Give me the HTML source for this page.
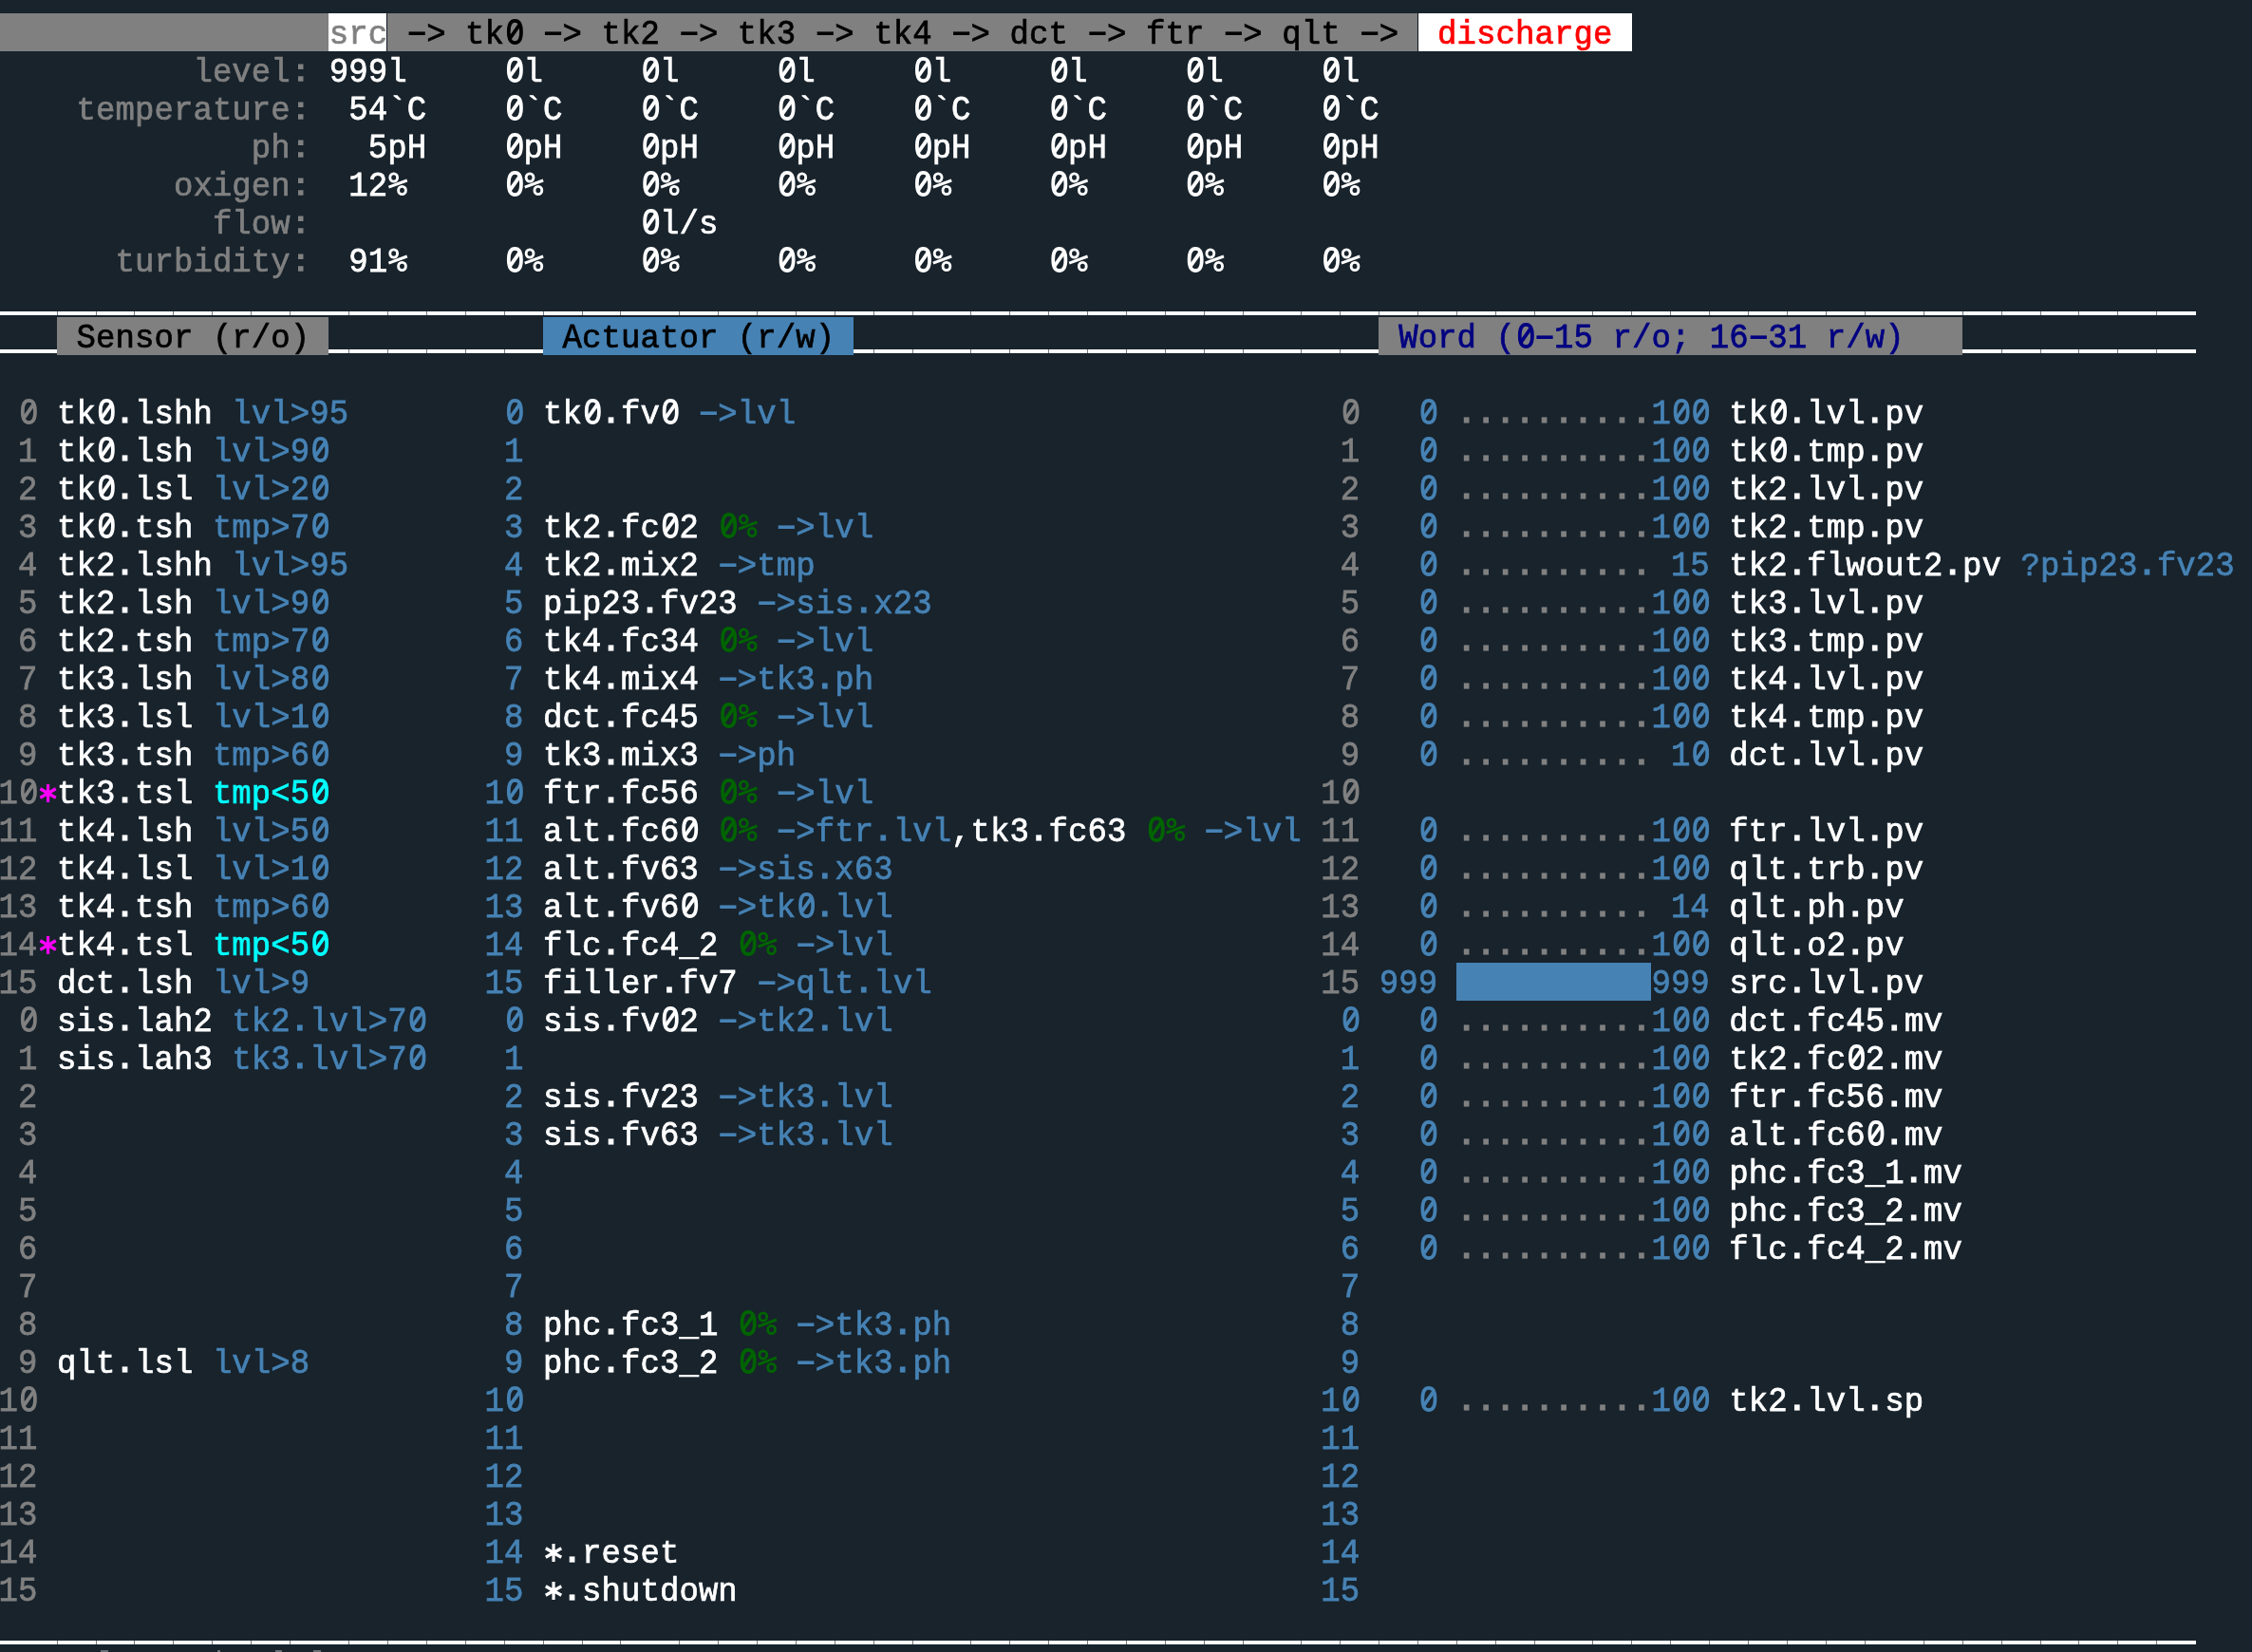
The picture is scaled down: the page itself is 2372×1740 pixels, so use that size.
<!DOCTYPE html><html><head><meta charset="utf-8"><style>
html,body{margin:0;padding:0;width:2372px;height:1740px;overflow:hidden;background:#18232c}
.r{position:absolute}
#tx{position:absolute;left:0;top:0;width:2372px;height:1740px;will-change:transform}
#tx div{position:absolute;white-space:pre;font-family:"Liberation Mono",monospace;font-size:34.00px;line-height:40px;height:40px;transform-origin:0 29px;-webkit-text-stroke:0.70px currentColor}
#tx .u{transform:scaleY(1.100)}#tx .l{transform:scaleY(1.050)}
.g{position:absolute;width:1px;height:4px;background:#767a80}
svg{position:absolute;left:0;top:0}
</style></head><body>
<div class="r" style="left:-2px;top:14px;width:348px;height:40px;background:#808080"></div>
<div class="r" style="left:0px;top:14px;width:346px;height:40px;background:#808080"></div>
<div class="r" style="left:346px;top:14px;width:62px;height:40px;background:#ffffff"></div>
<div class="r" style="left:408px;top:14px;width:1085px;height:40px;background:#808080"></div>
<div class="r" style="left:1494px;top:14px;width:225px;height:40px;background:#ffffff"></div>
<div class="r" style="left:60px;top:334px;width:286px;height:40px;background:#808080"></div>
<div class="r" style="left:572px;top:334px;width:327px;height:40px;background:#4682b4"></div>
<div class="r" style="left:1452px;top:334px;width:615px;height:40px;background:#808080"></div>
<div class="r" style="left:1534px;top:1014px;width:205px;height:40px;background:#4682b4"></div>
<div class="r" style="left:0px;top:328px;width:2313px;height:4px;background:#ffffff"></div>
<div class="r" style="left:0px;top:368px;width:2313px;height:4px;background:#ffffff"></div>
<div class="r" style="left:0px;top:1728px;width:2313px;height:4px;background:#ffffff"></div>
<div class="r" style="left:60px;top:334px;width:286px;height:40px;background:#808080"></div>
<div class="r" style="left:572px;top:334px;width:327px;height:40px;background:#4682b4"></div>
<div class="r" style="left:1452px;top:334px;width:615px;height:40px;background:#808080"></div>
<div class="g" style="left:60px;top:328px"></div>
<div class="g" style="left:101px;top:328px"></div>
<div class="g" style="left:141px;top:328px"></div>
<div class="g" style="left:182px;top:328px"></div>
<div class="g" style="left:223px;top:328px"></div>
<div class="g" style="left:264px;top:328px"></div>
<div class="g" style="left:305px;top:328px"></div>
<div class="g" style="left:367px;top:328px"></div>
<div class="g" style="left:408px;top:328px"></div>
<div class="g" style="left:449px;top:328px"></div>
<div class="g" style="left:490px;top:328px"></div>
<div class="g" style="left:531px;top:328px"></div>
<div class="g" style="left:572px;top:328px"></div>
<div class="g" style="left:613px;top:328px"></div>
<div class="g" style="left:653px;top:328px"></div>
<div class="g" style="left:715px;top:328px"></div>
<div class="g" style="left:756px;top:328px"></div>
<div class="g" style="left:797px;top:328px"></div>
<div class="g" style="left:838px;top:328px"></div>
<div class="g" style="left:879px;top:328px"></div>
<div class="g" style="left:920px;top:328px"></div>
<div class="g" style="left:961px;top:328px"></div>
<div class="g" style="left:1022px;top:328px"></div>
<div class="g" style="left:1063px;top:328px"></div>
<div class="g" style="left:1104px;top:328px"></div>
<div class="g" style="left:1145px;top:328px"></div>
<div class="g" style="left:1186px;top:328px"></div>
<div class="g" style="left:1227px;top:328px"></div>
<div class="g" style="left:1268px;top:328px"></div>
<div class="g" style="left:1309px;top:328px"></div>
<div class="g" style="left:1370px;top:328px"></div>
<div class="g" style="left:1411px;top:328px"></div>
<div class="g" style="left:1452px;top:328px"></div>
<div class="g" style="left:1493px;top:328px"></div>
<div class="g" style="left:1534px;top:328px"></div>
<div class="g" style="left:1575px;top:328px"></div>
<div class="g" style="left:1616px;top:328px"></div>
<div class="g" style="left:1677px;top:328px"></div>
<div class="g" style="left:1718px;top:328px"></div>
<div class="g" style="left:1759px;top:328px"></div>
<div class="g" style="left:1800px;top:328px"></div>
<div class="g" style="left:1841px;top:328px"></div>
<div class="g" style="left:1882px;top:328px"></div>
<div class="g" style="left:1923px;top:328px"></div>
<div class="g" style="left:1964px;top:328px"></div>
<div class="g" style="left:2026px;top:328px"></div>
<div class="g" style="left:2067px;top:328px"></div>
<div class="g" style="left:2108px;top:328px"></div>
<div class="g" style="left:2149px;top:328px"></div>
<div class="g" style="left:2189px;top:328px"></div>
<div class="g" style="left:2230px;top:328px"></div>
<div class="g" style="left:2271px;top:328px"></div>
<div class="g" style="left:367px;top:368px"></div>
<div class="g" style="left:408px;top:368px"></div>
<div class="g" style="left:449px;top:368px"></div>
<div class="g" style="left:490px;top:368px"></div>
<div class="g" style="left:531px;top:368px"></div>
<div class="g" style="left:920px;top:368px"></div>
<div class="g" style="left:961px;top:368px"></div>
<div class="g" style="left:1022px;top:368px"></div>
<div class="g" style="left:1063px;top:368px"></div>
<div class="g" style="left:1104px;top:368px"></div>
<div class="g" style="left:1145px;top:368px"></div>
<div class="g" style="left:1186px;top:368px"></div>
<div class="g" style="left:1227px;top:368px"></div>
<div class="g" style="left:1268px;top:368px"></div>
<div class="g" style="left:1309px;top:368px"></div>
<div class="g" style="left:1370px;top:368px"></div>
<div class="g" style="left:1411px;top:368px"></div>
<div class="g" style="left:2108px;top:368px"></div>
<div class="g" style="left:2149px;top:368px"></div>
<div class="g" style="left:2189px;top:368px"></div>
<div class="g" style="left:2230px;top:368px"></div>
<div class="g" style="left:2271px;top:368px"></div>
<div class="g" style="left:60px;top:1728px"></div>
<div class="g" style="left:101px;top:1728px"></div>
<div class="g" style="left:141px;top:1728px"></div>
<div class="g" style="left:182px;top:1728px"></div>
<div class="g" style="left:223px;top:1728px"></div>
<div class="g" style="left:264px;top:1728px"></div>
<div class="g" style="left:305px;top:1728px"></div>
<div class="g" style="left:367px;top:1728px"></div>
<div class="g" style="left:408px;top:1728px"></div>
<div class="g" style="left:449px;top:1728px"></div>
<div class="g" style="left:490px;top:1728px"></div>
<div class="g" style="left:531px;top:1728px"></div>
<div class="g" style="left:572px;top:1728px"></div>
<div class="g" style="left:613px;top:1728px"></div>
<div class="g" style="left:653px;top:1728px"></div>
<div class="g" style="left:715px;top:1728px"></div>
<div class="g" style="left:756px;top:1728px"></div>
<div class="g" style="left:797px;top:1728px"></div>
<div class="g" style="left:838px;top:1728px"></div>
<div class="g" style="left:879px;top:1728px"></div>
<div class="g" style="left:920px;top:1728px"></div>
<div class="g" style="left:961px;top:1728px"></div>
<div class="g" style="left:1022px;top:1728px"></div>
<div class="g" style="left:1063px;top:1728px"></div>
<div class="g" style="left:1104px;top:1728px"></div>
<div class="g" style="left:1145px;top:1728px"></div>
<div class="g" style="left:1186px;top:1728px"></div>
<div class="g" style="left:1227px;top:1728px"></div>
<div class="g" style="left:1268px;top:1728px"></div>
<div class="g" style="left:1309px;top:1728px"></div>
<div class="g" style="left:1370px;top:1728px"></div>
<div class="g" style="left:1411px;top:1728px"></div>
<div class="g" style="left:1452px;top:1728px"></div>
<div class="g" style="left:1493px;top:1728px"></div>
<div class="g" style="left:1534px;top:1728px"></div>
<div class="g" style="left:1575px;top:1728px"></div>
<div class="g" style="left:1616px;top:1728px"></div>
<div class="g" style="left:1677px;top:1728px"></div>
<div class="g" style="left:1718px;top:1728px"></div>
<div class="g" style="left:1759px;top:1728px"></div>
<div class="g" style="left:1800px;top:1728px"></div>
<div class="g" style="left:1841px;top:1728px"></div>
<div class="g" style="left:1882px;top:1728px"></div>
<div class="g" style="left:1923px;top:1728px"></div>
<div class="g" style="left:1964px;top:1728px"></div>
<div class="g" style="left:2026px;top:1728px"></div>
<div class="g" style="left:2067px;top:1728px"></div>
<div class="g" style="left:2108px;top:1728px"></div>
<div class="g" style="left:2149px;top:1728px"></div>
<div class="g" style="left:2189px;top:1728px"></div>
<div class="g" style="left:2230px;top:1728px"></div>
<div class="g" style="left:2271px;top:1728px"></div>
<div class="r" style="left:407px;top:14px;width:1px;height:40px;background:#0d1620"></div>
<div class="r" style="left:1493px;top:14px;width:1px;height:40px;background:#0d1620"></div>
<div class="r" style="left:106px;top:1738px;width:8px;height:2px;background:#6a6f75"></div>
<div class="r" style="left:229px;top:1738px;width:3px;height:2px;background:#6a6f75"></div>
<div class="r" style="left:290px;top:1738px;width:7px;height:2px;background:#6a6f75"></div>
<div class="r" style="left:330px;top:1738px;width:8px;height:2px;background:#6a6f75"></div>
<div id="tx">
<div class="l" style="left:346.76px;top:17.00px;color:#808080">s</div>
<div class="l" style="left:367.24px;top:17.00px;color:#808080">r</div>
<div class="l" style="left:387.72px;top:17.00px;color:#808080">c</div>
<div class="l" style="left:449.16px;top:17.00px;color:#000000">&gt;</div>
<div class="l" style="left:490.12px;top:17.00px;color:#000000">t</div>
<div class="l" style="left:510.60px;top:17.00px;color:#000000">k</div>
<div class="l" style="left:592.52px;top:17.00px;color:#000000">&gt;</div>
<div class="l" style="left:633.48px;top:17.00px;color:#000000">t</div>
<div class="l" style="left:653.96px;top:17.00px;color:#000000">k</div>
<div class="u" style="left:674.44px;top:17.00px;color:#000000">2</div>
<div class="l" style="left:735.88px;top:17.00px;color:#000000">&gt;</div>
<div class="l" style="left:776.84px;top:17.00px;color:#000000">t</div>
<div class="l" style="left:797.32px;top:17.00px;color:#000000">k</div>
<div class="u" style="left:817.80px;top:17.00px;color:#000000">3</div>
<div class="l" style="left:879.24px;top:17.00px;color:#000000">&gt;</div>
<div class="l" style="left:920.20px;top:17.00px;color:#000000">t</div>
<div class="l" style="left:940.68px;top:17.00px;color:#000000">k</div>
<div class="u" style="left:961.16px;top:17.00px;color:#000000">4</div>
<div class="l" style="left:1022.60px;top:17.00px;color:#000000">&gt;</div>
<div class="l" style="left:1063.56px;top:17.00px;color:#000000">d</div>
<div class="l" style="left:1084.04px;top:17.00px;color:#000000">c</div>
<div class="l" style="left:1104.52px;top:17.00px;color:#000000">t</div>
<div class="l" style="left:1165.96px;top:17.00px;color:#000000">&gt;</div>
<div class="l" style="left:1206.92px;top:17.00px;color:#000000">f</div>
<div class="l" style="left:1227.40px;top:17.00px;color:#000000">t</div>
<div class="l" style="left:1247.88px;top:17.00px;color:#000000">r</div>
<div class="l" style="left:1309.32px;top:17.00px;color:#000000">&gt;</div>
<div class="l" style="left:1350.28px;top:17.00px;color:#000000">q</div>
<div class="l" style="left:1370.76px;top:17.00px;color:#000000">l</div>
<div class="l" style="left:1391.24px;top:17.00px;color:#000000">t</div>
<div class="l" style="left:1452.68px;top:17.00px;color:#000000">&gt;</div>
<div class="l" style="left:1514.12px;top:17.00px;color:#ff0000">d</div>
<div class="l" style="left:1534.60px;top:17.00px;color:#ff0000">i</div>
<div class="l" style="left:1555.08px;top:17.00px;color:#ff0000">s</div>
<div class="l" style="left:1575.56px;top:17.00px;color:#ff0000">c</div>
<div class="l" style="left:1596.04px;top:17.00px;color:#ff0000">h</div>
<div class="l" style="left:1616.52px;top:17.00px;color:#ff0000">a</div>
<div class="l" style="left:1637.00px;top:17.00px;color:#ff0000">r</div>
<div class="l" style="left:1657.48px;top:17.00px;color:#ff0000">g</div>
<div class="l" style="left:1677.96px;top:17.00px;color:#ff0000">e</div>
<div class="l" style="left:203.40px;top:57.00px;color:#808080">l</div>
<div class="l" style="left:223.88px;top:57.00px;color:#808080">e</div>
<div class="l" style="left:244.36px;top:57.00px;color:#808080">v</div>
<div class="l" style="left:264.84px;top:57.00px;color:#808080">e</div>
<div class="l" style="left:285.32px;top:57.00px;color:#808080">l</div>
<div class="l" style="left:80.52px;top:97.00px;color:#808080">t</div>
<div class="l" style="left:101.00px;top:97.00px;color:#808080">e</div>
<div class="l" style="left:121.48px;top:97.00px;color:#808080">m</div>
<div class="l" style="left:141.96px;top:97.00px;color:#808080">p</div>
<div class="l" style="left:162.44px;top:97.00px;color:#808080">e</div>
<div class="l" style="left:182.92px;top:97.00px;color:#808080">r</div>
<div class="l" style="left:203.40px;top:97.00px;color:#808080">a</div>
<div class="l" style="left:223.88px;top:97.00px;color:#808080">t</div>
<div class="l" style="left:244.36px;top:97.00px;color:#808080">u</div>
<div class="l" style="left:264.84px;top:97.00px;color:#808080">r</div>
<div class="l" style="left:285.32px;top:97.00px;color:#808080">e</div>
<div class="l" style="left:264.84px;top:137.00px;color:#808080">p</div>
<div class="l" style="left:285.32px;top:137.00px;color:#808080">h</div>
<div class="l" style="left:182.92px;top:177.00px;color:#808080">o</div>
<div class="l" style="left:203.40px;top:177.00px;color:#808080">x</div>
<div class="l" style="left:223.88px;top:177.00px;color:#808080">i</div>
<div class="l" style="left:244.36px;top:177.00px;color:#808080">g</div>
<div class="l" style="left:264.84px;top:177.00px;color:#808080">e</div>
<div class="l" style="left:285.32px;top:177.00px;color:#808080">n</div>
<div class="l" style="left:223.88px;top:217.00px;color:#808080">f</div>
<div class="l" style="left:244.36px;top:217.00px;color:#808080">l</div>
<div class="l" style="left:264.84px;top:217.00px;color:#808080">o</div>
<div class="l" style="left:285.32px;top:217.00px;color:#808080">w</div>
<div class="l" style="left:121.48px;top:257.00px;color:#808080">t</div>
<div class="l" style="left:141.96px;top:257.00px;color:#808080">u</div>
<div class="l" style="left:162.44px;top:257.00px;color:#808080">r</div>
<div class="l" style="left:182.92px;top:257.00px;color:#808080">b</div>
<div class="l" style="left:203.40px;top:257.00px;color:#808080">i</div>
<div class="l" style="left:223.88px;top:257.00px;color:#808080">d</div>
<div class="l" style="left:244.36px;top:257.00px;color:#808080">i</div>
<div class="l" style="left:264.84px;top:257.00px;color:#808080">t</div>
<div class="l" style="left:285.32px;top:257.00px;color:#808080">y</div>
<div class="u" style="left:346.76px;top:57.00px;color:#ffffff">9</div>
<div class="u" style="left:367.24px;top:57.00px;color:#ffffff">9</div>
<div class="u" style="left:387.72px;top:57.00px;color:#ffffff">9</div>
<div class="l" style="left:408.20px;top:57.00px;color:#ffffff">l</div>
<div class="l" style="left:551.56px;top:57.00px;color:#ffffff">l</div>
<div class="l" style="left:694.92px;top:57.00px;color:#ffffff">l</div>
<div class="l" style="left:838.28px;top:57.00px;color:#ffffff">l</div>
<div class="l" style="left:981.64px;top:57.00px;color:#ffffff">l</div>
<div class="l" style="left:1125.00px;top:57.00px;color:#ffffff">l</div>
<div class="l" style="left:1268.36px;top:57.00px;color:#ffffff">l</div>
<div class="l" style="left:1411.72px;top:57.00px;color:#ffffff">l</div>
<div class="u" style="left:367.24px;top:97.00px;color:#ffffff">5</div>
<div class="u" style="left:387.72px;top:97.00px;color:#ffffff">4</div>
<div class="l" style="left:408.20px;top:97.00px;color:#ffffff">`</div>
<div class="u" style="left:428.68px;top:97.00px;color:#ffffff">C</div>
<div class="l" style="left:551.56px;top:97.00px;color:#ffffff">`</div>
<div class="u" style="left:572.04px;top:97.00px;color:#ffffff">C</div>
<div class="l" style="left:694.92px;top:97.00px;color:#ffffff">`</div>
<div class="u" style="left:715.40px;top:97.00px;color:#ffffff">C</div>
<div class="l" style="left:838.28px;top:97.00px;color:#ffffff">`</div>
<div class="u" style="left:858.76px;top:97.00px;color:#ffffff">C</div>
<div class="l" style="left:981.64px;top:97.00px;color:#ffffff">`</div>
<div class="u" style="left:1002.12px;top:97.00px;color:#ffffff">C</div>
<div class="l" style="left:1125.00px;top:97.00px;color:#ffffff">`</div>
<div class="u" style="left:1145.48px;top:97.00px;color:#ffffff">C</div>
<div class="l" style="left:1268.36px;top:97.00px;color:#ffffff">`</div>
<div class="u" style="left:1288.84px;top:97.00px;color:#ffffff">C</div>
<div class="l" style="left:1411.72px;top:97.00px;color:#ffffff">`</div>
<div class="u" style="left:1432.20px;top:97.00px;color:#ffffff">C</div>
<div class="u" style="left:387.72px;top:137.00px;color:#ffffff">5</div>
<div class="l" style="left:408.20px;top:137.00px;color:#ffffff">p</div>
<div class="u" style="left:428.68px;top:137.00px;color:#ffffff">H</div>
<div class="l" style="left:551.56px;top:137.00px;color:#ffffff">p</div>
<div class="u" style="left:572.04px;top:137.00px;color:#ffffff">H</div>
<div class="l" style="left:694.92px;top:137.00px;color:#ffffff">p</div>
<div class="u" style="left:715.40px;top:137.00px;color:#ffffff">H</div>
<div class="l" style="left:838.28px;top:137.00px;color:#ffffff">p</div>
<div class="u" style="left:858.76px;top:137.00px;color:#ffffff">H</div>
<div class="l" style="left:981.64px;top:137.00px;color:#ffffff">p</div>
<div class="u" style="left:1002.12px;top:137.00px;color:#ffffff">H</div>
<div class="l" style="left:1125.00px;top:137.00px;color:#ffffff">p</div>
<div class="u" style="left:1145.48px;top:137.00px;color:#ffffff">H</div>
<div class="l" style="left:1268.36px;top:137.00px;color:#ffffff">p</div>
<div class="u" style="left:1288.84px;top:137.00px;color:#ffffff">H</div>
<div class="l" style="left:1411.72px;top:137.00px;color:#ffffff">p</div>
<div class="u" style="left:1432.20px;top:137.00px;color:#ffffff">H</div>
<div class="u" style="left:367.24px;top:177.00px;color:#ffffff">1</div>
<div class="u" style="left:387.72px;top:177.00px;color:#ffffff">2</div>
<div class="l" style="left:694.92px;top:217.00px;color:#ffffff">l</div>
<div class="l" style="left:715.40px;top:217.00px;color:#ffffff">/</div>
<div class="l" style="left:735.88px;top:217.00px;color:#ffffff">s</div>
<div class="u" style="left:367.24px;top:257.00px;color:#ffffff">9</div>
<div class="u" style="left:387.72px;top:257.00px;color:#ffffff">1</div>
<div class="u" style="left:80.52px;top:337.00px;color:#000000">S</div>
<div class="l" style="left:101.00px;top:337.00px;color:#000000">e</div>
<div class="l" style="left:121.48px;top:337.00px;color:#000000">n</div>
<div class="l" style="left:141.96px;top:337.00px;color:#000000">s</div>
<div class="l" style="left:162.44px;top:337.00px;color:#000000">o</div>
<div class="l" style="left:182.92px;top:337.00px;color:#000000">r</div>
<div class="l" style="left:223.88px;top:337.00px;color:#000000">(</div>
<div class="l" style="left:244.36px;top:337.00px;color:#000000">r</div>
<div class="l" style="left:264.84px;top:337.00px;color:#000000">/</div>
<div class="l" style="left:285.32px;top:337.00px;color:#000000">o</div>
<div class="l" style="left:305.80px;top:337.00px;color:#000000">)</div>
<div class="u" style="left:592.52px;top:337.00px;color:#000000">A</div>
<div class="l" style="left:613.00px;top:337.00px;color:#000000">c</div>
<div class="l" style="left:633.48px;top:337.00px;color:#000000">t</div>
<div class="l" style="left:653.96px;top:337.00px;color:#000000">u</div>
<div class="l" style="left:674.44px;top:337.00px;color:#000000">a</div>
<div class="l" style="left:694.92px;top:337.00px;color:#000000">t</div>
<div class="l" style="left:715.40px;top:337.00px;color:#000000">o</div>
<div class="l" style="left:735.88px;top:337.00px;color:#000000">r</div>
<div class="l" style="left:776.84px;top:337.00px;color:#000000">(</div>
<div class="l" style="left:797.32px;top:337.00px;color:#000000">r</div>
<div class="l" style="left:817.80px;top:337.00px;color:#000000">/</div>
<div class="l" style="left:838.28px;top:337.00px;color:#000000">w</div>
<div class="l" style="left:858.76px;top:337.00px;color:#000000">)</div>
<div class="u" style="left:1473.16px;top:337.00px;color:#000080">W</div>
<div class="l" style="left:1493.64px;top:337.00px;color:#000080">o</div>
<div class="l" style="left:1514.12px;top:337.00px;color:#000080">r</div>
<div class="l" style="left:1534.60px;top:337.00px;color:#000080">d</div>
<div class="l" style="left:1575.56px;top:337.00px;color:#000080">(</div>
<div class="u" style="left:1637.00px;top:337.00px;color:#000080">1</div>
<div class="u" style="left:1657.48px;top:337.00px;color:#000080">5</div>
<div class="l" style="left:1698.44px;top:337.00px;color:#000080">r</div>
<div class="l" style="left:1718.92px;top:337.00px;color:#000080">/</div>
<div class="l" style="left:1739.40px;top:337.00px;color:#000080">o</div>
<div class="l" style="left:1759.88px;top:337.00px;color:#000080">;</div>
<div class="u" style="left:1800.84px;top:337.00px;color:#000080">1</div>
<div class="u" style="left:1821.32px;top:337.00px;color:#000080">6</div>
<div class="u" style="left:1862.28px;top:337.00px;color:#000080">3</div>
<div class="u" style="left:1882.76px;top:337.00px;color:#000080">1</div>
<div class="l" style="left:1923.72px;top:337.00px;color:#000080">r</div>
<div class="l" style="left:1944.20px;top:337.00px;color:#000080">/</div>
<div class="l" style="left:1964.68px;top:337.00px;color:#000080">w</div>
<div class="l" style="left:1985.16px;top:337.00px;color:#000080">)</div>
<div class="l" style="left:60.04px;top:417.00px;color:#ffffff">t</div>
<div class="l" style="left:80.52px;top:417.00px;color:#ffffff">k</div>
<div class="l" style="left:141.96px;top:417.00px;color:#ffffff">l</div>
<div class="l" style="left:162.44px;top:417.00px;color:#ffffff">s</div>
<div class="l" style="left:182.92px;top:417.00px;color:#ffffff">h</div>
<div class="l" style="left:203.40px;top:417.00px;color:#ffffff">h</div>
<div class="l" style="left:244.36px;top:417.00px;color:#4682b4">l</div>
<div class="l" style="left:264.84px;top:417.00px;color:#4682b4">v</div>
<div class="l" style="left:285.32px;top:417.00px;color:#4682b4">l</div>
<div class="l" style="left:305.80px;top:417.00px;color:#4682b4">&gt;</div>
<div class="u" style="left:326.28px;top:417.00px;color:#4682b4">9</div>
<div class="u" style="left:346.76px;top:417.00px;color:#4682b4">5</div>
<div class="u" style="left:19.08px;top:457.00px;color:#808080">1</div>
<div class="l" style="left:60.04px;top:457.00px;color:#ffffff">t</div>
<div class="l" style="left:80.52px;top:457.00px;color:#ffffff">k</div>
<div class="l" style="left:141.96px;top:457.00px;color:#ffffff">l</div>
<div class="l" style="left:162.44px;top:457.00px;color:#ffffff">s</div>
<div class="l" style="left:182.92px;top:457.00px;color:#ffffff">h</div>
<div class="l" style="left:223.88px;top:457.00px;color:#4682b4">l</div>
<div class="l" style="left:244.36px;top:457.00px;color:#4682b4">v</div>
<div class="l" style="left:264.84px;top:457.00px;color:#4682b4">l</div>
<div class="l" style="left:285.32px;top:457.00px;color:#4682b4">&gt;</div>
<div class="u" style="left:305.80px;top:457.00px;color:#4682b4">9</div>
<div class="u" style="left:19.08px;top:497.00px;color:#808080">2</div>
<div class="l" style="left:60.04px;top:497.00px;color:#ffffff">t</div>
<div class="l" style="left:80.52px;top:497.00px;color:#ffffff">k</div>
<div class="l" style="left:141.96px;top:497.00px;color:#ffffff">l</div>
<div class="l" style="left:162.44px;top:497.00px;color:#ffffff">s</div>
<div class="l" style="left:182.92px;top:497.00px;color:#ffffff">l</div>
<div class="l" style="left:223.88px;top:497.00px;color:#4682b4">l</div>
<div class="l" style="left:244.36px;top:497.00px;color:#4682b4">v</div>
<div class="l" style="left:264.84px;top:497.00px;color:#4682b4">l</div>
<div class="l" style="left:285.32px;top:497.00px;color:#4682b4">&gt;</div>
<div class="u" style="left:305.80px;top:497.00px;color:#4682b4">2</div>
<div class="u" style="left:19.08px;top:537.00px;color:#808080">3</div>
<div class="l" style="left:60.04px;top:537.00px;color:#ffffff">t</div>
<div class="l" style="left:80.52px;top:537.00px;color:#ffffff">k</div>
<div class="l" style="left:141.96px;top:537.00px;color:#ffffff">t</div>
<div class="l" style="left:162.44px;top:537.00px;color:#ffffff">s</div>
<div class="l" style="left:182.92px;top:537.00px;color:#ffffff">h</div>
<div class="l" style="left:223.88px;top:537.00px;color:#4682b4">t</div>
<div class="l" style="left:244.36px;top:537.00px;color:#4682b4">m</div>
<div class="l" style="left:264.84px;top:537.00px;color:#4682b4">p</div>
<div class="l" style="left:285.32px;top:537.00px;color:#4682b4">&gt;</div>
<div class="u" style="left:305.80px;top:537.00px;color:#4682b4">7</div>
<div class="u" style="left:19.08px;top:577.00px;color:#808080">4</div>
<div class="l" style="left:60.04px;top:577.00px;color:#ffffff">t</div>
<div class="l" style="left:80.52px;top:577.00px;color:#ffffff">k</div>
<div class="u" style="left:101.00px;top:577.00px;color:#ffffff">2</div>
<div class="l" style="left:141.96px;top:577.00px;color:#ffffff">l</div>
<div class="l" style="left:162.44px;top:577.00px;color:#ffffff">s</div>
<div class="l" style="left:182.92px;top:577.00px;color:#ffffff">h</div>
<div class="l" style="left:203.40px;top:577.00px;color:#ffffff">h</div>
<div class="l" style="left:244.36px;top:577.00px;color:#4682b4">l</div>
<div class="l" style="left:264.84px;top:577.00px;color:#4682b4">v</div>
<div class="l" style="left:285.32px;top:577.00px;color:#4682b4">l</div>
<div class="l" style="left:305.80px;top:577.00px;color:#4682b4">&gt;</div>
<div class="u" style="left:326.28px;top:577.00px;color:#4682b4">9</div>
<div class="u" style="left:346.76px;top:577.00px;color:#4682b4">5</div>
<div class="u" style="left:19.08px;top:617.00px;color:#808080">5</div>
<div class="l" style="left:60.04px;top:617.00px;color:#ffffff">t</div>
<div class="l" style="left:80.52px;top:617.00px;color:#ffffff">k</div>
<div class="u" style="left:101.00px;top:617.00px;color:#ffffff">2</div>
<div class="l" style="left:141.96px;top:617.00px;color:#ffffff">l</div>
<div class="l" style="left:162.44px;top:617.00px;color:#ffffff">s</div>
<div class="l" style="left:182.92px;top:617.00px;color:#ffffff">h</div>
<div class="l" style="left:223.88px;top:617.00px;color:#4682b4">l</div>
<div class="l" style="left:244.36px;top:617.00px;color:#4682b4">v</div>
<div class="l" style="left:264.84px;top:617.00px;color:#4682b4">l</div>
<div class="l" style="left:285.32px;top:617.00px;color:#4682b4">&gt;</div>
<div class="u" style="left:305.80px;top:617.00px;color:#4682b4">9</div>
<div class="u" style="left:19.08px;top:657.00px;color:#808080">6</div>
<div class="l" style="left:60.04px;top:657.00px;color:#ffffff">t</div>
<div class="l" style="left:80.52px;top:657.00px;color:#ffffff">k</div>
<div class="u" style="left:101.00px;top:657.00px;color:#ffffff">2</div>
<div class="l" style="left:141.96px;top:657.00px;color:#ffffff">t</div>
<div class="l" style="left:162.44px;top:657.00px;color:#ffffff">s</div>
<div class="l" style="left:182.92px;top:657.00px;color:#ffffff">h</div>
<div class="l" style="left:223.88px;top:657.00px;color:#4682b4">t</div>
<div class="l" style="left:244.36px;top:657.00px;color:#4682b4">m</div>
<div class="l" style="left:264.84px;top:657.00px;color:#4682b4">p</div>
<div class="l" style="left:285.32px;top:657.00px;color:#4682b4">&gt;</div>
<div class="u" style="left:305.80px;top:657.00px;color:#4682b4">7</div>
<div class="u" style="left:19.08px;top:697.00px;color:#808080">7</div>
<div class="l" style="left:60.04px;top:697.00px;color:#ffffff">t</div>
<div class="l" style="left:80.52px;top:697.00px;color:#ffffff">k</div>
<div class="u" style="left:101.00px;top:697.00px;color:#ffffff">3</div>
<div class="l" style="left:141.96px;top:697.00px;color:#ffffff">l</div>
<div class="l" style="left:162.44px;top:697.00px;color:#ffffff">s</div>
<div class="l" style="left:182.92px;top:697.00px;color:#ffffff">h</div>
<div class="l" style="left:223.88px;top:697.00px;color:#4682b4">l</div>
<div class="l" style="left:244.36px;top:697.00px;color:#4682b4">v</div>
<div class="l" style="left:264.84px;top:697.00px;color:#4682b4">l</div>
<div class="l" style="left:285.32px;top:697.00px;color:#4682b4">&gt;</div>
<div class="u" style="left:305.80px;top:697.00px;color:#4682b4">8</div>
<div class="u" style="left:19.08px;top:737.00px;color:#808080">8</div>
<div class="l" style="left:60.04px;top:737.00px;color:#ffffff">t</div>
<div class="l" style="left:80.52px;top:737.00px;color:#ffffff">k</div>
<div class="u" style="left:101.00px;top:737.00px;color:#ffffff">3</div>
<div class="l" style="left:141.96px;top:737.00px;color:#ffffff">l</div>
<div class="l" style="left:162.44px;top:737.00px;color:#ffffff">s</div>
<div class="l" style="left:182.92px;top:737.00px;color:#ffffff">l</div>
<div class="l" style="left:223.88px;top:737.00px;color:#4682b4">l</div>
<div class="l" style="left:244.36px;top:737.00px;color:#4682b4">v</div>
<div class="l" style="left:264.84px;top:737.00px;color:#4682b4">l</div>
<div class="l" style="left:285.32px;top:737.00px;color:#4682b4">&gt;</div>
<div class="u" style="left:305.80px;top:737.00px;color:#4682b4">1</div>
<div class="u" style="left:19.08px;top:777.00px;color:#808080">9</div>
<div class="l" style="left:60.04px;top:777.00px;color:#ffffff">t</div>
<div class="l" style="left:80.52px;top:777.00px;color:#ffffff">k</div>
<div class="u" style="left:101.00px;top:777.00px;color:#ffffff">3</div>
<div class="l" style="left:141.96px;top:777.00px;color:#ffffff">t</div>
<div class="l" style="left:162.44px;top:777.00px;color:#ffffff">s</div>
<div class="l" style="left:182.92px;top:777.00px;color:#ffffff">h</div>
<div class="l" style="left:223.88px;top:777.00px;color:#4682b4">t</div>
<div class="l" style="left:244.36px;top:777.00px;color:#4682b4">m</div>
<div class="l" style="left:264.84px;top:777.00px;color:#4682b4">p</div>
<div class="l" style="left:285.32px;top:777.00px;color:#4682b4">&gt;</div>
<div class="u" style="left:305.80px;top:777.00px;color:#4682b4">6</div>
<div class="u" style="left:-1.40px;top:817.00px;color:#808080">1</div>
<div class="l" style="left:60.04px;top:817.00px;color:#ffffff">t</div>
<div class="l" style="left:80.52px;top:817.00px;color:#ffffff">k</div>
<div class="u" style="left:101.00px;top:817.00px;color:#ffffff">3</div>
<div class="l" style="left:141.96px;top:817.00px;color:#ffffff">t</div>
<div class="l" style="left:162.44px;top:817.00px;color:#ffffff">s</div>
<div class="l" style="left:182.92px;top:817.00px;color:#ffffff">l</div>
<div class="l" style="left:223.88px;top:817.00px;color:#00ffff">t</div>
<div class="l" style="left:244.36px;top:817.00px;color:#00ffff">m</div>
<div class="l" style="left:264.84px;top:817.00px;color:#00ffff">p</div>
<div class="l" style="left:285.32px;top:817.00px;color:#00ffff">&lt;</div>
<div class="u" style="left:305.80px;top:817.00px;color:#00ffff">5</div>
<div class="u" style="left:-1.40px;top:857.00px;color:#808080">1</div>
<div class="u" style="left:19.08px;top:857.00px;color:#808080">1</div>
<div class="l" style="left:60.04px;top:857.00px;color:#ffffff">t</div>
<div class="l" style="left:80.52px;top:857.00px;color:#ffffff">k</div>
<div class="u" style="left:101.00px;top:857.00px;color:#ffffff">4</div>
<div class="l" style="left:141.96px;top:857.00px;color:#ffffff">l</div>
<div class="l" style="left:162.44px;top:857.00px;color:#ffffff">s</div>
<div class="l" style="left:182.92px;top:857.00px;color:#ffffff">h</div>
<div class="l" style="left:223.88px;top:857.00px;color:#4682b4">l</div>
<div class="l" style="left:244.36px;top:857.00px;color:#4682b4">v</div>
<div class="l" style="left:264.84px;top:857.00px;color:#4682b4">l</div>
<div class="l" style="left:285.32px;top:857.00px;color:#4682b4">&gt;</div>
<div class="u" style="left:305.80px;top:857.00px;color:#4682b4">5</div>
<div class="u" style="left:-1.40px;top:897.00px;color:#808080">1</div>
<div class="u" style="left:19.08px;top:897.00px;color:#808080">2</div>
<div class="l" style="left:60.04px;top:897.00px;color:#ffffff">t</div>
<div class="l" style="left:80.52px;top:897.00px;color:#ffffff">k</div>
<div class="u" style="left:101.00px;top:897.00px;color:#ffffff">4</div>
<div class="l" style="left:141.96px;top:897.00px;color:#ffffff">l</div>
<div class="l" style="left:162.44px;top:897.00px;color:#ffffff">s</div>
<div class="l" style="left:182.92px;top:897.00px;color:#ffffff">l</div>
<div class="l" style="left:223.88px;top:897.00px;color:#4682b4">l</div>
<div class="l" style="left:244.36px;top:897.00px;color:#4682b4">v</div>
<div class="l" style="left:264.84px;top:897.00px;color:#4682b4">l</div>
<div class="l" style="left:285.32px;top:897.00px;color:#4682b4">&gt;</div>
<div class="u" style="left:305.80px;top:897.00px;color:#4682b4">1</div>
<div class="u" style="left:-1.40px;top:937.00px;color:#808080">1</div>
<div class="u" style="left:19.08px;top:937.00px;color:#808080">3</div>
<div class="l" style="left:60.04px;top:937.00px;color:#ffffff">t</div>
<div class="l" style="left:80.52px;top:937.00px;color:#ffffff">k</div>
<div class="u" style="left:101.00px;top:937.00px;color:#ffffff">4</div>
<div class="l" style="left:141.96px;top:937.00px;color:#ffffff">t</div>
<div class="l" style="left:162.44px;top:937.00px;color:#ffffff">s</div>
<div class="l" style="left:182.92px;top:937.00px;color:#ffffff">h</div>
<div class="l" style="left:223.88px;top:937.00px;color:#4682b4">t</div>
<div class="l" style="left:244.36px;top:937.00px;color:#4682b4">m</div>
<div class="l" style="left:264.84px;top:937.00px;color:#4682b4">p</div>
<div class="l" style="left:285.32px;top:937.00px;color:#4682b4">&gt;</div>
<div class="u" style="left:305.80px;top:937.00px;color:#4682b4">6</div>
<div class="u" style="left:-1.40px;top:977.00px;color:#808080">1</div>
<div class="u" style="left:19.08px;top:977.00px;color:#808080">4</div>
<div class="l" style="left:60.04px;top:977.00px;color:#ffffff">t</div>
<div class="l" style="left:80.52px;top:977.00px;color:#ffffff">k</div>
<div class="u" style="left:101.00px;top:977.00px;color:#ffffff">4</div>
<div class="l" style="left:141.96px;top:977.00px;color:#ffffff">t</div>
<div class="l" style="left:162.44px;top:977.00px;color:#ffffff">s</div>
<div class="l" style="left:182.92px;top:977.00px;color:#ffffff">l</div>
<div class="l" style="left:223.88px;top:977.00px;color:#00ffff">t</div>
<div class="l" style="left:244.36px;top:977.00px;color:#00ffff">m</div>
<div class="l" style="left:264.84px;top:977.00px;color:#00ffff">p</div>
<div class="l" style="left:285.32px;top:977.00px;color:#00ffff">&lt;</div>
<div class="u" style="left:305.80px;top:977.00px;color:#00ffff">5</div>
<div class="u" style="left:-1.40px;top:1017.00px;color:#808080">1</div>
<div class="u" style="left:19.08px;top:1017.00px;color:#808080">5</div>
<div class="l" style="left:60.04px;top:1017.00px;color:#ffffff">d</div>
<div class="l" style="left:80.52px;top:1017.00px;color:#ffffff">c</div>
<div class="l" style="left:101.00px;top:1017.00px;color:#ffffff">t</div>
<div class="l" style="left:141.96px;top:1017.00px;color:#ffffff">l</div>
<div class="l" style="left:162.44px;top:1017.00px;color:#ffffff">s</div>
<div class="l" style="left:182.92px;top:1017.00px;color:#ffffff">h</div>
<div class="l" style="left:223.88px;top:1017.00px;color:#4682b4">l</div>
<div class="l" style="left:244.36px;top:1017.00px;color:#4682b4">v</div>
<div class="l" style="left:264.84px;top:1017.00px;color:#4682b4">l</div>
<div class="l" style="left:285.32px;top:1017.00px;color:#4682b4">&gt;</div>
<div class="u" style="left:305.80px;top:1017.00px;color:#4682b4">9</div>
<div class="l" style="left:60.04px;top:1057.00px;color:#ffffff">s</div>
<div class="l" style="left:80.52px;top:1057.00px;color:#ffffff">i</div>
<div class="l" style="left:101.00px;top:1057.00px;color:#ffffff">s</div>
<div class="l" style="left:141.96px;top:1057.00px;color:#ffffff">l</div>
<div class="l" style="left:162.44px;top:1057.00px;color:#ffffff">a</div>
<div class="l" style="left:182.92px;top:1057.00px;color:#ffffff">h</div>
<div class="u" style="left:203.40px;top:1057.00px;color:#ffffff">2</div>
<div class="l" style="left:244.36px;top:1057.00px;color:#4682b4">t</div>
<div class="l" style="left:264.84px;top:1057.00px;color:#4682b4">k</div>
<div class="u" style="left:285.32px;top:1057.00px;color:#4682b4">2</div>
<div class="l" style="left:326.28px;top:1057.00px;color:#4682b4">l</div>
<div class="l" style="left:346.76px;top:1057.00px;color:#4682b4">v</div>
<div class="l" style="left:367.24px;top:1057.00px;color:#4682b4">l</div>
<div class="l" style="left:387.72px;top:1057.00px;color:#4682b4">&gt;</div>
<div class="u" style="left:408.20px;top:1057.00px;color:#4682b4">7</div>
<div class="u" style="left:19.08px;top:1097.00px;color:#808080">1</div>
<div class="l" style="left:60.04px;top:1097.00px;color:#ffffff">s</div>
<div class="l" style="left:80.52px;top:1097.00px;color:#ffffff">i</div>
<div class="l" style="left:101.00px;top:1097.00px;color:#ffffff">s</div>
<div class="l" style="left:141.96px;top:1097.00px;color:#ffffff">l</div>
<div class="l" style="left:162.44px;top:1097.00px;color:#ffffff">a</div>
<div class="l" style="left:182.92px;top:1097.00px;color:#ffffff">h</div>
<div class="u" style="left:203.40px;top:1097.00px;color:#ffffff">3</div>
<div class="l" style="left:244.36px;top:1097.00px;color:#4682b4">t</div>
<div class="l" style="left:264.84px;top:1097.00px;color:#4682b4">k</div>
<div class="u" style="left:285.32px;top:1097.00px;color:#4682b4">3</div>
<div class="l" style="left:326.28px;top:1097.00px;color:#4682b4">l</div>
<div class="l" style="left:346.76px;top:1097.00px;color:#4682b4">v</div>
<div class="l" style="left:367.24px;top:1097.00px;color:#4682b4">l</div>
<div class="l" style="left:387.72px;top:1097.00px;color:#4682b4">&gt;</div>
<div class="u" style="left:408.20px;top:1097.00px;color:#4682b4">7</div>
<div class="u" style="left:19.08px;top:1137.00px;color:#808080">2</div>
<div class="u" style="left:19.08px;top:1177.00px;color:#808080">3</div>
<div class="u" style="left:19.08px;top:1217.00px;color:#808080">4</div>
<div class="u" style="left:19.08px;top:1257.00px;color:#808080">5</div>
<div class="u" style="left:19.08px;top:1297.00px;color:#808080">6</div>
<div class="u" style="left:19.08px;top:1337.00px;color:#808080">7</div>
<div class="u" style="left:19.08px;top:1377.00px;color:#808080">8</div>
<div class="u" style="left:19.08px;top:1417.00px;color:#808080">9</div>
<div class="l" style="left:60.04px;top:1417.00px;color:#ffffff">q</div>
<div class="l" style="left:80.52px;top:1417.00px;color:#ffffff">l</div>
<div class="l" style="left:101.00px;top:1417.00px;color:#ffffff">t</div>
<div class="l" style="left:141.96px;top:1417.00px;color:#ffffff">l</div>
<div class="l" style="left:162.44px;top:1417.00px;color:#ffffff">s</div>
<div class="l" style="left:182.92px;top:1417.00px;color:#ffffff">l</div>
<div class="l" style="left:223.88px;top:1417.00px;color:#4682b4">l</div>
<div class="l" style="left:244.36px;top:1417.00px;color:#4682b4">v</div>
<div class="l" style="left:264.84px;top:1417.00px;color:#4682b4">l</div>
<div class="l" style="left:285.32px;top:1417.00px;color:#4682b4">&gt;</div>
<div class="u" style="left:305.80px;top:1417.00px;color:#4682b4">8</div>
<div class="u" style="left:-1.40px;top:1457.00px;color:#808080">1</div>
<div class="u" style="left:-1.40px;top:1497.00px;color:#808080">1</div>
<div class="u" style="left:19.08px;top:1497.00px;color:#808080">1</div>
<div class="u" style="left:-1.40px;top:1537.00px;color:#808080">1</div>
<div class="u" style="left:19.08px;top:1537.00px;color:#808080">2</div>
<div class="u" style="left:-1.40px;top:1577.00px;color:#808080">1</div>
<div class="u" style="left:19.08px;top:1577.00px;color:#808080">3</div>
<div class="u" style="left:-1.40px;top:1617.00px;color:#808080">1</div>
<div class="u" style="left:19.08px;top:1617.00px;color:#808080">4</div>
<div class="u" style="left:-1.40px;top:1657.00px;color:#808080">1</div>
<div class="u" style="left:19.08px;top:1657.00px;color:#808080">5</div>
<div class="l" style="left:572.04px;top:417.00px;color:#ffffff">t</div>
<div class="l" style="left:592.52px;top:417.00px;color:#ffffff">k</div>
<div class="l" style="left:653.96px;top:417.00px;color:#ffffff">f</div>
<div class="l" style="left:674.44px;top:417.00px;color:#ffffff">v</div>
<div class="l" style="left:756.36px;top:417.00px;color:#4682b4">&gt;</div>
<div class="l" style="left:776.84px;top:417.00px;color:#4682b4">l</div>
<div class="l" style="left:797.32px;top:417.00px;color:#4682b4">v</div>
<div class="l" style="left:817.80px;top:417.00px;color:#4682b4">l</div>
<div class="u" style="left:531.08px;top:457.00px;color:#4682b4">1</div>
<div class="u" style="left:531.08px;top:497.00px;color:#4682b4">2</div>
<div class="u" style="left:531.08px;top:537.00px;color:#4682b4">3</div>
<div class="l" style="left:572.04px;top:537.00px;color:#ffffff">t</div>
<div class="l" style="left:592.52px;top:537.00px;color:#ffffff">k</div>
<div class="u" style="left:613.00px;top:537.00px;color:#ffffff">2</div>
<div class="l" style="left:653.96px;top:537.00px;color:#ffffff">f</div>
<div class="l" style="left:674.44px;top:537.00px;color:#ffffff">c</div>
<div class="u" style="left:715.40px;top:537.00px;color:#ffffff">2</div>
<div class="l" style="left:838.28px;top:537.00px;color:#4682b4">&gt;</div>
<div class="l" style="left:858.76px;top:537.00px;color:#4682b4">l</div>
<div class="l" style="left:879.24px;top:537.00px;color:#4682b4">v</div>
<div class="l" style="left:899.72px;top:537.00px;color:#4682b4">l</div>
<div class="u" style="left:531.08px;top:577.00px;color:#4682b4">4</div>
<div class="l" style="left:572.04px;top:577.00px;color:#ffffff">t</div>
<div class="l" style="left:592.52px;top:577.00px;color:#ffffff">k</div>
<div class="u" style="left:613.00px;top:577.00px;color:#ffffff">2</div>
<div class="l" style="left:653.96px;top:577.00px;color:#ffffff">m</div>
<div class="l" style="left:674.44px;top:577.00px;color:#ffffff">i</div>
<div class="l" style="left:694.92px;top:577.00px;color:#ffffff">x</div>
<div class="u" style="left:715.40px;top:577.00px;color:#ffffff">2</div>
<div class="l" style="left:776.84px;top:577.00px;color:#4682b4">&gt;</div>
<div class="l" style="left:797.32px;top:577.00px;color:#4682b4">t</div>
<div class="l" style="left:817.80px;top:577.00px;color:#4682b4">m</div>
<div class="l" style="left:838.28px;top:577.00px;color:#4682b4">p</div>
<div class="u" style="left:531.08px;top:617.00px;color:#4682b4">5</div>
<div class="l" style="left:572.04px;top:617.00px;color:#ffffff">p</div>
<div class="l" style="left:592.52px;top:617.00px;color:#ffffff">i</div>
<div class="l" style="left:613.00px;top:617.00px;color:#ffffff">p</div>
<div class="u" style="left:633.48px;top:617.00px;color:#ffffff">2</div>
<div class="u" style="left:653.96px;top:617.00px;color:#ffffff">3</div>
<div class="l" style="left:694.92px;top:617.00px;color:#ffffff">f</div>
<div class="l" style="left:715.40px;top:617.00px;color:#ffffff">v</div>
<div class="u" style="left:735.88px;top:617.00px;color:#ffffff">2</div>
<div class="u" style="left:756.36px;top:617.00px;color:#ffffff">3</div>
<div class="l" style="left:817.80px;top:617.00px;color:#4682b4">&gt;</div>
<div class="l" style="left:838.28px;top:617.00px;color:#4682b4">s</div>
<div class="l" style="left:858.76px;top:617.00px;color:#4682b4">i</div>
<div class="l" style="left:879.24px;top:617.00px;color:#4682b4">s</div>
<div class="l" style="left:920.20px;top:617.00px;color:#4682b4">x</div>
<div class="u" style="left:940.68px;top:617.00px;color:#4682b4">2</div>
<div class="u" style="left:961.16px;top:617.00px;color:#4682b4">3</div>
<div class="u" style="left:531.08px;top:657.00px;color:#4682b4">6</div>
<div class="l" style="left:572.04px;top:657.00px;color:#ffffff">t</div>
<div class="l" style="left:592.52px;top:657.00px;color:#ffffff">k</div>
<div class="u" style="left:613.00px;top:657.00px;color:#ffffff">4</div>
<div class="l" style="left:653.96px;top:657.00px;color:#ffffff">f</div>
<div class="l" style="left:674.44px;top:657.00px;color:#ffffff">c</div>
<div class="u" style="left:694.92px;top:657.00px;color:#ffffff">3</div>
<div class="u" style="left:715.40px;top:657.00px;color:#ffffff">4</div>
<div class="l" style="left:838.28px;top:657.00px;color:#4682b4">&gt;</div>
<div class="l" style="left:858.76px;top:657.00px;color:#4682b4">l</div>
<div class="l" style="left:879.24px;top:657.00px;color:#4682b4">v</div>
<div class="l" style="left:899.72px;top:657.00px;color:#4682b4">l</div>
<div class="u" style="left:531.08px;top:697.00px;color:#4682b4">7</div>
<div class="l" style="left:572.04px;top:697.00px;color:#ffffff">t</div>
<div class="l" style="left:592.52px;top:697.00px;color:#ffffff">k</div>
<div class="u" style="left:613.00px;top:697.00px;color:#ffffff">4</div>
<div class="l" style="left:653.96px;top:697.00px;color:#ffffff">m</div>
<div class="l" style="left:674.44px;top:697.00px;color:#ffffff">i</div>
<div class="l" style="left:694.92px;top:697.00px;color:#ffffff">x</div>
<div class="u" style="left:715.40px;top:697.00px;color:#ffffff">4</div>
<div class="l" style="left:776.84px;top:697.00px;color:#4682b4">&gt;</div>
<div class="l" style="left:797.32px;top:697.00px;color:#4682b4">t</div>
<div class="l" style="left:817.80px;top:697.00px;color:#4682b4">k</div>
<div class="u" style="left:838.28px;top:697.00px;color:#4682b4">3</div>
<div class="l" style="left:879.24px;top:697.00px;color:#4682b4">p</div>
<div class="l" style="left:899.72px;top:697.00px;color:#4682b4">h</div>
<div class="u" style="left:531.08px;top:737.00px;color:#4682b4">8</div>
<div class="l" style="left:572.04px;top:737.00px;color:#ffffff">d</div>
<div class="l" style="left:592.52px;top:737.00px;color:#ffffff">c</div>
<div class="l" style="left:613.00px;top:737.00px;color:#ffffff">t</div>
<div class="l" style="left:653.96px;top:737.00px;color:#ffffff">f</div>
<div class="l" style="left:674.44px;top:737.00px;color:#ffffff">c</div>
<div class="u" style="left:694.92px;top:737.00px;color:#ffffff">4</div>
<div class="u" style="left:715.40px;top:737.00px;color:#ffffff">5</div>
<div class="l" style="left:838.28px;top:737.00px;color:#4682b4">&gt;</div>
<div class="l" style="left:858.76px;top:737.00px;color:#4682b4">l</div>
<div class="l" style="left:879.24px;top:737.00px;color:#4682b4">v</div>
<div class="l" style="left:899.72px;top:737.00px;color:#4682b4">l</div>
<div class="u" style="left:531.08px;top:777.00px;color:#4682b4">9</div>
<div class="l" style="left:572.04px;top:777.00px;color:#ffffff">t</div>
<div class="l" style="left:592.52px;top:777.00px;color:#ffffff">k</div>
<div class="u" style="left:613.00px;top:777.00px;color:#ffffff">3</div>
<div class="l" style="left:653.96px;top:777.00px;color:#ffffff">m</div>
<div class="l" style="left:674.44px;top:777.00px;color:#ffffff">i</div>
<div class="l" style="left:694.92px;top:777.00px;color:#ffffff">x</div>
<div class="u" style="left:715.40px;top:777.00px;color:#ffffff">3</div>
<div class="l" style="left:776.84px;top:777.00px;color:#4682b4">&gt;</div>
<div class="l" style="left:797.32px;top:777.00px;color:#4682b4">p</div>
<div class="l" style="left:817.80px;top:777.00px;color:#4682b4">h</div>
<div class="u" style="left:510.60px;top:817.00px;color:#4682b4">1</div>
<div class="l" style="left:572.04px;top:817.00px;color:#ffffff">f</div>
<div class="l" style="left:592.52px;top:817.00px;color:#ffffff">t</div>
<div class="l" style="left:613.00px;top:817.00px;color:#ffffff">r</div>
<div class="l" style="left:653.96px;top:817.00px;color:#ffffff">f</div>
<div class="l" style="left:674.44px;top:817.00px;color:#ffffff">c</div>
<div class="u" style="left:694.92px;top:817.00px;color:#ffffff">5</div>
<div class="u" style="left:715.40px;top:817.00px;color:#ffffff">6</div>
<div class="l" style="left:838.28px;top:817.00px;color:#4682b4">&gt;</div>
<div class="l" style="left:858.76px;top:817.00px;color:#4682b4">l</div>
<div class="l" style="left:879.24px;top:817.00px;color:#4682b4">v</div>
<div class="l" style="left:899.72px;top:817.00px;color:#4682b4">l</div>
<div class="u" style="left:510.60px;top:857.00px;color:#4682b4">1</div>
<div class="u" style="left:531.08px;top:857.00px;color:#4682b4">1</div>
<div class="l" style="left:572.04px;top:857.00px;color:#ffffff">a</div>
<div class="l" style="left:592.52px;top:857.00px;color:#ffffff">l</div>
<div class="l" style="left:613.00px;top:857.00px;color:#ffffff">t</div>
<div class="l" style="left:653.96px;top:857.00px;color:#ffffff">f</div>
<div class="l" style="left:674.44px;top:857.00px;color:#ffffff">c</div>
<div class="u" style="left:694.92px;top:857.00px;color:#ffffff">6</div>
<div class="l" style="left:838.28px;top:857.00px;color:#4682b4">&gt;</div>
<div class="l" style="left:858.76px;top:857.00px;color:#4682b4">f</div>
<div class="l" style="left:879.24px;top:857.00px;color:#4682b4">t</div>
<div class="l" style="left:899.72px;top:857.00px;color:#4682b4">r</div>
<div class="l" style="left:940.68px;top:857.00px;color:#4682b4">l</div>
<div class="l" style="left:961.16px;top:857.00px;color:#4682b4">v</div>
<div class="l" style="left:981.64px;top:857.00px;color:#4682b4">l</div>
<div class="l" style="left:1002.12px;top:857.00px;color:#ffffff">,</div>
<div class="l" style="left:1022.60px;top:857.00px;color:#ffffff">t</div>
<div class="l" style="left:1043.08px;top:857.00px;color:#ffffff">k</div>
<div class="u" style="left:1063.56px;top:857.00px;color:#ffffff">3</div>
<div class="l" style="left:1104.52px;top:857.00px;color:#ffffff">f</div>
<div class="l" style="left:1125.00px;top:857.00px;color:#ffffff">c</div>
<div class="u" style="left:1145.48px;top:857.00px;color:#ffffff">6</div>
<div class="u" style="left:1165.96px;top:857.00px;color:#ffffff">3</div>
<div class="l" style="left:1288.84px;top:857.00px;color:#4682b4">&gt;</div>
<div class="l" style="left:1309.32px;top:857.00px;color:#4682b4">l</div>
<div class="l" style="left:1329.80px;top:857.00px;color:#4682b4">v</div>
<div class="l" style="left:1350.28px;top:857.00px;color:#4682b4">l</div>
<div class="u" style="left:510.60px;top:897.00px;color:#4682b4">1</div>
<div class="u" style="left:531.08px;top:897.00px;color:#4682b4">2</div>
<div class="l" style="left:572.04px;top:897.00px;color:#ffffff">a</div>
<div class="l" style="left:592.52px;top:897.00px;color:#ffffff">l</div>
<div class="l" style="left:613.00px;top:897.00px;color:#ffffff">t</div>
<div class="l" style="left:653.96px;top:897.00px;color:#ffffff">f</div>
<div class="l" style="left:674.44px;top:897.00px;color:#ffffff">v</div>
<div class="u" style="left:694.92px;top:897.00px;color:#ffffff">6</div>
<div class="u" style="left:715.40px;top:897.00px;color:#ffffff">3</div>
<div class="l" style="left:776.84px;top:897.00px;color:#4682b4">&gt;</div>
<div class="l" style="left:797.32px;top:897.00px;color:#4682b4">s</div>
<div class="l" style="left:817.80px;top:897.00px;color:#4682b4">i</div>
<div class="l" style="left:838.28px;top:897.00px;color:#4682b4">s</div>
<div class="l" style="left:879.24px;top:897.00px;color:#4682b4">x</div>
<div class="u" style="left:899.72px;top:897.00px;color:#4682b4">6</div>
<div class="u" style="left:920.20px;top:897.00px;color:#4682b4">3</div>
<div class="u" style="left:510.60px;top:937.00px;color:#4682b4">1</div>
<div class="u" style="left:531.08px;top:937.00px;color:#4682b4">3</div>
<div class="l" style="left:572.04px;top:937.00px;color:#ffffff">a</div>
<div class="l" style="left:592.52px;top:937.00px;color:#ffffff">l</div>
<div class="l" style="left:613.00px;top:937.00px;color:#ffffff">t</div>
<div class="l" style="left:653.96px;top:937.00px;color:#ffffff">f</div>
<div class="l" style="left:674.44px;top:937.00px;color:#ffffff">v</div>
<div class="u" style="left:694.92px;top:937.00px;color:#ffffff">6</div>
<div class="l" style="left:776.84px;top:937.00px;color:#4682b4">&gt;</div>
<div class="l" style="left:797.32px;top:937.00px;color:#4682b4">t</div>
<div class="l" style="left:817.80px;top:937.00px;color:#4682b4">k</div>
<div class="l" style="left:879.24px;top:937.00px;color:#4682b4">l</div>
<div class="l" style="left:899.72px;top:937.00px;color:#4682b4">v</div>
<div class="l" style="left:920.20px;top:937.00px;color:#4682b4">l</div>
<div class="u" style="left:510.60px;top:977.00px;color:#4682b4">1</div>
<div class="u" style="left:531.08px;top:977.00px;color:#4682b4">4</div>
<div class="l" style="left:572.04px;top:977.00px;color:#ffffff">f</div>
<div class="l" style="left:592.52px;top:977.00px;color:#ffffff">l</div>
<div class="l" style="left:613.00px;top:977.00px;color:#ffffff">c</div>
<div class="l" style="left:653.96px;top:977.00px;color:#ffffff">f</div>
<div class="l" style="left:674.44px;top:977.00px;color:#ffffff">c</div>
<div class="u" style="left:694.92px;top:977.00px;color:#ffffff">4</div>
<div class="l" style="left:715.40px;top:977.00px;color:#ffffff">_</div>
<div class="u" style="left:735.88px;top:977.00px;color:#ffffff">2</div>
<div class="l" style="left:858.76px;top:977.00px;color:#4682b4">&gt;</div>
<div class="l" style="left:879.24px;top:977.00px;color:#4682b4">l</div>
<div class="l" style="left:899.72px;top:977.00px;color:#4682b4">v</div>
<div class="l" style="left:920.20px;top:977.00px;color:#4682b4">l</div>
<div class="u" style="left:510.60px;top:1017.00px;color:#4682b4">1</div>
<div class="u" style="left:531.08px;top:1017.00px;color:#4682b4">5</div>
<div class="l" style="left:572.04px;top:1017.00px;color:#ffffff">f</div>
<div class="l" style="left:592.52px;top:1017.00px;color:#ffffff">i</div>
<div class="l" style="left:613.00px;top:1017.00px;color:#ffffff">l</div>
<div class="l" style="left:633.48px;top:1017.00px;color:#ffffff">l</div>
<div class="l" style="left:653.96px;top:1017.00px;color:#ffffff">e</div>
<div class="l" style="left:674.44px;top:1017.00px;color:#ffffff">r</div>
<div class="l" style="left:715.40px;top:1017.00px;color:#ffffff">f</div>
<div class="l" style="left:735.88px;top:1017.00px;color:#ffffff">v</div>
<div class="u" style="left:756.36px;top:1017.00px;color:#ffffff">7</div>
<div class="l" style="left:817.80px;top:1017.00px;color:#4682b4">&gt;</div>
<div class="l" style="left:838.28px;top:1017.00px;color:#4682b4">q</div>
<div class="l" style="left:858.76px;top:1017.00px;color:#4682b4">l</div>
<div class="l" style="left:879.24px;top:1017.00px;color:#4682b4">t</div>
<div class="l" style="left:920.20px;top:1017.00px;color:#4682b4">l</div>
<div class="l" style="left:940.68px;top:1017.00px;color:#4682b4">v</div>
<div class="l" style="left:961.16px;top:1017.00px;color:#4682b4">l</div>
<div class="l" style="left:572.04px;top:1057.00px;color:#ffffff">s</div>
<div class="l" style="left:592.52px;top:1057.00px;color:#ffffff">i</div>
<div class="l" style="left:613.00px;top:1057.00px;color:#ffffff">s</div>
<div class="l" style="left:653.96px;top:1057.00px;color:#ffffff">f</div>
<div class="l" style="left:674.44px;top:1057.00px;color:#ffffff">v</div>
<div class="u" style="left:715.40px;top:1057.00px;color:#ffffff">2</div>
<div class="l" style="left:776.84px;top:1057.00px;color:#4682b4">&gt;</div>
<div class="l" style="left:797.32px;top:1057.00px;color:#4682b4">t</div>
<div class="l" style="left:817.80px;top:1057.00px;color:#4682b4">k</div>
<div class="u" style="left:838.28px;top:1057.00px;color:#4682b4">2</div>
<div class="l" style="left:879.24px;top:1057.00px;color:#4682b4">l</div>
<div class="l" style="left:899.72px;top:1057.00px;color:#4682b4">v</div>
<div class="l" style="left:920.20px;top:1057.00px;color:#4682b4">l</div>
<div class="u" style="left:531.08px;top:1097.00px;color:#4682b4">1</div>
<div class="u" style="left:531.08px;top:1137.00px;color:#4682b4">2</div>
<div class="l" style="left:572.04px;top:1137.00px;color:#ffffff">s</div>
<div class="l" style="left:592.52px;top:1137.00px;color:#ffffff">i</div>
<div class="l" style="left:613.00px;top:1137.00px;color:#ffffff">s</div>
<div class="l" style="left:653.96px;top:1137.00px;color:#ffffff">f</div>
<div class="l" style="left:674.44px;top:1137.00px;color:#ffffff">v</div>
<div class="u" style="left:694.92px;top:1137.00px;color:#ffffff">2</div>
<div class="u" style="left:715.40px;top:1137.00px;color:#ffffff">3</div>
<div class="l" style="left:776.84px;top:1137.00px;color:#4682b4">&gt;</div>
<div class="l" style="left:797.32px;top:1137.00px;color:#4682b4">t</div>
<div class="l" style="left:817.80px;top:1137.00px;color:#4682b4">k</div>
<div class="u" style="left:838.28px;top:1137.00px;color:#4682b4">3</div>
<div class="l" style="left:879.24px;top:1137.00px;color:#4682b4">l</div>
<div class="l" style="left:899.72px;top:1137.00px;color:#4682b4">v</div>
<div class="l" style="left:920.20px;top:1137.00px;color:#4682b4">l</div>
<div class="u" style="left:531.08px;top:1177.00px;color:#4682b4">3</div>
<div class="l" style="left:572.04px;top:1177.00px;color:#ffffff">s</div>
<div class="l" style="left:592.52px;top:1177.00px;color:#ffffff">i</div>
<div class="l" style="left:613.00px;top:1177.00px;color:#ffffff">s</div>
<div class="l" style="left:653.96px;top:1177.00px;color:#ffffff">f</div>
<div class="l" style="left:674.44px;top:1177.00px;color:#ffffff">v</div>
<div class="u" style="left:694.92px;top:1177.00px;color:#ffffff">6</div>
<div class="u" style="left:715.40px;top:1177.00px;color:#ffffff">3</div>
<div class="l" style="left:776.84px;top:1177.00px;color:#4682b4">&gt;</div>
<div class="l" style="left:797.32px;top:1177.00px;color:#4682b4">t</div>
<div class="l" style="left:817.80px;top:1177.00px;color:#4682b4">k</div>
<div class="u" style="left:838.28px;top:1177.00px;color:#4682b4">3</div>
<div class="l" style="left:879.24px;top:1177.00px;color:#4682b4">l</div>
<div class="l" style="left:899.72px;top:1177.00px;color:#4682b4">v</div>
<div class="l" style="left:920.20px;top:1177.00px;color:#4682b4">l</div>
<div class="u" style="left:531.08px;top:1217.00px;color:#4682b4">4</div>
<div class="u" style="left:531.08px;top:1257.00px;color:#4682b4">5</div>
<div class="u" style="left:531.08px;top:1297.00px;color:#4682b4">6</div>
<div class="u" style="left:531.08px;top:1337.00px;color:#4682b4">7</div>
<div class="u" style="left:531.08px;top:1377.00px;color:#4682b4">8</div>
<div class="l" style="left:572.04px;top:1377.00px;color:#ffffff">p</div>
<div class="l" style="left:592.52px;top:1377.00px;color:#ffffff">h</div>
<div class="l" style="left:613.00px;top:1377.00px;color:#ffffff">c</div>
<div class="l" style="left:653.96px;top:1377.00px;color:#ffffff">f</div>
<div class="l" style="left:674.44px;top:1377.00px;color:#ffffff">c</div>
<div class="u" style="left:694.92px;top:1377.00px;color:#ffffff">3</div>
<div class="l" style="left:715.40px;top:1377.00px;color:#ffffff">_</div>
<div class="u" style="left:735.88px;top:1377.00px;color:#ffffff">1</div>
<div class="l" style="left:858.76px;top:1377.00px;color:#4682b4">&gt;</div>
<div class="l" style="left:879.24px;top:1377.00px;color:#4682b4">t</div>
<div class="l" style="left:899.72px;top:1377.00px;color:#4682b4">k</div>
<div class="u" style="left:920.20px;top:1377.00px;color:#4682b4">3</div>
<div class="l" style="left:961.16px;top:1377.00px;color:#4682b4">p</div>
<div class="l" style="left:981.64px;top:1377.00px;color:#4682b4">h</div>
<div class="u" style="left:531.08px;top:1417.00px;color:#4682b4">9</div>
<div class="l" style="left:572.04px;top:1417.00px;color:#ffffff">p</div>
<div class="l" style="left:592.52px;top:1417.00px;color:#ffffff">h</div>
<div class="l" style="left:613.00px;top:1417.00px;color:#ffffff">c</div>
<div class="l" style="left:653.96px;top:1417.00px;color:#ffffff">f</div>
<div class="l" style="left:674.44px;top:1417.00px;color:#ffffff">c</div>
<div class="u" style="left:694.92px;top:1417.00px;color:#ffffff">3</div>
<div class="l" style="left:715.40px;top:1417.00px;color:#ffffff">_</div>
<div class="u" style="left:735.88px;top:1417.00px;color:#ffffff">2</div>
<div class="l" style="left:858.76px;top:1417.00px;color:#4682b4">&gt;</div>
<div class="l" style="left:879.24px;top:1417.00px;color:#4682b4">t</div>
<div class="l" style="left:899.72px;top:1417.00px;color:#4682b4">k</div>
<div class="u" style="left:920.20px;top:1417.00px;color:#4682b4">3</div>
<div class="l" style="left:961.16px;top:1417.00px;color:#4682b4">p</div>
<div class="l" style="left:981.64px;top:1417.00px;color:#4682b4">h</div>
<div class="u" style="left:510.60px;top:1457.00px;color:#4682b4">1</div>
<div class="u" style="left:510.60px;top:1497.00px;color:#4682b4">1</div>
<div class="u" style="left:531.08px;top:1497.00px;color:#4682b4">1</div>
<div class="u" style="left:510.60px;top:1537.00px;color:#4682b4">1</div>
<div class="u" style="left:531.08px;top:1537.00px;color:#4682b4">2</div>
<div class="u" style="left:510.60px;top:1577.00px;color:#4682b4">1</div>
<div class="u" style="left:531.08px;top:1577.00px;color:#4682b4">3</div>
<div class="u" style="left:510.60px;top:1617.00px;color:#4682b4">1</div>
<div class="u" style="left:531.08px;top:1617.00px;color:#4682b4">4</div>
<div class="l" style="left:613.00px;top:1617.00px;color:#ffffff">r</div>
<div class="l" style="left:633.48px;top:1617.00px;color:#ffffff">e</div>
<div class="l" style="left:653.96px;top:1617.00px;color:#ffffff">s</div>
<div class="l" style="left:674.44px;top:1617.00px;color:#ffffff">e</div>
<div class="l" style="left:694.92px;top:1617.00px;color:#ffffff">t</div>
<div class="u" style="left:510.60px;top:1657.00px;color:#4682b4">1</div>
<div class="u" style="left:531.08px;top:1657.00px;color:#4682b4">5</div>
<div class="l" style="left:613.00px;top:1657.00px;color:#ffffff">s</div>
<div class="l" style="left:633.48px;top:1657.00px;color:#ffffff">h</div>
<div class="l" style="left:653.96px;top:1657.00px;color:#ffffff">u</div>
<div class="l" style="left:674.44px;top:1657.00px;color:#ffffff">t</div>
<div class="l" style="left:694.92px;top:1657.00px;color:#ffffff">d</div>
<div class="l" style="left:715.40px;top:1657.00px;color:#ffffff">o</div>
<div class="l" style="left:735.88px;top:1657.00px;color:#ffffff">w</div>
<div class="l" style="left:756.36px;top:1657.00px;color:#ffffff">n</div>
<div class="u" style="left:1739.40px;top:417.00px;color:#4682b4">1</div>
<div class="l" style="left:1821.32px;top:417.00px;color:#ffffff">t</div>
<div class="l" style="left:1841.80px;top:417.00px;color:#ffffff">k</div>
<div class="l" style="left:1903.24px;top:417.00px;color:#ffffff">l</div>
<div class="l" style="left:1923.72px;top:417.00px;color:#ffffff">v</div>
<div class="l" style="left:1944.20px;top:417.00px;color:#ffffff">l</div>
<div class="l" style="left:1985.16px;top:417.00px;color:#ffffff">p</div>
<div class="l" style="left:2005.64px;top:417.00px;color:#ffffff">v</div>
<div class="u" style="left:1411.72px;top:457.00px;color:#808080">1</div>
<div class="u" style="left:1739.40px;top:457.00px;color:#4682b4">1</div>
<div class="l" style="left:1821.32px;top:457.00px;color:#ffffff">t</div>
<div class="l" style="left:1841.80px;top:457.00px;color:#ffffff">k</div>
<div class="l" style="left:1903.24px;top:457.00px;color:#ffffff">t</div>
<div class="l" style="left:1923.72px;top:457.00px;color:#ffffff">m</div>
<div class="l" style="left:1944.20px;top:457.00px;color:#ffffff">p</div>
<div class="l" style="left:1985.16px;top:457.00px;color:#ffffff">p</div>
<div class="l" style="left:2005.64px;top:457.00px;color:#ffffff">v</div>
<div class="u" style="left:1411.72px;top:497.00px;color:#808080">2</div>
<div class="u" style="left:1739.40px;top:497.00px;color:#4682b4">1</div>
<div class="l" style="left:1821.32px;top:497.00px;color:#ffffff">t</div>
<div class="l" style="left:1841.80px;top:497.00px;color:#ffffff">k</div>
<div class="u" style="left:1862.28px;top:497.00px;color:#ffffff">2</div>
<div class="l" style="left:1903.24px;top:497.00px;color:#ffffff">l</div>
<div class="l" style="left:1923.72px;top:497.00px;color:#ffffff">v</div>
<div class="l" style="left:1944.20px;top:497.00px;color:#ffffff">l</div>
<div class="l" style="left:1985.16px;top:497.00px;color:#ffffff">p</div>
<div class="l" style="left:2005.64px;top:497.00px;color:#ffffff">v</div>
<div class="u" style="left:1411.72px;top:537.00px;color:#808080">3</div>
<div class="u" style="left:1739.40px;top:537.00px;color:#4682b4">1</div>
<div class="l" style="left:1821.32px;top:537.00px;color:#ffffff">t</div>
<div class="l" style="left:1841.80px;top:537.00px;color:#ffffff">k</div>
<div class="u" style="left:1862.28px;top:537.00px;color:#ffffff">2</div>
<div class="l" style="left:1903.24px;top:537.00px;color:#ffffff">t</div>
<div class="l" style="left:1923.72px;top:537.00px;color:#ffffff">m</div>
<div class="l" style="left:1944.20px;top:537.00px;color:#ffffff">p</div>
<div class="l" style="left:1985.16px;top:537.00px;color:#ffffff">p</div>
<div class="l" style="left:2005.64px;top:537.00px;color:#ffffff">v</div>
<div class="u" style="left:1411.72px;top:577.00px;color:#808080">4</div>
<div class="u" style="left:1759.88px;top:577.00px;color:#4682b4">1</div>
<div class="u" style="left:1780.36px;top:577.00px;color:#4682b4">5</div>
<div class="l" style="left:1821.32px;top:577.00px;color:#ffffff">t</div>
<div class="l" style="left:1841.80px;top:577.00px;color:#ffffff">k</div>
<div class="u" style="left:1862.28px;top:577.00px;color:#ffffff">2</div>
<div class="l" style="left:1903.24px;top:577.00px;color:#ffffff">f</div>
<div class="l" style="left:1923.72px;top:577.00px;color:#ffffff">l</div>
<div class="l" style="left:1944.20px;top:577.00px;color:#ffffff">w</div>
<div class="l" style="left:1964.68px;top:577.00px;color:#ffffff">o</div>
<div class="l" style="left:1985.16px;top:577.00px;color:#ffffff">u</div>
<div class="l" style="left:2005.64px;top:577.00px;color:#ffffff">t</div>
<div class="u" style="left:2026.12px;top:577.00px;color:#ffffff">2</div>
<div class="l" style="left:2067.08px;top:577.00px;color:#ffffff">p</div>
<div class="l" style="left:2087.56px;top:577.00px;color:#ffffff">v</div>
<div class="l" style="left:2128.52px;top:577.00px;color:#4682b4">?</div>
<div class="l" style="left:2149.00px;top:577.00px;color:#4682b4">p</div>
<div class="l" style="left:2169.48px;top:577.00px;color:#4682b4">i</div>
<div class="l" style="left:2189.96px;top:577.00px;color:#4682b4">p</div>
<div class="u" style="left:2210.44px;top:577.00px;color:#4682b4">2</div>
<div class="u" style="left:2230.92px;top:577.00px;color:#4682b4">3</div>
<div class="l" style="left:2271.88px;top:577.00px;color:#4682b4">f</div>
<div class="l" style="left:2292.36px;top:577.00px;color:#4682b4">v</div>
<div class="u" style="left:2312.84px;top:577.00px;color:#4682b4">2</div>
<div class="u" style="left:2333.32px;top:577.00px;color:#4682b4">3</div>
<div class="u" style="left:1411.72px;top:617.00px;color:#808080">5</div>
<div class="u" style="left:1739.40px;top:617.00px;color:#4682b4">1</div>
<div class="l" style="left:1821.32px;top:617.00px;color:#ffffff">t</div>
<div class="l" style="left:1841.80px;top:617.00px;color:#ffffff">k</div>
<div class="u" style="left:1862.28px;top:617.00px;color:#ffffff">3</div>
<div class="l" style="left:1903.24px;top:617.00px;color:#ffffff">l</div>
<div class="l" style="left:1923.72px;top:617.00px;color:#ffffff">v</div>
<div class="l" style="left:1944.20px;top:617.00px;color:#ffffff">l</div>
<div class="l" style="left:1985.16px;top:617.00px;color:#ffffff">p</div>
<div class="l" style="left:2005.64px;top:617.00px;color:#ffffff">v</div>
<div class="u" style="left:1411.72px;top:657.00px;color:#808080">6</div>
<div class="u" style="left:1739.40px;top:657.00px;color:#4682b4">1</div>
<div class="l" style="left:1821.32px;top:657.00px;color:#ffffff">t</div>
<div class="l" style="left:1841.80px;top:657.00px;color:#ffffff">k</div>
<div class="u" style="left:1862.28px;top:657.00px;color:#ffffff">3</div>
<div class="l" style="left:1903.24px;top:657.00px;color:#ffffff">t</div>
<div class="l" style="left:1923.72px;top:657.00px;color:#ffffff">m</div>
<div class="l" style="left:1944.20px;top:657.00px;color:#ffffff">p</div>
<div class="l" style="left:1985.16px;top:657.00px;color:#ffffff">p</div>
<div class="l" style="left:2005.64px;top:657.00px;color:#ffffff">v</div>
<div class="u" style="left:1411.72px;top:697.00px;color:#808080">7</div>
<div class="u" style="left:1739.40px;top:697.00px;color:#4682b4">1</div>
<div class="l" style="left:1821.32px;top:697.00px;color:#ffffff">t</div>
<div class="l" style="left:1841.80px;top:697.00px;color:#ffffff">k</div>
<div class="u" style="left:1862.28px;top:697.00px;color:#ffffff">4</div>
<div class="l" style="left:1903.24px;top:697.00px;color:#ffffff">l</div>
<div class="l" style="left:1923.72px;top:697.00px;color:#ffffff">v</div>
<div class="l" style="left:1944.20px;top:697.00px;color:#ffffff">l</div>
<div class="l" style="left:1985.16px;top:697.00px;color:#ffffff">p</div>
<div class="l" style="left:2005.64px;top:697.00px;color:#ffffff">v</div>
<div class="u" style="left:1411.72px;top:737.00px;color:#808080">8</div>
<div class="u" style="left:1739.40px;top:737.00px;color:#4682b4">1</div>
<div class="l" style="left:1821.32px;top:737.00px;color:#ffffff">t</div>
<div class="l" style="left:1841.80px;top:737.00px;color:#ffffff">k</div>
<div class="u" style="left:1862.28px;top:737.00px;color:#ffffff">4</div>
<div class="l" style="left:1903.24px;top:737.00px;color:#ffffff">t</div>
<div class="l" style="left:1923.72px;top:737.00px;color:#ffffff">m</div>
<div class="l" style="left:1944.20px;top:737.00px;color:#ffffff">p</div>
<div class="l" style="left:1985.16px;top:737.00px;color:#ffffff">p</div>
<div class="l" style="left:2005.64px;top:737.00px;color:#ffffff">v</div>
<div class="u" style="left:1411.72px;top:777.00px;color:#808080">9</div>
<div class="u" style="left:1759.88px;top:777.00px;color:#4682b4">1</div>
<div class="l" style="left:1821.32px;top:777.00px;color:#ffffff">d</div>
<div class="l" style="left:1841.80px;top:777.00px;color:#ffffff">c</div>
<div class="l" style="left:1862.28px;top:777.00px;color:#ffffff">t</div>
<div class="l" style="left:1903.24px;top:777.00px;color:#ffffff">l</div>
<div class="l" style="left:1923.72px;top:777.00px;color:#ffffff">v</div>
<div class="l" style="left:1944.20px;top:777.00px;color:#ffffff">l</div>
<div class="l" style="left:1985.16px;top:777.00px;color:#ffffff">p</div>
<div class="l" style="left:2005.64px;top:777.00px;color:#ffffff">v</div>
<div class="u" style="left:1391.24px;top:817.00px;color:#808080">1</div>
<div class="u" style="left:1391.24px;top:857.00px;color:#808080">1</div>
<div class="u" style="left:1411.72px;top:857.00px;color:#808080">1</div>
<div class="u" style="left:1739.40px;top:857.00px;color:#4682b4">1</div>
<div class="l" style="left:1821.32px;top:857.00px;color:#ffffff">f</div>
<div class="l" style="left:1841.80px;top:857.00px;color:#ffffff">t</div>
<div class="l" style="left:1862.28px;top:857.00px;color:#ffffff">r</div>
<div class="l" style="left:1903.24px;top:857.00px;color:#ffffff">l</div>
<div class="l" style="left:1923.72px;top:857.00px;color:#ffffff">v</div>
<div class="l" style="left:1944.20px;top:857.00px;color:#ffffff">l</div>
<div class="l" style="left:1985.16px;top:857.00px;color:#ffffff">p</div>
<div class="l" style="left:2005.64px;top:857.00px;color:#ffffff">v</div>
<div class="u" style="left:1391.24px;top:897.00px;color:#808080">1</div>
<div class="u" style="left:1411.72px;top:897.00px;color:#808080">2</div>
<div class="u" style="left:1739.40px;top:897.00px;color:#4682b4">1</div>
<div class="l" style="left:1821.32px;top:897.00px;color:#ffffff">q</div>
<div class="l" style="left:1841.80px;top:897.00px;color:#ffffff">l</div>
<div class="l" style="left:1862.28px;top:897.00px;color:#ffffff">t</div>
<div class="l" style="left:1903.24px;top:897.00px;color:#ffffff">t</div>
<div class="l" style="left:1923.72px;top:897.00px;color:#ffffff">r</div>
<div class="l" style="left:1944.20px;top:897.00px;color:#ffffff">b</div>
<div class="l" style="left:1985.16px;top:897.00px;color:#ffffff">p</div>
<div class="l" style="left:2005.64px;top:897.00px;color:#ffffff">v</div>
<div class="u" style="left:1391.24px;top:937.00px;color:#808080">1</div>
<div class="u" style="left:1411.72px;top:937.00px;color:#808080">3</div>
<div class="u" style="left:1759.88px;top:937.00px;color:#4682b4">1</div>
<div class="u" style="left:1780.36px;top:937.00px;color:#4682b4">4</div>
<div class="l" style="left:1821.32px;top:937.00px;color:#ffffff">q</div>
<div class="l" style="left:1841.80px;top:937.00px;color:#ffffff">l</div>
<div class="l" style="left:1862.28px;top:937.00px;color:#ffffff">t</div>
<div class="l" style="left:1903.24px;top:937.00px;color:#ffffff">p</div>
<div class="l" style="left:1923.72px;top:937.00px;color:#ffffff">h</div>
<div class="l" style="left:1964.68px;top:937.00px;color:#ffffff">p</div>
<div class="l" style="left:1985.16px;top:937.00px;color:#ffffff">v</div>
<div class="u" style="left:1391.24px;top:977.00px;color:#808080">1</div>
<div class="u" style="left:1411.72px;top:977.00px;color:#808080">4</div>
<div class="u" style="left:1739.40px;top:977.00px;color:#4682b4">1</div>
<div class="l" style="left:1821.32px;top:977.00px;color:#ffffff">q</div>
<div class="l" style="left:1841.80px;top:977.00px;color:#ffffff">l</div>
<div class="l" style="left:1862.28px;top:977.00px;color:#ffffff">t</div>
<div class="l" style="left:1903.24px;top:977.00px;color:#ffffff">o</div>
<div class="u" style="left:1923.72px;top:977.00px;color:#ffffff">2</div>
<div class="l" style="left:1964.68px;top:977.00px;color:#ffffff">p</div>
<div class="l" style="left:1985.16px;top:977.00px;color:#ffffff">v</div>
<div class="u" style="left:1391.24px;top:1017.00px;color:#808080">1</div>
<div class="u" style="left:1411.72px;top:1017.00px;color:#808080">5</div>
<div class="u" style="left:1452.68px;top:1017.00px;color:#4682b4">9</div>
<div class="u" style="left:1473.16px;top:1017.00px;color:#4682b4">9</div>
<div class="u" style="left:1493.64px;top:1017.00px;color:#4682b4">9</div>
<div class="u" style="left:1739.40px;top:1017.00px;color:#4682b4">9</div>
<div class="u" style="left:1759.88px;top:1017.00px;color:#4682b4">9</div>
<div class="u" style="left:1780.36px;top:1017.00px;color:#4682b4">9</div>
<div class="l" style="left:1821.32px;top:1017.00px;color:#ffffff">s</div>
<div class="l" style="left:1841.80px;top:1017.00px;color:#ffffff">r</div>
<div class="l" style="left:1862.28px;top:1017.00px;color:#ffffff">c</div>
<div class="l" style="left:1903.24px;top:1017.00px;color:#ffffff">l</div>
<div class="l" style="left:1923.72px;top:1017.00px;color:#ffffff">v</div>
<div class="l" style="left:1944.20px;top:1017.00px;color:#ffffff">l</div>
<div class="l" style="left:1985.16px;top:1017.00px;color:#ffffff">p</div>
<div class="l" style="left:2005.64px;top:1017.00px;color:#ffffff">v</div>
<div class="u" style="left:1739.40px;top:1057.00px;color:#4682b4">1</div>
<div class="l" style="left:1821.32px;top:1057.00px;color:#ffffff">d</div>
<div class="l" style="left:1841.80px;top:1057.00px;color:#ffffff">c</div>
<div class="l" style="left:1862.28px;top:1057.00px;color:#ffffff">t</div>
<div class="l" style="left:1903.24px;top:1057.00px;color:#ffffff">f</div>
<div class="l" style="left:1923.72px;top:1057.00px;color:#ffffff">c</div>
<div class="u" style="left:1944.20px;top:1057.00px;color:#ffffff">4</div>
<div class="u" style="left:1964.68px;top:1057.00px;color:#ffffff">5</div>
<div class="l" style="left:2005.64px;top:1057.00px;color:#ffffff">m</div>
<div class="l" style="left:2026.12px;top:1057.00px;color:#ffffff">v</div>
<div class="u" style="left:1411.72px;top:1097.00px;color:#4682b4">1</div>
<div class="u" style="left:1739.40px;top:1097.00px;color:#4682b4">1</div>
<div class="l" style="left:1821.32px;top:1097.00px;color:#ffffff">t</div>
<div class="l" style="left:1841.80px;top:1097.00px;color:#ffffff">k</div>
<div class="u" style="left:1862.28px;top:1097.00px;color:#ffffff">2</div>
<div class="l" style="left:1903.24px;top:1097.00px;color:#ffffff">f</div>
<div class="l" style="left:1923.72px;top:1097.00px;color:#ffffff">c</div>
<div class="u" style="left:1964.68px;top:1097.00px;color:#ffffff">2</div>
<div class="l" style="left:2005.64px;top:1097.00px;color:#ffffff">m</div>
<div class="l" style="left:2026.12px;top:1097.00px;color:#ffffff">v</div>
<div class="u" style="left:1411.72px;top:1137.00px;color:#4682b4">2</div>
<div class="u" style="left:1739.40px;top:1137.00px;color:#4682b4">1</div>
<div class="l" style="left:1821.32px;top:1137.00px;color:#ffffff">f</div>
<div class="l" style="left:1841.80px;top:1137.00px;color:#ffffff">t</div>
<div class="l" style="left:1862.28px;top:1137.00px;color:#ffffff">r</div>
<div class="l" style="left:1903.24px;top:1137.00px;color:#ffffff">f</div>
<div class="l" style="left:1923.72px;top:1137.00px;color:#ffffff">c</div>
<div class="u" style="left:1944.20px;top:1137.00px;color:#ffffff">5</div>
<div class="u" style="left:1964.68px;top:1137.00px;color:#ffffff">6</div>
<div class="l" style="left:2005.64px;top:1137.00px;color:#ffffff">m</div>
<div class="l" style="left:2026.12px;top:1137.00px;color:#ffffff">v</div>
<div class="u" style="left:1411.72px;top:1177.00px;color:#4682b4">3</div>
<div class="u" style="left:1739.40px;top:1177.00px;color:#4682b4">1</div>
<div class="l" style="left:1821.32px;top:1177.00px;color:#ffffff">a</div>
<div class="l" style="left:1841.80px;top:1177.00px;color:#ffffff">l</div>
<div class="l" style="left:1862.28px;top:1177.00px;color:#ffffff">t</div>
<div class="l" style="left:1903.24px;top:1177.00px;color:#ffffff">f</div>
<div class="l" style="left:1923.72px;top:1177.00px;color:#ffffff">c</div>
<div class="u" style="left:1944.20px;top:1177.00px;color:#ffffff">6</div>
<div class="l" style="left:2005.64px;top:1177.00px;color:#ffffff">m</div>
<div class="l" style="left:2026.12px;top:1177.00px;color:#ffffff">v</div>
<div class="u" style="left:1411.72px;top:1217.00px;color:#4682b4">4</div>
<div class="u" style="left:1739.40px;top:1217.00px;color:#4682b4">1</div>
<div class="l" style="left:1821.32px;top:1217.00px;color:#ffffff">p</div>
<div class="l" style="left:1841.80px;top:1217.00px;color:#ffffff">h</div>
<div class="l" style="left:1862.28px;top:1217.00px;color:#ffffff">c</div>
<div class="l" style="left:1903.24px;top:1217.00px;color:#ffffff">f</div>
<div class="l" style="left:1923.72px;top:1217.00px;color:#ffffff">c</div>
<div class="u" style="left:1944.20px;top:1217.00px;color:#ffffff">3</div>
<div class="l" style="left:1964.68px;top:1217.00px;color:#ffffff">_</div>
<div class="u" style="left:1985.16px;top:1217.00px;color:#ffffff">1</div>
<div class="l" style="left:2026.12px;top:1217.00px;color:#ffffff">m</div>
<div class="l" style="left:2046.60px;top:1217.00px;color:#ffffff">v</div>
<div class="u" style="left:1411.72px;top:1257.00px;color:#4682b4">5</div>
<div class="u" style="left:1739.40px;top:1257.00px;color:#4682b4">1</div>
<div class="l" style="left:1821.32px;top:1257.00px;color:#ffffff">p</div>
<div class="l" style="left:1841.80px;top:1257.00px;color:#ffffff">h</div>
<div class="l" style="left:1862.28px;top:1257.00px;color:#ffffff">c</div>
<div class="l" style="left:1903.24px;top:1257.00px;color:#ffffff">f</div>
<div class="l" style="left:1923.72px;top:1257.00px;color:#ffffff">c</div>
<div class="u" style="left:1944.20px;top:1257.00px;color:#ffffff">3</div>
<div class="l" style="left:1964.68px;top:1257.00px;color:#ffffff">_</div>
<div class="u" style="left:1985.16px;top:1257.00px;color:#ffffff">2</div>
<div class="l" style="left:2026.12px;top:1257.00px;color:#ffffff">m</div>
<div class="l" style="left:2046.60px;top:1257.00px;color:#ffffff">v</div>
<div class="u" style="left:1411.72px;top:1297.00px;color:#4682b4">6</div>
<div class="u" style="left:1739.40px;top:1297.00px;color:#4682b4">1</div>
<div class="l" style="left:1821.32px;top:1297.00px;color:#ffffff">f</div>
<div class="l" style="left:1841.80px;top:1297.00px;color:#ffffff">l</div>
<div class="l" style="left:1862.28px;top:1297.00px;color:#ffffff">c</div>
<div class="l" style="left:1903.24px;top:1297.00px;color:#ffffff">f</div>
<div class="l" style="left:1923.72px;top:1297.00px;color:#ffffff">c</div>
<div class="u" style="left:1944.20px;top:1297.00px;color:#ffffff">4</div>
<div class="l" style="left:1964.68px;top:1297.00px;color:#ffffff">_</div>
<div class="u" style="left:1985.16px;top:1297.00px;color:#ffffff">2</div>
<div class="l" style="left:2026.12px;top:1297.00px;color:#ffffff">m</div>
<div class="l" style="left:2046.60px;top:1297.00px;color:#ffffff">v</div>
<div class="u" style="left:1411.72px;top:1337.00px;color:#4682b4">7</div>
<div class="u" style="left:1411.72px;top:1377.00px;color:#4682b4">8</div>
<div class="u" style="left:1411.72px;top:1417.00px;color:#4682b4">9</div>
<div class="u" style="left:1391.24px;top:1457.00px;color:#4682b4">1</div>
<div class="u" style="left:1739.40px;top:1457.00px;color:#4682b4">1</div>
<div class="l" style="left:1821.32px;top:1457.00px;color:#ffffff">t</div>
<div class="l" style="left:1841.80px;top:1457.00px;color:#ffffff">k</div>
<div class="u" style="left:1862.28px;top:1457.00px;color:#ffffff">2</div>
<div class="l" style="left:1903.24px;top:1457.00px;color:#ffffff">l</div>
<div class="l" style="left:1923.72px;top:1457.00px;color:#ffffff">v</div>
<div class="l" style="left:1944.20px;top:1457.00px;color:#ffffff">l</div>
<div class="l" style="left:1985.16px;top:1457.00px;color:#ffffff">s</div>
<div class="l" style="left:2005.64px;top:1457.00px;color:#ffffff">p</div>
<div class="u" style="left:1391.24px;top:1497.00px;color:#4682b4">1</div>
<div class="u" style="left:1411.72px;top:1497.00px;color:#4682b4">1</div>
<div class="u" style="left:1391.24px;top:1537.00px;color:#4682b4">1</div>
<div class="u" style="left:1411.72px;top:1537.00px;color:#4682b4">2</div>
<div class="u" style="left:1391.24px;top:1577.00px;color:#4682b4">1</div>
<div class="u" style="left:1411.72px;top:1577.00px;color:#4682b4">3</div>
<div class="u" style="left:1391.24px;top:1617.00px;color:#4682b4">1</div>
<div class="u" style="left:1411.72px;top:1617.00px;color:#4682b4">4</div>
<div class="u" style="left:1391.24px;top:1657.00px;color:#4682b4">1</div>
<div class="u" style="left:1411.72px;top:1657.00px;color:#4682b4">5</div>
</div>
<svg width="2372" height="1740" viewBox="0 0 2372 1740">
<rect x="430.58" y="33.40" width="17.2" height="3.6" fill="#000000"/>
<path d="M542.38 21.85C546.54 21.85 548.98 26.14 548.98 33.45C548.98 40.76 546.54 45.05 542.38 45.05C538.22 45.05 535.78 40.76 535.78 33.45C535.78 26.14 538.22 21.85 542.38 21.85Z" fill="none" stroke="#000000" stroke-width="3.70"/>
<path d="M536.68 41.00L547.68 25.30" stroke="#000000" stroke-width="3.8"/>
<rect x="573.94" y="33.40" width="17.2" height="3.6" fill="#000000"/>
<rect x="717.30" y="33.40" width="17.2" height="3.6" fill="#000000"/>
<rect x="860.66" y="33.40" width="17.2" height="3.6" fill="#000000"/>
<rect x="1004.02" y="33.40" width="17.2" height="3.6" fill="#000000"/>
<rect x="1147.38" y="33.40" width="17.2" height="3.6" fill="#000000"/>
<rect x="1290.74" y="33.40" width="17.2" height="3.6" fill="#000000"/>
<rect x="1434.10" y="33.40" width="17.2" height="3.6" fill="#000000"/>
<path d="M314.00 67.40h5.5v5.6h-5.5zM314.00 80.20h5.5v5.6h-5.5z" fill="#808080"/>
<path d="M314.00 107.40h5.5v5.6h-5.5zM314.00 120.20h5.5v5.6h-5.5z" fill="#808080"/>
<path d="M314.00 147.40h5.5v5.6h-5.5zM314.00 160.20h5.5v5.6h-5.5z" fill="#808080"/>
<path d="M314.00 187.40h5.5v5.6h-5.5zM314.00 200.20h5.5v5.6h-5.5z" fill="#808080"/>
<path d="M314.00 227.40h5.5v5.6h-5.5zM314.00 240.20h5.5v5.6h-5.5z" fill="#808080"/>
<path d="M314.00 267.40h5.5v5.6h-5.5zM314.00 280.20h5.5v5.6h-5.5z" fill="#808080"/>
<path d="M542.38 61.85C546.54 61.85 548.98 66.14 548.98 73.45C548.98 80.76 546.54 85.05 542.38 85.05C538.22 85.05 535.78 80.76 535.78 73.45C535.78 66.14 538.22 61.85 542.38 61.85Z" fill="none" stroke="#ffffff" stroke-width="3.70"/>
<path d="M536.68 81.00L547.68 65.30" stroke="#ffffff" stroke-width="3.8"/>
<path d="M685.74 61.85C689.90 61.85 692.34 66.14 692.34 73.45C692.34 80.76 689.90 85.05 685.74 85.05C681.58 85.05 679.14 80.76 679.14 73.45C679.14 66.14 681.58 61.85 685.74 61.85Z" fill="none" stroke="#ffffff" stroke-width="3.70"/>
<path d="M680.04 81.00L691.04 65.30" stroke="#ffffff" stroke-width="3.8"/>
<path d="M829.10 61.85C833.26 61.85 835.70 66.14 835.70 73.45C835.70 80.76 833.26 85.05 829.10 85.05C824.94 85.05 822.50 80.76 822.50 73.45C822.50 66.14 824.94 61.85 829.10 61.85Z" fill="none" stroke="#ffffff" stroke-width="3.70"/>
<path d="M823.40 81.00L834.40 65.30" stroke="#ffffff" stroke-width="3.8"/>
<path d="M972.46 61.85C976.62 61.85 979.06 66.14 979.06 73.45C979.06 80.76 976.62 85.05 972.46 85.05C968.30 85.05 965.86 80.76 965.86 73.45C965.86 66.14 968.30 61.85 972.46 61.85Z" fill="none" stroke="#ffffff" stroke-width="3.70"/>
<path d="M966.76 81.00L977.76 65.30" stroke="#ffffff" stroke-width="3.8"/>
<path d="M1115.82 61.85C1119.98 61.85 1122.42 66.14 1122.42 73.45C1122.42 80.76 1119.98 85.05 1115.82 85.05C1111.66 85.05 1109.22 80.76 1109.22 73.45C1109.22 66.14 1111.66 61.85 1115.82 61.85Z" fill="none" stroke="#ffffff" stroke-width="3.70"/>
<path d="M1110.12 81.00L1121.12 65.30" stroke="#ffffff" stroke-width="3.8"/>
<path d="M1259.18 61.85C1263.34 61.85 1265.78 66.14 1265.78 73.45C1265.78 80.76 1263.34 85.05 1259.18 85.05C1255.02 85.05 1252.58 80.76 1252.58 73.45C1252.58 66.14 1255.02 61.85 1259.18 61.85Z" fill="none" stroke="#ffffff" stroke-width="3.70"/>
<path d="M1253.48 81.00L1264.48 65.30" stroke="#ffffff" stroke-width="3.8"/>
<path d="M1402.54 61.85C1406.70 61.85 1409.14 66.14 1409.14 73.45C1409.14 80.76 1406.70 85.05 1402.54 85.05C1398.38 85.05 1395.94 80.76 1395.94 73.45C1395.94 66.14 1398.38 61.85 1402.54 61.85Z" fill="none" stroke="#ffffff" stroke-width="3.70"/>
<path d="M1396.84 81.00L1407.84 65.30" stroke="#ffffff" stroke-width="3.8"/>
<path d="M542.38 101.85C546.54 101.85 548.98 106.14 548.98 113.45C548.98 120.76 546.54 125.05 542.38 125.05C538.22 125.05 535.78 120.76 535.78 113.45C535.78 106.14 538.22 101.85 542.38 101.85Z" fill="none" stroke="#ffffff" stroke-width="3.70"/>
<path d="M536.68 121.00L547.68 105.30" stroke="#ffffff" stroke-width="3.8"/>
<path d="M685.74 101.85C689.90 101.85 692.34 106.14 692.34 113.45C692.34 120.76 689.90 125.05 685.74 125.05C681.58 125.05 679.14 120.76 679.14 113.45C679.14 106.14 681.58 101.85 685.74 101.85Z" fill="none" stroke="#ffffff" stroke-width="3.70"/>
<path d="M680.04 121.00L691.04 105.30" stroke="#ffffff" stroke-width="3.8"/>
<path d="M829.10 101.85C833.26 101.85 835.70 106.14 835.70 113.45C835.70 120.76 833.26 125.05 829.10 125.05C824.94 125.05 822.50 120.76 822.50 113.45C822.50 106.14 824.94 101.85 829.10 101.85Z" fill="none" stroke="#ffffff" stroke-width="3.70"/>
<path d="M823.40 121.00L834.40 105.30" stroke="#ffffff" stroke-width="3.8"/>
<path d="M972.46 101.85C976.62 101.85 979.06 106.14 979.06 113.45C979.06 120.76 976.62 125.05 972.46 125.05C968.30 125.05 965.86 120.76 965.86 113.45C965.86 106.14 968.30 101.85 972.46 101.85Z" fill="none" stroke="#ffffff" stroke-width="3.70"/>
<path d="M966.76 121.00L977.76 105.30" stroke="#ffffff" stroke-width="3.8"/>
<path d="M1115.82 101.85C1119.98 101.85 1122.42 106.14 1122.42 113.45C1122.42 120.76 1119.98 125.05 1115.82 125.05C1111.66 125.05 1109.22 120.76 1109.22 113.45C1109.22 106.14 1111.66 101.85 1115.82 101.85Z" fill="none" stroke="#ffffff" stroke-width="3.70"/>
<path d="M1110.12 121.00L1121.12 105.30" stroke="#ffffff" stroke-width="3.8"/>
<path d="M1259.18 101.85C1263.34 101.85 1265.78 106.14 1265.78 113.45C1265.78 120.76 1263.34 125.05 1259.18 125.05C1255.02 125.05 1252.58 120.76 1252.58 113.45C1252.58 106.14 1255.02 101.85 1259.18 101.85Z" fill="none" stroke="#ffffff" stroke-width="3.70"/>
<path d="M1253.48 121.00L1264.48 105.30" stroke="#ffffff" stroke-width="3.8"/>
<path d="M1402.54 101.85C1406.70 101.85 1409.14 106.14 1409.14 113.45C1409.14 120.76 1406.70 125.05 1402.54 125.05C1398.38 125.05 1395.94 120.76 1395.94 113.45C1395.94 106.14 1398.38 101.85 1402.54 101.85Z" fill="none" stroke="#ffffff" stroke-width="3.70"/>
<path d="M1396.84 121.00L1407.84 105.30" stroke="#ffffff" stroke-width="3.8"/>
<path d="M542.38 141.85C546.54 141.85 548.98 146.14 548.98 153.45C548.98 160.76 546.54 165.05 542.38 165.05C538.22 165.05 535.78 160.76 535.78 153.45C535.78 146.14 538.22 141.85 542.38 141.85Z" fill="none" stroke="#ffffff" stroke-width="3.70"/>
<path d="M536.68 161.00L547.68 145.30" stroke="#ffffff" stroke-width="3.8"/>
<path d="M685.74 141.85C689.90 141.85 692.34 146.14 692.34 153.45C692.34 160.76 689.90 165.05 685.74 165.05C681.58 165.05 679.14 160.76 679.14 153.45C679.14 146.14 681.58 141.85 685.74 141.85Z" fill="none" stroke="#ffffff" stroke-width="3.70"/>
<path d="M680.04 161.00L691.04 145.30" stroke="#ffffff" stroke-width="3.8"/>
<path d="M829.10 141.85C833.26 141.85 835.70 146.14 835.70 153.45C835.70 160.76 833.26 165.05 829.10 165.05C824.94 165.05 822.50 160.76 822.50 153.45C822.50 146.14 824.94 141.85 829.10 141.85Z" fill="none" stroke="#ffffff" stroke-width="3.70"/>
<path d="M823.40 161.00L834.40 145.30" stroke="#ffffff" stroke-width="3.8"/>
<path d="M972.46 141.85C976.62 141.85 979.06 146.14 979.06 153.45C979.06 160.76 976.62 165.05 972.46 165.05C968.30 165.05 965.86 160.76 965.86 153.45C965.86 146.14 968.30 141.85 972.46 141.85Z" fill="none" stroke="#ffffff" stroke-width="3.70"/>
<path d="M966.76 161.00L977.76 145.30" stroke="#ffffff" stroke-width="3.8"/>
<path d="M1115.82 141.85C1119.98 141.85 1122.42 146.14 1122.42 153.45C1122.42 160.76 1119.98 165.05 1115.82 165.05C1111.66 165.05 1109.22 160.76 1109.22 153.45C1109.22 146.14 1111.66 141.85 1115.82 141.85Z" fill="none" stroke="#ffffff" stroke-width="3.70"/>
<path d="M1110.12 161.00L1121.12 145.30" stroke="#ffffff" stroke-width="3.8"/>
<path d="M1259.18 141.85C1263.34 141.85 1265.78 146.14 1265.78 153.45C1265.78 160.76 1263.34 165.05 1259.18 165.05C1255.02 165.05 1252.58 160.76 1252.58 153.45C1252.58 146.14 1255.02 141.85 1259.18 141.85Z" fill="none" stroke="#ffffff" stroke-width="3.70"/>
<path d="M1253.48 161.00L1264.48 145.30" stroke="#ffffff" stroke-width="3.8"/>
<path d="M1402.54 141.85C1406.70 141.85 1409.14 146.14 1409.14 153.45C1409.14 160.76 1406.70 165.05 1402.54 165.05C1398.38 165.05 1395.94 160.76 1395.94 153.45C1395.94 146.14 1398.38 141.85 1402.54 141.85Z" fill="none" stroke="#ffffff" stroke-width="3.70"/>
<path d="M1396.84 161.00L1407.84 145.30" stroke="#ffffff" stroke-width="3.8"/>
<g fill="none" stroke="#ffffff" stroke-width="2.9"><ellipse cx="414.70" cy="187.00" rx="3.9" ry="4.1"/><ellipse cx="423.50" cy="200.50" rx="3.9" ry="4.1"/><path d="M409.40 197.10L428.80 190.00" stroke-width="3.0"/></g>
<path d="M542.38 181.85C546.54 181.85 548.98 186.14 548.98 193.45C548.98 200.76 546.54 205.05 542.38 205.05C538.22 205.05 535.78 200.76 535.78 193.45C535.78 186.14 538.22 181.85 542.38 181.85Z" fill="none" stroke="#ffffff" stroke-width="3.70"/>
<path d="M536.68 201.00L547.68 185.30" stroke="#ffffff" stroke-width="3.8"/>
<g fill="none" stroke="#ffffff" stroke-width="2.9"><ellipse cx="558.06" cy="187.00" rx="3.9" ry="4.1"/><ellipse cx="566.86" cy="200.50" rx="3.9" ry="4.1"/><path d="M552.76 197.10L572.16 190.00" stroke-width="3.0"/></g>
<path d="M685.74 181.85C689.90 181.85 692.34 186.14 692.34 193.45C692.34 200.76 689.90 205.05 685.74 205.05C681.58 205.05 679.14 200.76 679.14 193.45C679.14 186.14 681.58 181.85 685.74 181.85Z" fill="none" stroke="#ffffff" stroke-width="3.70"/>
<path d="M680.04 201.00L691.04 185.30" stroke="#ffffff" stroke-width="3.8"/>
<g fill="none" stroke="#ffffff" stroke-width="2.9"><ellipse cx="701.42" cy="187.00" rx="3.9" ry="4.1"/><ellipse cx="710.22" cy="200.50" rx="3.9" ry="4.1"/><path d="M696.12 197.10L715.52 190.00" stroke-width="3.0"/></g>
<path d="M829.10 181.85C833.26 181.85 835.70 186.14 835.70 193.45C835.70 200.76 833.26 205.05 829.10 205.05C824.94 205.05 822.50 200.76 822.50 193.45C822.50 186.14 824.94 181.85 829.10 181.85Z" fill="none" stroke="#ffffff" stroke-width="3.70"/>
<path d="M823.40 201.00L834.40 185.30" stroke="#ffffff" stroke-width="3.8"/>
<g fill="none" stroke="#ffffff" stroke-width="2.9"><ellipse cx="844.78" cy="187.00" rx="3.9" ry="4.1"/><ellipse cx="853.58" cy="200.50" rx="3.9" ry="4.1"/><path d="M839.48 197.10L858.88 190.00" stroke-width="3.0"/></g>
<path d="M972.46 181.85C976.62 181.85 979.06 186.14 979.06 193.45C979.06 200.76 976.62 205.05 972.46 205.05C968.30 205.05 965.86 200.76 965.86 193.45C965.86 186.14 968.30 181.85 972.46 181.85Z" fill="none" stroke="#ffffff" stroke-width="3.70"/>
<path d="M966.76 201.00L977.76 185.30" stroke="#ffffff" stroke-width="3.8"/>
<g fill="none" stroke="#ffffff" stroke-width="2.9"><ellipse cx="988.14" cy="187.00" rx="3.9" ry="4.1"/><ellipse cx="996.94" cy="200.50" rx="3.9" ry="4.1"/><path d="M982.84 197.10L1002.24 190.00" stroke-width="3.0"/></g>
<path d="M1115.82 181.85C1119.98 181.85 1122.42 186.14 1122.42 193.45C1122.42 200.76 1119.98 205.05 1115.82 205.05C1111.66 205.05 1109.22 200.76 1109.22 193.45C1109.22 186.14 1111.66 181.85 1115.82 181.85Z" fill="none" stroke="#ffffff" stroke-width="3.70"/>
<path d="M1110.12 201.00L1121.12 185.30" stroke="#ffffff" stroke-width="3.8"/>
<g fill="none" stroke="#ffffff" stroke-width="2.9"><ellipse cx="1131.50" cy="187.00" rx="3.9" ry="4.1"/><ellipse cx="1140.30" cy="200.50" rx="3.9" ry="4.1"/><path d="M1126.20 197.10L1145.60 190.00" stroke-width="3.0"/></g>
<path d="M1259.18 181.85C1263.34 181.85 1265.78 186.14 1265.78 193.45C1265.78 200.76 1263.34 205.05 1259.18 205.05C1255.02 205.05 1252.58 200.76 1252.58 193.45C1252.58 186.14 1255.02 181.85 1259.18 181.85Z" fill="none" stroke="#ffffff" stroke-width="3.70"/>
<path d="M1253.48 201.00L1264.48 185.30" stroke="#ffffff" stroke-width="3.8"/>
<g fill="none" stroke="#ffffff" stroke-width="2.9"><ellipse cx="1274.86" cy="187.00" rx="3.9" ry="4.1"/><ellipse cx="1283.66" cy="200.50" rx="3.9" ry="4.1"/><path d="M1269.56 197.10L1288.96 190.00" stroke-width="3.0"/></g>
<path d="M1402.54 181.85C1406.70 181.85 1409.14 186.14 1409.14 193.45C1409.14 200.76 1406.70 205.05 1402.54 205.05C1398.38 205.05 1395.94 200.76 1395.94 193.45C1395.94 186.14 1398.38 181.85 1402.54 181.85Z" fill="none" stroke="#ffffff" stroke-width="3.70"/>
<path d="M1396.84 201.00L1407.84 185.30" stroke="#ffffff" stroke-width="3.8"/>
<g fill="none" stroke="#ffffff" stroke-width="2.9"><ellipse cx="1418.22" cy="187.00" rx="3.9" ry="4.1"/><ellipse cx="1427.02" cy="200.50" rx="3.9" ry="4.1"/><path d="M1412.92 197.10L1432.32 190.00" stroke-width="3.0"/></g>
<path d="M685.74 221.85C689.90 221.85 692.34 226.14 692.34 233.45C692.34 240.76 689.90 245.05 685.74 245.05C681.58 245.05 679.14 240.76 679.14 233.45C679.14 226.14 681.58 221.85 685.74 221.85Z" fill="none" stroke="#ffffff" stroke-width="3.70"/>
<path d="M680.04 241.00L691.04 225.30" stroke="#ffffff" stroke-width="3.8"/>
<g fill="none" stroke="#ffffff" stroke-width="2.9"><ellipse cx="414.70" cy="267.00" rx="3.9" ry="4.1"/><ellipse cx="423.50" cy="280.50" rx="3.9" ry="4.1"/><path d="M409.40 277.10L428.80 270.00" stroke-width="3.0"/></g>
<path d="M542.38 261.85C546.54 261.85 548.98 266.14 548.98 273.45C548.98 280.76 546.54 285.05 542.38 285.05C538.22 285.05 535.78 280.76 535.78 273.45C535.78 266.14 538.22 261.85 542.38 261.85Z" fill="none" stroke="#ffffff" stroke-width="3.70"/>
<path d="M536.68 281.00L547.68 265.30" stroke="#ffffff" stroke-width="3.8"/>
<g fill="none" stroke="#ffffff" stroke-width="2.9"><ellipse cx="558.06" cy="267.00" rx="3.9" ry="4.1"/><ellipse cx="566.86" cy="280.50" rx="3.9" ry="4.1"/><path d="M552.76 277.10L572.16 270.00" stroke-width="3.0"/></g>
<path d="M685.74 261.85C689.90 261.85 692.34 266.14 692.34 273.45C692.34 280.76 689.90 285.05 685.74 285.05C681.58 285.05 679.14 280.76 679.14 273.45C679.14 266.14 681.58 261.85 685.74 261.85Z" fill="none" stroke="#ffffff" stroke-width="3.70"/>
<path d="M680.04 281.00L691.04 265.30" stroke="#ffffff" stroke-width="3.8"/>
<g fill="none" stroke="#ffffff" stroke-width="2.9"><ellipse cx="701.42" cy="267.00" rx="3.9" ry="4.1"/><ellipse cx="710.22" cy="280.50" rx="3.9" ry="4.1"/><path d="M696.12 277.10L715.52 270.00" stroke-width="3.0"/></g>
<path d="M829.10 261.85C833.26 261.85 835.70 266.14 835.70 273.45C835.70 280.76 833.26 285.05 829.10 285.05C824.94 285.05 822.50 280.76 822.50 273.45C822.50 266.14 824.94 261.85 829.10 261.85Z" fill="none" stroke="#ffffff" stroke-width="3.70"/>
<path d="M823.40 281.00L834.40 265.30" stroke="#ffffff" stroke-width="3.8"/>
<g fill="none" stroke="#ffffff" stroke-width="2.9"><ellipse cx="844.78" cy="267.00" rx="3.9" ry="4.1"/><ellipse cx="853.58" cy="280.50" rx="3.9" ry="4.1"/><path d="M839.48 277.10L858.88 270.00" stroke-width="3.0"/></g>
<path d="M972.46 261.85C976.62 261.85 979.06 266.14 979.06 273.45C979.06 280.76 976.62 285.05 972.46 285.05C968.30 285.05 965.86 280.76 965.86 273.45C965.86 266.14 968.30 261.85 972.46 261.85Z" fill="none" stroke="#ffffff" stroke-width="3.70"/>
<path d="M966.76 281.00L977.76 265.30" stroke="#ffffff" stroke-width="3.8"/>
<g fill="none" stroke="#ffffff" stroke-width="2.9"><ellipse cx="988.14" cy="267.00" rx="3.9" ry="4.1"/><ellipse cx="996.94" cy="280.50" rx="3.9" ry="4.1"/><path d="M982.84 277.10L1002.24 270.00" stroke-width="3.0"/></g>
<path d="M1115.82 261.85C1119.98 261.85 1122.42 266.14 1122.42 273.45C1122.42 280.76 1119.98 285.05 1115.82 285.05C1111.66 285.05 1109.22 280.76 1109.22 273.45C1109.22 266.14 1111.66 261.85 1115.82 261.85Z" fill="none" stroke="#ffffff" stroke-width="3.70"/>
<path d="M1110.12 281.00L1121.12 265.30" stroke="#ffffff" stroke-width="3.8"/>
<g fill="none" stroke="#ffffff" stroke-width="2.9"><ellipse cx="1131.50" cy="267.00" rx="3.9" ry="4.1"/><ellipse cx="1140.30" cy="280.50" rx="3.9" ry="4.1"/><path d="M1126.20 277.10L1145.60 270.00" stroke-width="3.0"/></g>
<path d="M1259.18 261.85C1263.34 261.85 1265.78 266.14 1265.78 273.45C1265.78 280.76 1263.34 285.05 1259.18 285.05C1255.02 285.05 1252.58 280.76 1252.58 273.45C1252.58 266.14 1255.02 261.85 1259.18 261.85Z" fill="none" stroke="#ffffff" stroke-width="3.70"/>
<path d="M1253.48 281.00L1264.48 265.30" stroke="#ffffff" stroke-width="3.8"/>
<g fill="none" stroke="#ffffff" stroke-width="2.9"><ellipse cx="1274.86" cy="267.00" rx="3.9" ry="4.1"/><ellipse cx="1283.66" cy="280.50" rx="3.9" ry="4.1"/><path d="M1269.56 277.10L1288.96 270.00" stroke-width="3.0"/></g>
<path d="M1402.54 261.85C1406.70 261.85 1409.14 266.14 1409.14 273.45C1409.14 280.76 1406.70 285.05 1402.54 285.05C1398.38 285.05 1395.94 280.76 1395.94 273.45C1395.94 266.14 1398.38 261.85 1402.54 261.85Z" fill="none" stroke="#ffffff" stroke-width="3.70"/>
<path d="M1396.84 281.00L1407.84 265.30" stroke="#ffffff" stroke-width="3.8"/>
<g fill="none" stroke="#ffffff" stroke-width="2.9"><ellipse cx="1418.22" cy="267.00" rx="3.9" ry="4.1"/><ellipse cx="1427.02" cy="280.50" rx="3.9" ry="4.1"/><path d="M1412.92 277.10L1432.32 270.00" stroke-width="3.0"/></g>
<path d="M1607.34 341.85C1611.50 341.85 1613.94 346.14 1613.94 353.45C1613.94 360.76 1611.50 365.05 1607.34 365.05C1603.18 365.05 1600.74 360.76 1600.74 353.45C1600.74 346.14 1603.18 341.85 1607.34 341.85Z" fill="none" stroke="#000080" stroke-width="3.70"/>
<path d="M1601.64 361.00L1612.64 345.30" stroke="#000080" stroke-width="3.8"/>
<rect x="1618.42" y="353.40" width="17.2" height="3.6" fill="#000080"/>
<rect x="1843.70" y="353.40" width="17.2" height="3.6" fill="#000080"/>
<path d="M30.38 421.85C34.54 421.85 36.98 426.14 36.98 433.45C36.98 440.76 34.54 445.05 30.38 445.05C26.22 445.05 23.78 440.76 23.78 433.45C23.78 426.14 26.22 421.85 30.38 421.85Z" fill="none" stroke="#808080" stroke-width="3.70"/>
<path d="M24.68 441.00L35.68 425.30" stroke="#808080" stroke-width="3.8"/>
<path d="M112.30 421.85C116.46 421.85 118.90 426.14 118.90 433.45C118.90 440.76 116.46 445.05 112.30 445.05C108.14 445.05 105.70 440.76 105.70 433.45C105.70 426.14 108.14 421.85 112.30 421.85Z" fill="none" stroke="#ffffff" stroke-width="3.70"/>
<path d="M106.60 441.00L117.60 425.30" stroke="#ffffff" stroke-width="3.8"/>
<rect x="128.68" y="439.40" width="5.7" height="6.2" fill="#ffffff"/>
<path d="M112.30 461.85C116.46 461.85 118.90 466.14 118.90 473.45C118.90 480.76 116.46 485.05 112.30 485.05C108.14 485.05 105.70 480.76 105.70 473.45C105.70 466.14 108.14 461.85 112.30 461.85Z" fill="none" stroke="#ffffff" stroke-width="3.70"/>
<path d="M106.60 481.00L117.60 465.30" stroke="#ffffff" stroke-width="3.8"/>
<rect x="128.68" y="479.40" width="5.7" height="6.2" fill="#ffffff"/>
<path d="M337.58 461.85C341.74 461.85 344.18 466.14 344.18 473.45C344.18 480.76 341.74 485.05 337.58 485.05C333.42 485.05 330.98 480.76 330.98 473.45C330.98 466.14 333.42 461.85 337.58 461.85Z" fill="none" stroke="#4682b4" stroke-width="3.70"/>
<path d="M331.88 481.00L342.88 465.30" stroke="#4682b4" stroke-width="3.8"/>
<path d="M112.30 501.85C116.46 501.85 118.90 506.14 118.90 513.45C118.90 520.76 116.46 525.05 112.30 525.05C108.14 525.05 105.70 520.76 105.70 513.45C105.70 506.14 108.14 501.85 112.30 501.85Z" fill="none" stroke="#ffffff" stroke-width="3.70"/>
<path d="M106.60 521.00L117.60 505.30" stroke="#ffffff" stroke-width="3.8"/>
<rect x="128.68" y="519.40" width="5.7" height="6.2" fill="#ffffff"/>
<path d="M337.58 501.85C341.74 501.85 344.18 506.14 344.18 513.45C344.18 520.76 341.74 525.05 337.58 525.05C333.42 525.05 330.98 520.76 330.98 513.45C330.98 506.14 333.42 501.85 337.58 501.85Z" fill="none" stroke="#4682b4" stroke-width="3.70"/>
<path d="M331.88 521.00L342.88 505.30" stroke="#4682b4" stroke-width="3.8"/>
<path d="M112.30 541.85C116.46 541.85 118.90 546.14 118.90 553.45C118.90 560.76 116.46 565.05 112.30 565.05C108.14 565.05 105.70 560.76 105.70 553.45C105.70 546.14 108.14 541.85 112.30 541.85Z" fill="none" stroke="#ffffff" stroke-width="3.70"/>
<path d="M106.60 561.00L117.60 545.30" stroke="#ffffff" stroke-width="3.8"/>
<rect x="128.68" y="559.40" width="5.7" height="6.2" fill="#ffffff"/>
<path d="M337.58 541.85C341.74 541.85 344.18 546.14 344.18 553.45C344.18 560.76 341.74 565.05 337.58 565.05C333.42 565.05 330.98 560.76 330.98 553.45C330.98 546.14 333.42 541.85 337.58 541.85Z" fill="none" stroke="#4682b4" stroke-width="3.70"/>
<path d="M331.88 561.00L342.88 545.30" stroke="#4682b4" stroke-width="3.8"/>
<rect x="128.68" y="599.40" width="5.7" height="6.2" fill="#ffffff"/>
<rect x="128.68" y="639.40" width="5.7" height="6.2" fill="#ffffff"/>
<path d="M337.58 621.85C341.74 621.85 344.18 626.14 344.18 633.45C344.18 640.76 341.74 645.05 337.58 645.05C333.42 645.05 330.98 640.76 330.98 633.45C330.98 626.14 333.42 621.85 337.58 621.85Z" fill="none" stroke="#4682b4" stroke-width="3.70"/>
<path d="M331.88 641.00L342.88 625.30" stroke="#4682b4" stroke-width="3.8"/>
<rect x="128.68" y="679.40" width="5.7" height="6.2" fill="#ffffff"/>
<path d="M337.58 661.85C341.74 661.85 344.18 666.14 344.18 673.45C344.18 680.76 341.74 685.05 337.58 685.05C333.42 685.05 330.98 680.76 330.98 673.45C330.98 666.14 333.42 661.85 337.58 661.85Z" fill="none" stroke="#4682b4" stroke-width="3.70"/>
<path d="M331.88 681.00L342.88 665.30" stroke="#4682b4" stroke-width="3.8"/>
<rect x="128.68" y="719.40" width="5.7" height="6.2" fill="#ffffff"/>
<path d="M337.58 701.85C341.74 701.85 344.18 706.14 344.18 713.45C344.18 720.76 341.74 725.05 337.58 725.05C333.42 725.05 330.98 720.76 330.98 713.45C330.98 706.14 333.42 701.85 337.58 701.85Z" fill="none" stroke="#4682b4" stroke-width="3.70"/>
<path d="M331.88 721.00L342.88 705.30" stroke="#4682b4" stroke-width="3.8"/>
<rect x="128.68" y="759.40" width="5.7" height="6.2" fill="#ffffff"/>
<path d="M337.58 741.85C341.74 741.85 344.18 746.14 344.18 753.45C344.18 760.76 341.74 765.05 337.58 765.05C333.42 765.05 330.98 760.76 330.98 753.45C330.98 746.14 333.42 741.85 337.58 741.85Z" fill="none" stroke="#4682b4" stroke-width="3.70"/>
<path d="M331.88 761.00L342.88 745.30" stroke="#4682b4" stroke-width="3.8"/>
<rect x="128.68" y="799.40" width="5.7" height="6.2" fill="#ffffff"/>
<path d="M337.58 781.85C341.74 781.85 344.18 786.14 344.18 793.45C344.18 800.76 341.74 805.05 337.58 805.05C333.42 805.05 330.98 800.76 330.98 793.45C330.98 786.14 333.42 781.85 337.58 781.85Z" fill="none" stroke="#4682b4" stroke-width="3.70"/>
<path d="M331.88 801.00L342.88 785.30" stroke="#4682b4" stroke-width="3.8"/>
<path d="M30.38 821.85C34.54 821.85 36.98 826.14 36.98 833.45C36.98 840.76 34.54 845.05 30.38 845.05C26.22 845.05 23.78 840.76 23.78 833.45C23.78 826.14 26.22 821.85 30.38 821.85Z" fill="none" stroke="#808080" stroke-width="3.70"/>
<path d="M24.68 841.00L35.68 825.30" stroke="#808080" stroke-width="3.8"/>
<path d="M50.56 826.00L50.56 845.00M42.33 830.75L58.79 840.25M42.33 840.25L58.79 830.75" stroke="#ff00ff" stroke-width="3.20"/>
<rect x="128.68" y="839.40" width="5.7" height="6.2" fill="#ffffff"/>
<path d="M337.58 821.85C341.74 821.85 344.18 826.14 344.18 833.45C344.18 840.76 341.74 845.05 337.58 845.05C333.42 845.05 330.98 840.76 330.98 833.45C330.98 826.14 333.42 821.85 337.58 821.85Z" fill="none" stroke="#00ffff" stroke-width="3.70"/>
<path d="M331.88 841.00L342.88 825.30" stroke="#00ffff" stroke-width="3.8"/>
<rect x="128.68" y="879.40" width="5.7" height="6.2" fill="#ffffff"/>
<path d="M337.58 861.85C341.74 861.85 344.18 866.14 344.18 873.45C344.18 880.76 341.74 885.05 337.58 885.05C333.42 885.05 330.98 880.76 330.98 873.45C330.98 866.14 333.42 861.85 337.58 861.85Z" fill="none" stroke="#4682b4" stroke-width="3.70"/>
<path d="M331.88 881.00L342.88 865.30" stroke="#4682b4" stroke-width="3.8"/>
<rect x="128.68" y="919.40" width="5.7" height="6.2" fill="#ffffff"/>
<path d="M337.58 901.85C341.74 901.85 344.18 906.14 344.18 913.45C344.18 920.76 341.74 925.05 337.58 925.05C333.42 925.05 330.98 920.76 330.98 913.45C330.98 906.14 333.42 901.85 337.58 901.85Z" fill="none" stroke="#4682b4" stroke-width="3.70"/>
<path d="M331.88 921.00L342.88 905.30" stroke="#4682b4" stroke-width="3.8"/>
<rect x="128.68" y="959.40" width="5.7" height="6.2" fill="#ffffff"/>
<path d="M337.58 941.85C341.74 941.85 344.18 946.14 344.18 953.45C344.18 960.76 341.74 965.05 337.58 965.05C333.42 965.05 330.98 960.76 330.98 953.45C330.98 946.14 333.42 941.85 337.58 941.85Z" fill="none" stroke="#4682b4" stroke-width="3.70"/>
<path d="M331.88 961.00L342.88 945.30" stroke="#4682b4" stroke-width="3.8"/>
<path d="M50.56 986.00L50.56 1005.00M42.33 990.75L58.79 1000.25M42.33 1000.25L58.79 990.75" stroke="#ff00ff" stroke-width="3.20"/>
<rect x="128.68" y="999.40" width="5.7" height="6.2" fill="#ffffff"/>
<path d="M337.58 981.85C341.74 981.85 344.18 986.14 344.18 993.45C344.18 1000.76 341.74 1005.05 337.58 1005.05C333.42 1005.05 330.98 1000.76 330.98 993.45C330.98 986.14 333.42 981.85 337.58 981.85Z" fill="none" stroke="#00ffff" stroke-width="3.70"/>
<path d="M331.88 1001.00L342.88 985.30" stroke="#00ffff" stroke-width="3.8"/>
<rect x="128.68" y="1039.40" width="5.7" height="6.2" fill="#ffffff"/>
<path d="M30.38 1061.85C34.54 1061.85 36.98 1066.14 36.98 1073.45C36.98 1080.76 34.54 1085.05 30.38 1085.05C26.22 1085.05 23.78 1080.76 23.78 1073.45C23.78 1066.14 26.22 1061.85 30.38 1061.85Z" fill="none" stroke="#808080" stroke-width="3.70"/>
<path d="M24.68 1081.00L35.68 1065.30" stroke="#808080" stroke-width="3.8"/>
<rect x="128.68" y="1079.40" width="5.7" height="6.2" fill="#ffffff"/>
<rect x="313.00" y="1079.40" width="5.7" height="6.2" fill="#4682b4"/>
<path d="M439.98 1061.85C444.14 1061.85 446.58 1066.14 446.58 1073.45C446.58 1080.76 444.14 1085.05 439.98 1085.05C435.82 1085.05 433.38 1080.76 433.38 1073.45C433.38 1066.14 435.82 1061.85 439.98 1061.85Z" fill="none" stroke="#4682b4" stroke-width="3.70"/>
<path d="M434.28 1081.00L445.28 1065.30" stroke="#4682b4" stroke-width="3.8"/>
<rect x="128.68" y="1119.40" width="5.7" height="6.2" fill="#ffffff"/>
<rect x="313.00" y="1119.40" width="5.7" height="6.2" fill="#4682b4"/>
<path d="M439.98 1101.85C444.14 1101.85 446.58 1106.14 446.58 1113.45C446.58 1120.76 444.14 1125.05 439.98 1125.05C435.82 1125.05 433.38 1120.76 433.38 1113.45C433.38 1106.14 435.82 1101.85 439.98 1101.85Z" fill="none" stroke="#4682b4" stroke-width="3.70"/>
<path d="M434.28 1121.00L445.28 1105.30" stroke="#4682b4" stroke-width="3.8"/>
<rect x="128.68" y="1439.40" width="5.7" height="6.2" fill="#ffffff"/>
<path d="M30.38 1461.85C34.54 1461.85 36.98 1466.14 36.98 1473.45C36.98 1480.76 34.54 1485.05 30.38 1485.05C26.22 1485.05 23.78 1480.76 23.78 1473.45C23.78 1466.14 26.22 1461.85 30.38 1461.85Z" fill="none" stroke="#808080" stroke-width="3.70"/>
<path d="M24.68 1481.00L35.68 1465.30" stroke="#808080" stroke-width="3.8"/>
<path d="M542.38 421.85C546.54 421.85 548.98 426.14 548.98 433.45C548.98 440.76 546.54 445.05 542.38 445.05C538.22 445.05 535.78 440.76 535.78 433.45C535.78 426.14 538.22 421.85 542.38 421.85Z" fill="none" stroke="#4682b4" stroke-width="3.70"/>
<path d="M536.68 441.00L547.68 425.30" stroke="#4682b4" stroke-width="3.8"/>
<path d="M624.30 421.85C628.46 421.85 630.90 426.14 630.90 433.45C630.90 440.76 628.46 445.05 624.30 445.05C620.14 445.05 617.70 440.76 617.70 433.45C617.70 426.14 620.14 421.85 624.30 421.85Z" fill="none" stroke="#ffffff" stroke-width="3.70"/>
<path d="M618.60 441.00L629.60 425.30" stroke="#ffffff" stroke-width="3.8"/>
<rect x="640.68" y="439.40" width="5.7" height="6.2" fill="#ffffff"/>
<path d="M706.22 421.85C710.38 421.85 712.82 426.14 712.82 433.45C712.82 440.76 710.38 445.05 706.22 445.05C702.06 445.05 699.62 440.76 699.62 433.45C699.62 426.14 702.06 421.85 706.22 421.85Z" fill="none" stroke="#ffffff" stroke-width="3.70"/>
<path d="M700.52 441.00L711.52 425.30" stroke="#ffffff" stroke-width="3.8"/>
<rect x="737.78" y="433.40" width="17.2" height="3.6" fill="#4682b4"/>
<rect x="640.68" y="559.40" width="5.7" height="6.2" fill="#ffffff"/>
<path d="M706.22 541.85C710.38 541.85 712.82 546.14 712.82 553.45C712.82 560.76 710.38 565.05 706.22 565.05C702.06 565.05 699.62 560.76 699.62 553.45C699.62 546.14 702.06 541.85 706.22 541.85Z" fill="none" stroke="#ffffff" stroke-width="3.70"/>
<path d="M700.52 561.00L711.52 545.30" stroke="#ffffff" stroke-width="3.8"/>
<path d="M767.66 541.85C771.82 541.85 774.26 546.14 774.26 553.45C774.26 560.76 771.82 565.05 767.66 565.05C763.50 565.05 761.06 560.76 761.06 553.45C761.06 546.14 763.50 541.85 767.66 541.85Z" fill="none" stroke="#006400" stroke-width="3.70"/>
<path d="M761.96 561.00L772.96 545.30" stroke="#006400" stroke-width="3.8"/>
<g fill="none" stroke="#006400" stroke-width="2.9"><ellipse cx="783.34" cy="547.00" rx="3.9" ry="4.1"/><ellipse cx="792.14" cy="560.50" rx="3.9" ry="4.1"/><path d="M778.04 557.10L797.44 550.00" stroke-width="3.0"/></g>
<rect x="819.70" y="553.40" width="17.2" height="3.6" fill="#4682b4"/>
<rect x="640.68" y="599.40" width="5.7" height="6.2" fill="#ffffff"/>
<rect x="758.26" y="593.40" width="17.2" height="3.6" fill="#4682b4"/>
<rect x="681.64" y="639.40" width="5.7" height="6.2" fill="#ffffff"/>
<rect x="799.22" y="633.40" width="17.2" height="3.6" fill="#4682b4"/>
<rect x="906.92" y="639.40" width="5.7" height="6.2" fill="#4682b4"/>
<rect x="640.68" y="679.40" width="5.7" height="6.2" fill="#ffffff"/>
<path d="M767.66 661.85C771.82 661.85 774.26 666.14 774.26 673.45C774.26 680.76 771.82 685.05 767.66 685.05C763.50 685.05 761.06 680.76 761.06 673.45C761.06 666.14 763.50 661.85 767.66 661.85Z" fill="none" stroke="#006400" stroke-width="3.70"/>
<path d="M761.96 681.00L772.96 665.30" stroke="#006400" stroke-width="3.8"/>
<g fill="none" stroke="#006400" stroke-width="2.9"><ellipse cx="783.34" cy="667.00" rx="3.9" ry="4.1"/><ellipse cx="792.14" cy="680.50" rx="3.9" ry="4.1"/><path d="M778.04 677.10L797.44 670.00" stroke-width="3.0"/></g>
<rect x="819.70" y="673.40" width="17.2" height="3.6" fill="#4682b4"/>
<rect x="640.68" y="719.40" width="5.7" height="6.2" fill="#ffffff"/>
<rect x="758.26" y="713.40" width="17.2" height="3.6" fill="#4682b4"/>
<rect x="865.96" y="719.40" width="5.7" height="6.2" fill="#4682b4"/>
<rect x="640.68" y="759.40" width="5.7" height="6.2" fill="#ffffff"/>
<path d="M767.66 741.85C771.82 741.85 774.26 746.14 774.26 753.45C774.26 760.76 771.82 765.05 767.66 765.05C763.50 765.05 761.06 760.76 761.06 753.45C761.06 746.14 763.50 741.85 767.66 741.85Z" fill="none" stroke="#006400" stroke-width="3.70"/>
<path d="M761.96 761.00L772.96 745.30" stroke="#006400" stroke-width="3.8"/>
<g fill="none" stroke="#006400" stroke-width="2.9"><ellipse cx="783.34" cy="747.00" rx="3.9" ry="4.1"/><ellipse cx="792.14" cy="760.50" rx="3.9" ry="4.1"/><path d="M778.04 757.10L797.44 750.00" stroke-width="3.0"/></g>
<rect x="819.70" y="753.40" width="17.2" height="3.6" fill="#4682b4"/>
<rect x="640.68" y="799.40" width="5.7" height="6.2" fill="#ffffff"/>
<rect x="758.26" y="793.40" width="17.2" height="3.6" fill="#4682b4"/>
<path d="M542.38 821.85C546.54 821.85 548.98 826.14 548.98 833.45C548.98 840.76 546.54 845.05 542.38 845.05C538.22 845.05 535.78 840.76 535.78 833.45C535.78 826.14 538.22 821.85 542.38 821.85Z" fill="none" stroke="#4682b4" stroke-width="3.70"/>
<path d="M536.68 841.00L547.68 825.30" stroke="#4682b4" stroke-width="3.8"/>
<rect x="640.68" y="839.40" width="5.7" height="6.2" fill="#ffffff"/>
<path d="M767.66 821.85C771.82 821.85 774.26 826.14 774.26 833.45C774.26 840.76 771.82 845.05 767.66 845.05C763.50 845.05 761.06 840.76 761.06 833.45C761.06 826.14 763.50 821.85 767.66 821.85Z" fill="none" stroke="#006400" stroke-width="3.70"/>
<path d="M761.96 841.00L772.96 825.30" stroke="#006400" stroke-width="3.8"/>
<g fill="none" stroke="#006400" stroke-width="2.9"><ellipse cx="783.34" cy="827.00" rx="3.9" ry="4.1"/><ellipse cx="792.14" cy="840.50" rx="3.9" ry="4.1"/><path d="M778.04 837.10L797.44 830.00" stroke-width="3.0"/></g>
<rect x="819.70" y="833.40" width="17.2" height="3.6" fill="#4682b4"/>
<rect x="640.68" y="879.40" width="5.7" height="6.2" fill="#ffffff"/>
<path d="M726.70 861.85C730.86 861.85 733.30 866.14 733.30 873.45C733.30 880.76 730.86 885.05 726.70 885.05C722.54 885.05 720.10 880.76 720.10 873.45C720.10 866.14 722.54 861.85 726.70 861.85Z" fill="none" stroke="#ffffff" stroke-width="3.70"/>
<path d="M721.00 881.00L732.00 865.30" stroke="#ffffff" stroke-width="3.8"/>
<path d="M767.66 861.85C771.82 861.85 774.26 866.14 774.26 873.45C774.26 880.76 771.82 885.05 767.66 885.05C763.50 885.05 761.06 880.76 761.06 873.45C761.06 866.14 763.50 861.85 767.66 861.85Z" fill="none" stroke="#006400" stroke-width="3.70"/>
<path d="M761.96 881.00L772.96 865.30" stroke="#006400" stroke-width="3.8"/>
<g fill="none" stroke="#006400" stroke-width="2.9"><ellipse cx="783.34" cy="867.00" rx="3.9" ry="4.1"/><ellipse cx="792.14" cy="880.50" rx="3.9" ry="4.1"/><path d="M778.04 877.10L797.44 870.00" stroke-width="3.0"/></g>
<rect x="819.70" y="873.40" width="17.2" height="3.6" fill="#4682b4"/>
<rect x="927.40" y="879.40" width="5.7" height="6.2" fill="#4682b4"/>
<rect x="1091.24" y="879.40" width="5.7" height="6.2" fill="#ffffff"/>
<path d="M1218.22 861.85C1222.38 861.85 1224.82 866.14 1224.82 873.45C1224.82 880.76 1222.38 885.05 1218.22 885.05C1214.06 885.05 1211.62 880.76 1211.62 873.45C1211.62 866.14 1214.06 861.85 1218.22 861.85Z" fill="none" stroke="#006400" stroke-width="3.70"/>
<path d="M1212.52 881.00L1223.52 865.30" stroke="#006400" stroke-width="3.8"/>
<g fill="none" stroke="#006400" stroke-width="2.9"><ellipse cx="1233.90" cy="867.00" rx="3.9" ry="4.1"/><ellipse cx="1242.70" cy="880.50" rx="3.9" ry="4.1"/><path d="M1228.60 877.10L1248.00 870.00" stroke-width="3.0"/></g>
<rect x="1270.26" y="873.40" width="17.2" height="3.6" fill="#4682b4"/>
<rect x="640.68" y="919.40" width="5.7" height="6.2" fill="#ffffff"/>
<rect x="758.26" y="913.40" width="17.2" height="3.6" fill="#4682b4"/>
<rect x="865.96" y="919.40" width="5.7" height="6.2" fill="#4682b4"/>
<rect x="640.68" y="959.40" width="5.7" height="6.2" fill="#ffffff"/>
<path d="M726.70 941.85C730.86 941.85 733.30 946.14 733.30 953.45C733.30 960.76 730.86 965.05 726.70 965.05C722.54 965.05 720.10 960.76 720.10 953.45C720.10 946.14 722.54 941.85 726.70 941.85Z" fill="none" stroke="#ffffff" stroke-width="3.70"/>
<path d="M721.00 961.00L732.00 945.30" stroke="#ffffff" stroke-width="3.8"/>
<rect x="758.26" y="953.40" width="17.2" height="3.6" fill="#4682b4"/>
<path d="M849.58 941.85C853.74 941.85 856.18 946.14 856.18 953.45C856.18 960.76 853.74 965.05 849.58 965.05C845.42 965.05 842.98 960.76 842.98 953.45C842.98 946.14 845.42 941.85 849.58 941.85Z" fill="none" stroke="#4682b4" stroke-width="3.70"/>
<path d="M843.88 961.00L854.88 945.30" stroke="#4682b4" stroke-width="3.8"/>
<rect x="865.96" y="959.40" width="5.7" height="6.2" fill="#4682b4"/>
<rect x="640.68" y="999.40" width="5.7" height="6.2" fill="#ffffff"/>
<path d="M788.14 981.85C792.30 981.85 794.74 986.14 794.74 993.45C794.74 1000.76 792.30 1005.05 788.14 1005.05C783.98 1005.05 781.54 1000.76 781.54 993.45C781.54 986.14 783.98 981.85 788.14 981.85Z" fill="none" stroke="#006400" stroke-width="3.70"/>
<path d="M782.44 1001.00L793.44 985.30" stroke="#006400" stroke-width="3.8"/>
<g fill="none" stroke="#006400" stroke-width="2.9"><ellipse cx="803.82" cy="987.00" rx="3.9" ry="4.1"/><ellipse cx="812.62" cy="1000.50" rx="3.9" ry="4.1"/><path d="M798.52 997.10L817.92 990.00" stroke-width="3.0"/></g>
<rect x="840.18" y="993.40" width="17.2" height="3.6" fill="#4682b4"/>
<rect x="702.12" y="1039.40" width="5.7" height="6.2" fill="#ffffff"/>
<rect x="799.22" y="1033.40" width="17.2" height="3.6" fill="#4682b4"/>
<rect x="906.92" y="1039.40" width="5.7" height="6.2" fill="#4682b4"/>
<path d="M542.38 1061.85C546.54 1061.85 548.98 1066.14 548.98 1073.45C548.98 1080.76 546.54 1085.05 542.38 1085.05C538.22 1085.05 535.78 1080.76 535.78 1073.45C535.78 1066.14 538.22 1061.85 542.38 1061.85Z" fill="none" stroke="#4682b4" stroke-width="3.70"/>
<path d="M536.68 1081.00L547.68 1065.30" stroke="#4682b4" stroke-width="3.8"/>
<rect x="640.68" y="1079.40" width="5.7" height="6.2" fill="#ffffff"/>
<path d="M706.22 1061.85C710.38 1061.85 712.82 1066.14 712.82 1073.45C712.82 1080.76 710.38 1085.05 706.22 1085.05C702.06 1085.05 699.62 1080.76 699.62 1073.45C699.62 1066.14 702.06 1061.85 706.22 1061.85Z" fill="none" stroke="#ffffff" stroke-width="3.70"/>
<path d="M700.52 1081.00L711.52 1065.30" stroke="#ffffff" stroke-width="3.8"/>
<rect x="758.26" y="1073.40" width="17.2" height="3.6" fill="#4682b4"/>
<rect x="865.96" y="1079.40" width="5.7" height="6.2" fill="#4682b4"/>
<rect x="640.68" y="1159.40" width="5.7" height="6.2" fill="#ffffff"/>
<rect x="758.26" y="1153.40" width="17.2" height="3.6" fill="#4682b4"/>
<rect x="865.96" y="1159.40" width="5.7" height="6.2" fill="#4682b4"/>
<rect x="640.68" y="1199.40" width="5.7" height="6.2" fill="#ffffff"/>
<rect x="758.26" y="1193.40" width="17.2" height="3.6" fill="#4682b4"/>
<rect x="865.96" y="1199.40" width="5.7" height="6.2" fill="#4682b4"/>
<rect x="640.68" y="1399.40" width="5.7" height="6.2" fill="#ffffff"/>
<path d="M788.14 1381.85C792.30 1381.85 794.74 1386.14 794.74 1393.45C794.74 1400.76 792.30 1405.05 788.14 1405.05C783.98 1405.05 781.54 1400.76 781.54 1393.45C781.54 1386.14 783.98 1381.85 788.14 1381.85Z" fill="none" stroke="#006400" stroke-width="3.70"/>
<path d="M782.44 1401.00L793.44 1385.30" stroke="#006400" stroke-width="3.8"/>
<g fill="none" stroke="#006400" stroke-width="2.9"><ellipse cx="803.82" cy="1387.00" rx="3.9" ry="4.1"/><ellipse cx="812.62" cy="1400.50" rx="3.9" ry="4.1"/><path d="M798.52 1397.10L817.92 1390.00" stroke-width="3.0"/></g>
<rect x="840.18" y="1393.40" width="17.2" height="3.6" fill="#4682b4"/>
<rect x="947.88" y="1399.40" width="5.7" height="6.2" fill="#4682b4"/>
<rect x="640.68" y="1439.40" width="5.7" height="6.2" fill="#ffffff"/>
<path d="M788.14 1421.85C792.30 1421.85 794.74 1426.14 794.74 1433.45C794.74 1440.76 792.30 1445.05 788.14 1445.05C783.98 1445.05 781.54 1440.76 781.54 1433.45C781.54 1426.14 783.98 1421.85 788.14 1421.85Z" fill="none" stroke="#006400" stroke-width="3.70"/>
<path d="M782.44 1441.00L793.44 1425.30" stroke="#006400" stroke-width="3.8"/>
<g fill="none" stroke="#006400" stroke-width="2.9"><ellipse cx="803.82" cy="1427.00" rx="3.9" ry="4.1"/><ellipse cx="812.62" cy="1440.50" rx="3.9" ry="4.1"/><path d="M798.52 1437.10L817.92 1430.00" stroke-width="3.0"/></g>
<rect x="840.18" y="1433.40" width="17.2" height="3.6" fill="#4682b4"/>
<rect x="947.88" y="1439.40" width="5.7" height="6.2" fill="#4682b4"/>
<path d="M542.38 1461.85C546.54 1461.85 548.98 1466.14 548.98 1473.45C548.98 1480.76 546.54 1485.05 542.38 1485.05C538.22 1485.05 535.78 1480.76 535.78 1473.45C535.78 1466.14 538.22 1461.85 542.38 1461.85Z" fill="none" stroke="#4682b4" stroke-width="3.70"/>
<path d="M536.68 1481.00L547.68 1465.30" stroke="#4682b4" stroke-width="3.8"/>
<path d="M583.04 1626.00L583.04 1645.00M574.81 1630.75L591.27 1640.25M574.81 1640.25L591.27 1630.75" stroke="#ffffff" stroke-width="3.20"/>
<rect x="599.72" y="1639.40" width="5.7" height="6.2" fill="#ffffff"/>
<path d="M583.04 1666.00L583.04 1685.00M574.81 1670.75L591.27 1680.25M574.81 1680.25L591.27 1670.75" stroke="#ffffff" stroke-width="3.20"/>
<rect x="599.72" y="1679.40" width="5.7" height="6.2" fill="#ffffff"/>
<path d="M1423.02 421.85C1427.18 421.85 1429.62 426.14 1429.62 433.45C1429.62 440.76 1427.18 445.05 1423.02 445.05C1418.86 445.05 1416.42 440.76 1416.42 433.45C1416.42 426.14 1418.86 421.85 1423.02 421.85Z" fill="none" stroke="#808080" stroke-width="3.70"/>
<path d="M1417.32 441.00L1428.32 425.30" stroke="#808080" stroke-width="3.8"/>
<path d="M1504.94 421.85C1509.10 421.85 1511.54 426.14 1511.54 433.45C1511.54 440.76 1509.10 445.05 1504.94 445.05C1500.78 445.05 1498.34 440.76 1498.34 433.45C1498.34 426.14 1500.78 421.85 1504.94 421.85Z" fill="none" stroke="#4682b4" stroke-width="3.70"/>
<path d="M1499.24 441.00L1510.24 425.30" stroke="#4682b4" stroke-width="3.8"/>
<rect x="1541.80" y="439.40" width="5.7" height="6.2" fill="#808080"/>
<rect x="1562.28" y="439.40" width="5.7" height="6.2" fill="#808080"/>
<rect x="1582.76" y="439.40" width="5.7" height="6.2" fill="#808080"/>
<rect x="1603.24" y="439.40" width="5.7" height="6.2" fill="#808080"/>
<rect x="1623.72" y="439.40" width="5.7" height="6.2" fill="#808080"/>
<rect x="1644.20" y="439.40" width="5.7" height="6.2" fill="#808080"/>
<rect x="1664.68" y="439.40" width="5.7" height="6.2" fill="#808080"/>
<rect x="1685.16" y="439.40" width="5.7" height="6.2" fill="#808080"/>
<rect x="1705.64" y="439.40" width="5.7" height="6.2" fill="#808080"/>
<rect x="1726.12" y="439.40" width="5.7" height="6.2" fill="#808080"/>
<path d="M1771.18 421.85C1775.34 421.85 1777.78 426.14 1777.78 433.45C1777.78 440.76 1775.34 445.05 1771.18 445.05C1767.02 445.05 1764.58 440.76 1764.58 433.45C1764.58 426.14 1767.02 421.85 1771.18 421.85Z" fill="none" stroke="#4682b4" stroke-width="3.70"/>
<path d="M1765.48 441.00L1776.48 425.30" stroke="#4682b4" stroke-width="3.8"/>
<path d="M1791.66 421.85C1795.82 421.85 1798.26 426.14 1798.26 433.45C1798.26 440.76 1795.82 445.05 1791.66 445.05C1787.50 445.05 1785.06 440.76 1785.06 433.45C1785.06 426.14 1787.50 421.85 1791.66 421.85Z" fill="none" stroke="#4682b4" stroke-width="3.70"/>
<path d="M1785.96 441.00L1796.96 425.30" stroke="#4682b4" stroke-width="3.8"/>
<path d="M1873.58 421.85C1877.74 421.85 1880.18 426.14 1880.18 433.45C1880.18 440.76 1877.74 445.05 1873.58 445.05C1869.42 445.05 1866.98 440.76 1866.98 433.45C1866.98 426.14 1869.42 421.85 1873.58 421.85Z" fill="none" stroke="#ffffff" stroke-width="3.70"/>
<path d="M1867.88 441.00L1878.88 425.30" stroke="#ffffff" stroke-width="3.8"/>
<rect x="1889.96" y="439.40" width="5.7" height="6.2" fill="#ffffff"/>
<rect x="1971.88" y="439.40" width="5.7" height="6.2" fill="#ffffff"/>
<path d="M1504.94 461.85C1509.10 461.85 1511.54 466.14 1511.54 473.45C1511.54 480.76 1509.10 485.05 1504.94 485.05C1500.78 485.05 1498.34 480.76 1498.34 473.45C1498.34 466.14 1500.78 461.85 1504.94 461.85Z" fill="none" stroke="#4682b4" stroke-width="3.70"/>
<path d="M1499.24 481.00L1510.24 465.30" stroke="#4682b4" stroke-width="3.8"/>
<rect x="1541.80" y="479.40" width="5.7" height="6.2" fill="#808080"/>
<rect x="1562.28" y="479.40" width="5.7" height="6.2" fill="#808080"/>
<rect x="1582.76" y="479.40" width="5.7" height="6.2" fill="#808080"/>
<rect x="1603.24" y="479.40" width="5.7" height="6.2" fill="#808080"/>
<rect x="1623.72" y="479.40" width="5.7" height="6.2" fill="#808080"/>
<rect x="1644.20" y="479.40" width="5.7" height="6.2" fill="#808080"/>
<rect x="1664.68" y="479.40" width="5.7" height="6.2" fill="#808080"/>
<rect x="1685.16" y="479.40" width="5.7" height="6.2" fill="#808080"/>
<rect x="1705.64" y="479.40" width="5.7" height="6.2" fill="#808080"/>
<rect x="1726.12" y="479.40" width="5.7" height="6.2" fill="#808080"/>
<path d="M1771.18 461.85C1775.34 461.85 1777.78 466.14 1777.78 473.45C1777.78 480.76 1775.34 485.05 1771.18 485.05C1767.02 485.05 1764.58 480.76 1764.58 473.45C1764.58 466.14 1767.02 461.85 1771.18 461.85Z" fill="none" stroke="#4682b4" stroke-width="3.70"/>
<path d="M1765.48 481.00L1776.48 465.30" stroke="#4682b4" stroke-width="3.8"/>
<path d="M1791.66 461.85C1795.82 461.85 1798.26 466.14 1798.26 473.45C1798.26 480.76 1795.82 485.05 1791.66 485.05C1787.50 485.05 1785.06 480.76 1785.06 473.45C1785.06 466.14 1787.50 461.85 1791.66 461.85Z" fill="none" stroke="#4682b4" stroke-width="3.70"/>
<path d="M1785.96 481.00L1796.96 465.30" stroke="#4682b4" stroke-width="3.8"/>
<path d="M1873.58 461.85C1877.74 461.85 1880.18 466.14 1880.18 473.45C1880.18 480.76 1877.74 485.05 1873.58 485.05C1869.42 485.05 1866.98 480.76 1866.98 473.45C1866.98 466.14 1869.42 461.85 1873.58 461.85Z" fill="none" stroke="#ffffff" stroke-width="3.70"/>
<path d="M1867.88 481.00L1878.88 465.30" stroke="#ffffff" stroke-width="3.8"/>
<rect x="1889.96" y="479.40" width="5.7" height="6.2" fill="#ffffff"/>
<rect x="1971.88" y="479.40" width="5.7" height="6.2" fill="#ffffff"/>
<path d="M1504.94 501.85C1509.10 501.85 1511.54 506.14 1511.54 513.45C1511.54 520.76 1509.10 525.05 1504.94 525.05C1500.78 525.05 1498.34 520.76 1498.34 513.45C1498.34 506.14 1500.78 501.85 1504.94 501.85Z" fill="none" stroke="#4682b4" stroke-width="3.70"/>
<path d="M1499.24 521.00L1510.24 505.30" stroke="#4682b4" stroke-width="3.8"/>
<rect x="1541.80" y="519.40" width="5.7" height="6.2" fill="#808080"/>
<rect x="1562.28" y="519.40" width="5.7" height="6.2" fill="#808080"/>
<rect x="1582.76" y="519.40" width="5.7" height="6.2" fill="#808080"/>
<rect x="1603.24" y="519.40" width="5.7" height="6.2" fill="#808080"/>
<rect x="1623.72" y="519.40" width="5.7" height="6.2" fill="#808080"/>
<rect x="1644.20" y="519.40" width="5.7" height="6.2" fill="#808080"/>
<rect x="1664.68" y="519.40" width="5.7" height="6.2" fill="#808080"/>
<rect x="1685.16" y="519.40" width="5.7" height="6.2" fill="#808080"/>
<rect x="1705.64" y="519.40" width="5.7" height="6.2" fill="#808080"/>
<rect x="1726.12" y="519.40" width="5.7" height="6.2" fill="#808080"/>
<path d="M1771.18 501.85C1775.34 501.85 1777.78 506.14 1777.78 513.45C1777.78 520.76 1775.34 525.05 1771.18 525.05C1767.02 525.05 1764.58 520.76 1764.58 513.45C1764.58 506.14 1767.02 501.85 1771.18 501.85Z" fill="none" stroke="#4682b4" stroke-width="3.70"/>
<path d="M1765.48 521.00L1776.48 505.30" stroke="#4682b4" stroke-width="3.8"/>
<path d="M1791.66 501.85C1795.82 501.85 1798.26 506.14 1798.26 513.45C1798.26 520.76 1795.82 525.05 1791.66 525.05C1787.50 525.05 1785.06 520.76 1785.06 513.45C1785.06 506.14 1787.50 501.85 1791.66 501.85Z" fill="none" stroke="#4682b4" stroke-width="3.70"/>
<path d="M1785.96 521.00L1796.96 505.30" stroke="#4682b4" stroke-width="3.8"/>
<rect x="1889.96" y="519.40" width="5.7" height="6.2" fill="#ffffff"/>
<rect x="1971.88" y="519.40" width="5.7" height="6.2" fill="#ffffff"/>
<path d="M1504.94 541.85C1509.10 541.85 1511.54 546.14 1511.54 553.45C1511.54 560.76 1509.10 565.05 1504.94 565.05C1500.78 565.05 1498.34 560.76 1498.34 553.45C1498.34 546.14 1500.78 541.85 1504.94 541.85Z" fill="none" stroke="#4682b4" stroke-width="3.70"/>
<path d="M1499.24 561.00L1510.24 545.30" stroke="#4682b4" stroke-width="3.8"/>
<rect x="1541.80" y="559.40" width="5.7" height="6.2" fill="#808080"/>
<rect x="1562.28" y="559.40" width="5.7" height="6.2" fill="#808080"/>
<rect x="1582.76" y="559.40" width="5.7" height="6.2" fill="#808080"/>
<rect x="1603.24" y="559.40" width="5.7" height="6.2" fill="#808080"/>
<rect x="1623.72" y="559.40" width="5.7" height="6.2" fill="#808080"/>
<rect x="1644.20" y="559.40" width="5.7" height="6.2" fill="#808080"/>
<rect x="1664.68" y="559.40" width="5.7" height="6.2" fill="#808080"/>
<rect x="1685.16" y="559.40" width="5.7" height="6.2" fill="#808080"/>
<rect x="1705.64" y="559.40" width="5.7" height="6.2" fill="#808080"/>
<rect x="1726.12" y="559.40" width="5.7" height="6.2" fill="#808080"/>
<path d="M1771.18 541.85C1775.34 541.85 1777.78 546.14 1777.78 553.45C1777.78 560.76 1775.34 565.05 1771.18 565.05C1767.02 565.05 1764.58 560.76 1764.58 553.45C1764.58 546.14 1767.02 541.85 1771.18 541.85Z" fill="none" stroke="#4682b4" stroke-width="3.70"/>
<path d="M1765.48 561.00L1776.48 545.30" stroke="#4682b4" stroke-width="3.8"/>
<path d="M1791.66 541.85C1795.82 541.85 1798.26 546.14 1798.26 553.45C1798.26 560.76 1795.82 565.05 1791.66 565.05C1787.50 565.05 1785.06 560.76 1785.06 553.45C1785.06 546.14 1787.50 541.85 1791.66 541.85Z" fill="none" stroke="#4682b4" stroke-width="3.70"/>
<path d="M1785.96 561.00L1796.96 545.30" stroke="#4682b4" stroke-width="3.8"/>
<rect x="1889.96" y="559.40" width="5.7" height="6.2" fill="#ffffff"/>
<rect x="1971.88" y="559.40" width="5.7" height="6.2" fill="#ffffff"/>
<path d="M1504.94 581.85C1509.10 581.85 1511.54 586.14 1511.54 593.45C1511.54 600.76 1509.10 605.05 1504.94 605.05C1500.78 605.05 1498.34 600.76 1498.34 593.45C1498.34 586.14 1500.78 581.85 1504.94 581.85Z" fill="none" stroke="#4682b4" stroke-width="3.70"/>
<path d="M1499.24 601.00L1510.24 585.30" stroke="#4682b4" stroke-width="3.8"/>
<rect x="1541.80" y="599.40" width="5.7" height="6.2" fill="#808080"/>
<rect x="1562.28" y="599.40" width="5.7" height="6.2" fill="#808080"/>
<rect x="1582.76" y="599.40" width="5.7" height="6.2" fill="#808080"/>
<rect x="1603.24" y="599.40" width="5.7" height="6.2" fill="#808080"/>
<rect x="1623.72" y="599.40" width="5.7" height="6.2" fill="#808080"/>
<rect x="1644.20" y="599.40" width="5.7" height="6.2" fill="#808080"/>
<rect x="1664.68" y="599.40" width="5.7" height="6.2" fill="#808080"/>
<rect x="1685.16" y="599.40" width="5.7" height="6.2" fill="#808080"/>
<rect x="1705.64" y="599.40" width="5.7" height="6.2" fill="#808080"/>
<rect x="1726.12" y="599.40" width="5.7" height="6.2" fill="#808080"/>
<rect x="1889.96" y="599.40" width="5.7" height="6.2" fill="#ffffff"/>
<rect x="2053.80" y="599.40" width="5.7" height="6.2" fill="#ffffff"/>
<rect x="2258.60" y="599.40" width="5.7" height="6.2" fill="#4682b4"/>
<path d="M1504.94 621.85C1509.10 621.85 1511.54 626.14 1511.54 633.45C1511.54 640.76 1509.10 645.05 1504.94 645.05C1500.78 645.05 1498.34 640.76 1498.34 633.45C1498.34 626.14 1500.78 621.85 1504.94 621.85Z" fill="none" stroke="#4682b4" stroke-width="3.70"/>
<path d="M1499.24 641.00L1510.24 625.30" stroke="#4682b4" stroke-width="3.8"/>
<rect x="1541.80" y="639.40" width="5.7" height="6.2" fill="#808080"/>
<rect x="1562.28" y="639.40" width="5.7" height="6.2" fill="#808080"/>
<rect x="1582.76" y="639.40" width="5.7" height="6.2" fill="#808080"/>
<rect x="1603.24" y="639.40" width="5.7" height="6.2" fill="#808080"/>
<rect x="1623.72" y="639.40" width="5.7" height="6.2" fill="#808080"/>
<rect x="1644.20" y="639.40" width="5.7" height="6.2" fill="#808080"/>
<rect x="1664.68" y="639.40" width="5.7" height="6.2" fill="#808080"/>
<rect x="1685.16" y="639.40" width="5.7" height="6.2" fill="#808080"/>
<rect x="1705.64" y="639.40" width="5.7" height="6.2" fill="#808080"/>
<rect x="1726.12" y="639.40" width="5.7" height="6.2" fill="#808080"/>
<path d="M1771.18 621.85C1775.34 621.85 1777.78 626.14 1777.78 633.45C1777.78 640.76 1775.34 645.05 1771.18 645.05C1767.02 645.05 1764.58 640.76 1764.58 633.45C1764.58 626.14 1767.02 621.85 1771.18 621.85Z" fill="none" stroke="#4682b4" stroke-width="3.70"/>
<path d="M1765.48 641.00L1776.48 625.30" stroke="#4682b4" stroke-width="3.8"/>
<path d="M1791.66 621.85C1795.82 621.85 1798.26 626.14 1798.26 633.45C1798.26 640.76 1795.82 645.05 1791.66 645.05C1787.50 645.05 1785.06 640.76 1785.06 633.45C1785.06 626.14 1787.50 621.85 1791.66 621.85Z" fill="none" stroke="#4682b4" stroke-width="3.70"/>
<path d="M1785.96 641.00L1796.96 625.30" stroke="#4682b4" stroke-width="3.8"/>
<rect x="1889.96" y="639.40" width="5.7" height="6.2" fill="#ffffff"/>
<rect x="1971.88" y="639.40" width="5.7" height="6.2" fill="#ffffff"/>
<path d="M1504.94 661.85C1509.10 661.85 1511.54 666.14 1511.54 673.45C1511.54 680.76 1509.10 685.05 1504.94 685.05C1500.78 685.05 1498.34 680.76 1498.34 673.45C1498.34 666.14 1500.78 661.85 1504.94 661.85Z" fill="none" stroke="#4682b4" stroke-width="3.70"/>
<path d="M1499.24 681.00L1510.24 665.30" stroke="#4682b4" stroke-width="3.8"/>
<rect x="1541.80" y="679.40" width="5.7" height="6.2" fill="#808080"/>
<rect x="1562.28" y="679.40" width="5.7" height="6.2" fill="#808080"/>
<rect x="1582.76" y="679.40" width="5.7" height="6.2" fill="#808080"/>
<rect x="1603.24" y="679.40" width="5.7" height="6.2" fill="#808080"/>
<rect x="1623.72" y="679.40" width="5.7" height="6.2" fill="#808080"/>
<rect x="1644.20" y="679.40" width="5.7" height="6.2" fill="#808080"/>
<rect x="1664.68" y="679.40" width="5.7" height="6.2" fill="#808080"/>
<rect x="1685.16" y="679.40" width="5.7" height="6.2" fill="#808080"/>
<rect x="1705.64" y="679.40" width="5.7" height="6.2" fill="#808080"/>
<rect x="1726.12" y="679.40" width="5.7" height="6.2" fill="#808080"/>
<path d="M1771.18 661.85C1775.34 661.85 1777.78 666.14 1777.78 673.45C1777.78 680.76 1775.34 685.05 1771.18 685.05C1767.02 685.05 1764.58 680.76 1764.58 673.45C1764.58 666.14 1767.02 661.85 1771.18 661.85Z" fill="none" stroke="#4682b4" stroke-width="3.70"/>
<path d="M1765.48 681.00L1776.48 665.30" stroke="#4682b4" stroke-width="3.8"/>
<path d="M1791.66 661.85C1795.82 661.85 1798.26 666.14 1798.26 673.45C1798.26 680.76 1795.82 685.05 1791.66 685.05C1787.50 685.05 1785.06 680.76 1785.06 673.45C1785.06 666.14 1787.50 661.85 1791.66 661.85Z" fill="none" stroke="#4682b4" stroke-width="3.70"/>
<path d="M1785.96 681.00L1796.96 665.30" stroke="#4682b4" stroke-width="3.8"/>
<rect x="1889.96" y="679.40" width="5.7" height="6.2" fill="#ffffff"/>
<rect x="1971.88" y="679.40" width="5.7" height="6.2" fill="#ffffff"/>
<path d="M1504.94 701.85C1509.10 701.85 1511.54 706.14 1511.54 713.45C1511.54 720.76 1509.10 725.05 1504.94 725.05C1500.78 725.05 1498.34 720.76 1498.34 713.45C1498.34 706.14 1500.78 701.85 1504.94 701.85Z" fill="none" stroke="#4682b4" stroke-width="3.70"/>
<path d="M1499.24 721.00L1510.24 705.30" stroke="#4682b4" stroke-width="3.8"/>
<rect x="1541.80" y="719.40" width="5.7" height="6.2" fill="#808080"/>
<rect x="1562.28" y="719.40" width="5.7" height="6.2" fill="#808080"/>
<rect x="1582.76" y="719.40" width="5.7" height="6.2" fill="#808080"/>
<rect x="1603.24" y="719.40" width="5.7" height="6.2" fill="#808080"/>
<rect x="1623.72" y="719.40" width="5.7" height="6.2" fill="#808080"/>
<rect x="1644.20" y="719.40" width="5.7" height="6.2" fill="#808080"/>
<rect x="1664.68" y="719.40" width="5.7" height="6.2" fill="#808080"/>
<rect x="1685.16" y="719.40" width="5.7" height="6.2" fill="#808080"/>
<rect x="1705.64" y="719.40" width="5.7" height="6.2" fill="#808080"/>
<rect x="1726.12" y="719.40" width="5.7" height="6.2" fill="#808080"/>
<path d="M1771.18 701.85C1775.34 701.85 1777.78 706.14 1777.78 713.45C1777.78 720.76 1775.34 725.05 1771.18 725.05C1767.02 725.05 1764.58 720.76 1764.58 713.45C1764.58 706.14 1767.02 701.85 1771.18 701.85Z" fill="none" stroke="#4682b4" stroke-width="3.70"/>
<path d="M1765.48 721.00L1776.48 705.30" stroke="#4682b4" stroke-width="3.8"/>
<path d="M1791.66 701.85C1795.82 701.85 1798.26 706.14 1798.26 713.45C1798.26 720.76 1795.82 725.05 1791.66 725.05C1787.50 725.05 1785.06 720.76 1785.06 713.45C1785.06 706.14 1787.50 701.85 1791.66 701.85Z" fill="none" stroke="#4682b4" stroke-width="3.70"/>
<path d="M1785.96 721.00L1796.96 705.30" stroke="#4682b4" stroke-width="3.8"/>
<rect x="1889.96" y="719.40" width="5.7" height="6.2" fill="#ffffff"/>
<rect x="1971.88" y="719.40" width="5.7" height="6.2" fill="#ffffff"/>
<path d="M1504.94 741.85C1509.10 741.85 1511.54 746.14 1511.54 753.45C1511.54 760.76 1509.10 765.05 1504.94 765.05C1500.78 765.05 1498.34 760.76 1498.34 753.45C1498.34 746.14 1500.78 741.85 1504.94 741.85Z" fill="none" stroke="#4682b4" stroke-width="3.70"/>
<path d="M1499.24 761.00L1510.24 745.30" stroke="#4682b4" stroke-width="3.8"/>
<rect x="1541.80" y="759.40" width="5.7" height="6.2" fill="#808080"/>
<rect x="1562.28" y="759.40" width="5.7" height="6.2" fill="#808080"/>
<rect x="1582.76" y="759.40" width="5.7" height="6.2" fill="#808080"/>
<rect x="1603.24" y="759.40" width="5.7" height="6.2" fill="#808080"/>
<rect x="1623.72" y="759.40" width="5.7" height="6.2" fill="#808080"/>
<rect x="1644.20" y="759.40" width="5.7" height="6.2" fill="#808080"/>
<rect x="1664.68" y="759.40" width="5.7" height="6.2" fill="#808080"/>
<rect x="1685.16" y="759.40" width="5.7" height="6.2" fill="#808080"/>
<rect x="1705.64" y="759.40" width="5.7" height="6.2" fill="#808080"/>
<rect x="1726.12" y="759.40" width="5.7" height="6.2" fill="#808080"/>
<path d="M1771.18 741.85C1775.34 741.85 1777.78 746.14 1777.78 753.45C1777.78 760.76 1775.34 765.05 1771.18 765.05C1767.02 765.05 1764.58 760.76 1764.58 753.45C1764.58 746.14 1767.02 741.85 1771.18 741.85Z" fill="none" stroke="#4682b4" stroke-width="3.70"/>
<path d="M1765.48 761.00L1776.48 745.30" stroke="#4682b4" stroke-width="3.8"/>
<path d="M1791.66 741.85C1795.82 741.85 1798.26 746.14 1798.26 753.45C1798.26 760.76 1795.82 765.05 1791.66 765.05C1787.50 765.05 1785.06 760.76 1785.06 753.45C1785.06 746.14 1787.50 741.85 1791.66 741.85Z" fill="none" stroke="#4682b4" stroke-width="3.70"/>
<path d="M1785.96 761.00L1796.96 745.30" stroke="#4682b4" stroke-width="3.8"/>
<rect x="1889.96" y="759.40" width="5.7" height="6.2" fill="#ffffff"/>
<rect x="1971.88" y="759.40" width="5.7" height="6.2" fill="#ffffff"/>
<path d="M1504.94 781.85C1509.10 781.85 1511.54 786.14 1511.54 793.45C1511.54 800.76 1509.10 805.05 1504.94 805.05C1500.78 805.05 1498.34 800.76 1498.34 793.45C1498.34 786.14 1500.78 781.85 1504.94 781.85Z" fill="none" stroke="#4682b4" stroke-width="3.70"/>
<path d="M1499.24 801.00L1510.24 785.30" stroke="#4682b4" stroke-width="3.8"/>
<rect x="1541.80" y="799.40" width="5.7" height="6.2" fill="#808080"/>
<rect x="1562.28" y="799.40" width="5.7" height="6.2" fill="#808080"/>
<rect x="1582.76" y="799.40" width="5.7" height="6.2" fill="#808080"/>
<rect x="1603.24" y="799.40" width="5.7" height="6.2" fill="#808080"/>
<rect x="1623.72" y="799.40" width="5.7" height="6.2" fill="#808080"/>
<rect x="1644.20" y="799.40" width="5.7" height="6.2" fill="#808080"/>
<rect x="1664.68" y="799.40" width="5.7" height="6.2" fill="#808080"/>
<rect x="1685.16" y="799.40" width="5.7" height="6.2" fill="#808080"/>
<rect x="1705.64" y="799.40" width="5.7" height="6.2" fill="#808080"/>
<rect x="1726.12" y="799.40" width="5.7" height="6.2" fill="#808080"/>
<path d="M1791.66 781.85C1795.82 781.85 1798.26 786.14 1798.26 793.45C1798.26 800.76 1795.82 805.05 1791.66 805.05C1787.50 805.05 1785.06 800.76 1785.06 793.45C1785.06 786.14 1787.50 781.85 1791.66 781.85Z" fill="none" stroke="#4682b4" stroke-width="3.70"/>
<path d="M1785.96 801.00L1796.96 785.30" stroke="#4682b4" stroke-width="3.8"/>
<rect x="1889.96" y="799.40" width="5.7" height="6.2" fill="#ffffff"/>
<rect x="1971.88" y="799.40" width="5.7" height="6.2" fill="#ffffff"/>
<path d="M1423.02 821.85C1427.18 821.85 1429.62 826.14 1429.62 833.45C1429.62 840.76 1427.18 845.05 1423.02 845.05C1418.86 845.05 1416.42 840.76 1416.42 833.45C1416.42 826.14 1418.86 821.85 1423.02 821.85Z" fill="none" stroke="#808080" stroke-width="3.70"/>
<path d="M1417.32 841.00L1428.32 825.30" stroke="#808080" stroke-width="3.8"/>
<path d="M1504.94 861.85C1509.10 861.85 1511.54 866.14 1511.54 873.45C1511.54 880.76 1509.10 885.05 1504.94 885.05C1500.78 885.05 1498.34 880.76 1498.34 873.45C1498.34 866.14 1500.78 861.85 1504.94 861.85Z" fill="none" stroke="#4682b4" stroke-width="3.70"/>
<path d="M1499.24 881.00L1510.24 865.30" stroke="#4682b4" stroke-width="3.8"/>
<rect x="1541.80" y="879.40" width="5.7" height="6.2" fill="#808080"/>
<rect x="1562.28" y="879.40" width="5.7" height="6.2" fill="#808080"/>
<rect x="1582.76" y="879.40" width="5.7" height="6.2" fill="#808080"/>
<rect x="1603.24" y="879.40" width="5.7" height="6.2" fill="#808080"/>
<rect x="1623.72" y="879.40" width="5.7" height="6.2" fill="#808080"/>
<rect x="1644.20" y="879.40" width="5.7" height="6.2" fill="#808080"/>
<rect x="1664.68" y="879.40" width="5.7" height="6.2" fill="#808080"/>
<rect x="1685.16" y="879.40" width="5.7" height="6.2" fill="#808080"/>
<rect x="1705.64" y="879.40" width="5.7" height="6.2" fill="#808080"/>
<rect x="1726.12" y="879.40" width="5.7" height="6.2" fill="#808080"/>
<path d="M1771.18 861.85C1775.34 861.85 1777.78 866.14 1777.78 873.45C1777.78 880.76 1775.34 885.05 1771.18 885.05C1767.02 885.05 1764.58 880.76 1764.58 873.45C1764.58 866.14 1767.02 861.85 1771.18 861.85Z" fill="none" stroke="#4682b4" stroke-width="3.70"/>
<path d="M1765.48 881.00L1776.48 865.30" stroke="#4682b4" stroke-width="3.8"/>
<path d="M1791.66 861.85C1795.82 861.85 1798.26 866.14 1798.26 873.45C1798.26 880.76 1795.82 885.05 1791.66 885.05C1787.50 885.05 1785.06 880.76 1785.06 873.45C1785.06 866.14 1787.50 861.85 1791.66 861.85Z" fill="none" stroke="#4682b4" stroke-width="3.70"/>
<path d="M1785.96 881.00L1796.96 865.30" stroke="#4682b4" stroke-width="3.8"/>
<rect x="1889.96" y="879.40" width="5.7" height="6.2" fill="#ffffff"/>
<rect x="1971.88" y="879.40" width="5.7" height="6.2" fill="#ffffff"/>
<path d="M1504.94 901.85C1509.10 901.85 1511.54 906.14 1511.54 913.45C1511.54 920.76 1509.10 925.05 1504.94 925.05C1500.78 925.05 1498.34 920.76 1498.34 913.45C1498.34 906.14 1500.78 901.85 1504.94 901.85Z" fill="none" stroke="#4682b4" stroke-width="3.70"/>
<path d="M1499.24 921.00L1510.24 905.30" stroke="#4682b4" stroke-width="3.8"/>
<rect x="1541.80" y="919.40" width="5.7" height="6.2" fill="#808080"/>
<rect x="1562.28" y="919.40" width="5.7" height="6.2" fill="#808080"/>
<rect x="1582.76" y="919.40" width="5.7" height="6.2" fill="#808080"/>
<rect x="1603.24" y="919.40" width="5.7" height="6.2" fill="#808080"/>
<rect x="1623.72" y="919.40" width="5.7" height="6.2" fill="#808080"/>
<rect x="1644.20" y="919.40" width="5.7" height="6.2" fill="#808080"/>
<rect x="1664.68" y="919.40" width="5.7" height="6.2" fill="#808080"/>
<rect x="1685.16" y="919.40" width="5.7" height="6.2" fill="#808080"/>
<rect x="1705.64" y="919.40" width="5.7" height="6.2" fill="#808080"/>
<rect x="1726.12" y="919.40" width="5.7" height="6.2" fill="#808080"/>
<path d="M1771.18 901.85C1775.34 901.85 1777.78 906.14 1777.78 913.45C1777.78 920.76 1775.34 925.05 1771.18 925.05C1767.02 925.05 1764.58 920.76 1764.58 913.45C1764.58 906.14 1767.02 901.85 1771.18 901.85Z" fill="none" stroke="#4682b4" stroke-width="3.70"/>
<path d="M1765.48 921.00L1776.48 905.30" stroke="#4682b4" stroke-width="3.8"/>
<path d="M1791.66 901.85C1795.82 901.85 1798.26 906.14 1798.26 913.45C1798.26 920.76 1795.82 925.05 1791.66 925.05C1787.50 925.05 1785.06 920.76 1785.06 913.45C1785.06 906.14 1787.50 901.85 1791.66 901.85Z" fill="none" stroke="#4682b4" stroke-width="3.70"/>
<path d="M1785.96 921.00L1796.96 905.30" stroke="#4682b4" stroke-width="3.8"/>
<rect x="1889.96" y="919.40" width="5.7" height="6.2" fill="#ffffff"/>
<rect x="1971.88" y="919.40" width="5.7" height="6.2" fill="#ffffff"/>
<path d="M1504.94 941.85C1509.10 941.85 1511.54 946.14 1511.54 953.45C1511.54 960.76 1509.10 965.05 1504.94 965.05C1500.78 965.05 1498.34 960.76 1498.34 953.45C1498.34 946.14 1500.78 941.85 1504.94 941.85Z" fill="none" stroke="#4682b4" stroke-width="3.70"/>
<path d="M1499.24 961.00L1510.24 945.30" stroke="#4682b4" stroke-width="3.8"/>
<rect x="1541.80" y="959.40" width="5.7" height="6.2" fill="#808080"/>
<rect x="1562.28" y="959.40" width="5.7" height="6.2" fill="#808080"/>
<rect x="1582.76" y="959.40" width="5.7" height="6.2" fill="#808080"/>
<rect x="1603.24" y="959.40" width="5.7" height="6.2" fill="#808080"/>
<rect x="1623.72" y="959.40" width="5.7" height="6.2" fill="#808080"/>
<rect x="1644.20" y="959.40" width="5.7" height="6.2" fill="#808080"/>
<rect x="1664.68" y="959.40" width="5.7" height="6.2" fill="#808080"/>
<rect x="1685.16" y="959.40" width="5.7" height="6.2" fill="#808080"/>
<rect x="1705.64" y="959.40" width="5.7" height="6.2" fill="#808080"/>
<rect x="1726.12" y="959.40" width="5.7" height="6.2" fill="#808080"/>
<rect x="1889.96" y="959.40" width="5.7" height="6.2" fill="#ffffff"/>
<rect x="1951.40" y="959.40" width="5.7" height="6.2" fill="#ffffff"/>
<path d="M1504.94 981.85C1509.10 981.85 1511.54 986.14 1511.54 993.45C1511.54 1000.76 1509.10 1005.05 1504.94 1005.05C1500.78 1005.05 1498.34 1000.76 1498.34 993.45C1498.34 986.14 1500.78 981.85 1504.94 981.85Z" fill="none" stroke="#4682b4" stroke-width="3.70"/>
<path d="M1499.24 1001.00L1510.24 985.30" stroke="#4682b4" stroke-width="3.8"/>
<rect x="1541.80" y="999.40" width="5.7" height="6.2" fill="#808080"/>
<rect x="1562.28" y="999.40" width="5.7" height="6.2" fill="#808080"/>
<rect x="1582.76" y="999.40" width="5.7" height="6.2" fill="#808080"/>
<rect x="1603.24" y="999.40" width="5.7" height="6.2" fill="#808080"/>
<rect x="1623.72" y="999.40" width="5.7" height="6.2" fill="#808080"/>
<rect x="1644.20" y="999.40" width="5.7" height="6.2" fill="#808080"/>
<rect x="1664.68" y="999.40" width="5.7" height="6.2" fill="#808080"/>
<rect x="1685.16" y="999.40" width="5.7" height="6.2" fill="#808080"/>
<rect x="1705.64" y="999.40" width="5.7" height="6.2" fill="#808080"/>
<rect x="1726.12" y="999.40" width="5.7" height="6.2" fill="#808080"/>
<path d="M1771.18 981.85C1775.34 981.85 1777.78 986.14 1777.78 993.45C1777.78 1000.76 1775.34 1005.05 1771.18 1005.05C1767.02 1005.05 1764.58 1000.76 1764.58 993.45C1764.58 986.14 1767.02 981.85 1771.18 981.85Z" fill="none" stroke="#4682b4" stroke-width="3.70"/>
<path d="M1765.48 1001.00L1776.48 985.30" stroke="#4682b4" stroke-width="3.8"/>
<path d="M1791.66 981.85C1795.82 981.85 1798.26 986.14 1798.26 993.45C1798.26 1000.76 1795.82 1005.05 1791.66 1005.05C1787.50 1005.05 1785.06 1000.76 1785.06 993.45C1785.06 986.14 1787.50 981.85 1791.66 981.85Z" fill="none" stroke="#4682b4" stroke-width="3.70"/>
<path d="M1785.96 1001.00L1796.96 985.30" stroke="#4682b4" stroke-width="3.8"/>
<rect x="1889.96" y="999.40" width="5.7" height="6.2" fill="#ffffff"/>
<rect x="1951.40" y="999.40" width="5.7" height="6.2" fill="#ffffff"/>
<rect x="1889.96" y="1039.40" width="5.7" height="6.2" fill="#ffffff"/>
<rect x="1971.88" y="1039.40" width="5.7" height="6.2" fill="#ffffff"/>
<path d="M1423.02 1061.85C1427.18 1061.85 1429.62 1066.14 1429.62 1073.45C1429.62 1080.76 1427.18 1085.05 1423.02 1085.05C1418.86 1085.05 1416.42 1080.76 1416.42 1073.45C1416.42 1066.14 1418.86 1061.85 1423.02 1061.85Z" fill="none" stroke="#4682b4" stroke-width="3.70"/>
<path d="M1417.32 1081.00L1428.32 1065.30" stroke="#4682b4" stroke-width="3.8"/>
<path d="M1504.94 1061.85C1509.10 1061.85 1511.54 1066.14 1511.54 1073.45C1511.54 1080.76 1509.10 1085.05 1504.94 1085.05C1500.78 1085.05 1498.34 1080.76 1498.34 1073.45C1498.34 1066.14 1500.78 1061.85 1504.94 1061.85Z" fill="none" stroke="#4682b4" stroke-width="3.70"/>
<path d="M1499.24 1081.00L1510.24 1065.30" stroke="#4682b4" stroke-width="3.8"/>
<rect x="1541.80" y="1079.40" width="5.7" height="6.2" fill="#808080"/>
<rect x="1562.28" y="1079.40" width="5.7" height="6.2" fill="#808080"/>
<rect x="1582.76" y="1079.40" width="5.7" height="6.2" fill="#808080"/>
<rect x="1603.24" y="1079.40" width="5.7" height="6.2" fill="#808080"/>
<rect x="1623.72" y="1079.40" width="5.7" height="6.2" fill="#808080"/>
<rect x="1644.20" y="1079.40" width="5.7" height="6.2" fill="#808080"/>
<rect x="1664.68" y="1079.40" width="5.7" height="6.2" fill="#808080"/>
<rect x="1685.16" y="1079.40" width="5.7" height="6.2" fill="#808080"/>
<rect x="1705.64" y="1079.40" width="5.7" height="6.2" fill="#808080"/>
<rect x="1726.12" y="1079.40" width="5.7" height="6.2" fill="#808080"/>
<path d="M1771.18 1061.85C1775.34 1061.85 1777.78 1066.14 1777.78 1073.45C1777.78 1080.76 1775.34 1085.05 1771.18 1085.05C1767.02 1085.05 1764.58 1080.76 1764.58 1073.45C1764.58 1066.14 1767.02 1061.85 1771.18 1061.85Z" fill="none" stroke="#4682b4" stroke-width="3.70"/>
<path d="M1765.48 1081.00L1776.48 1065.30" stroke="#4682b4" stroke-width="3.8"/>
<path d="M1791.66 1061.85C1795.82 1061.85 1798.26 1066.14 1798.26 1073.45C1798.26 1080.76 1795.82 1085.05 1791.66 1085.05C1787.50 1085.05 1785.06 1080.76 1785.06 1073.45C1785.06 1066.14 1787.50 1061.85 1791.66 1061.85Z" fill="none" stroke="#4682b4" stroke-width="3.70"/>
<path d="M1785.96 1081.00L1796.96 1065.30" stroke="#4682b4" stroke-width="3.8"/>
<rect x="1889.96" y="1079.40" width="5.7" height="6.2" fill="#ffffff"/>
<rect x="1992.36" y="1079.40" width="5.7" height="6.2" fill="#ffffff"/>
<path d="M1504.94 1101.85C1509.10 1101.85 1511.54 1106.14 1511.54 1113.45C1511.54 1120.76 1509.10 1125.05 1504.94 1125.05C1500.78 1125.05 1498.34 1120.76 1498.34 1113.45C1498.34 1106.14 1500.78 1101.85 1504.94 1101.85Z" fill="none" stroke="#4682b4" stroke-width="3.70"/>
<path d="M1499.24 1121.00L1510.24 1105.30" stroke="#4682b4" stroke-width="3.8"/>
<rect x="1541.80" y="1119.40" width="5.7" height="6.2" fill="#808080"/>
<rect x="1562.28" y="1119.40" width="5.7" height="6.2" fill="#808080"/>
<rect x="1582.76" y="1119.40" width="5.7" height="6.2" fill="#808080"/>
<rect x="1603.24" y="1119.40" width="5.7" height="6.2" fill="#808080"/>
<rect x="1623.72" y="1119.40" width="5.7" height="6.2" fill="#808080"/>
<rect x="1644.20" y="1119.40" width="5.7" height="6.2" fill="#808080"/>
<rect x="1664.68" y="1119.40" width="5.7" height="6.2" fill="#808080"/>
<rect x="1685.16" y="1119.40" width="5.7" height="6.2" fill="#808080"/>
<rect x="1705.64" y="1119.40" width="5.7" height="6.2" fill="#808080"/>
<rect x="1726.12" y="1119.40" width="5.7" height="6.2" fill="#808080"/>
<path d="M1771.18 1101.85C1775.34 1101.85 1777.78 1106.14 1777.78 1113.45C1777.78 1120.76 1775.34 1125.05 1771.18 1125.05C1767.02 1125.05 1764.58 1120.76 1764.58 1113.45C1764.58 1106.14 1767.02 1101.85 1771.18 1101.85Z" fill="none" stroke="#4682b4" stroke-width="3.70"/>
<path d="M1765.48 1121.00L1776.48 1105.30" stroke="#4682b4" stroke-width="3.8"/>
<path d="M1791.66 1101.85C1795.82 1101.85 1798.26 1106.14 1798.26 1113.45C1798.26 1120.76 1795.82 1125.05 1791.66 1125.05C1787.50 1125.05 1785.06 1120.76 1785.06 1113.45C1785.06 1106.14 1787.50 1101.85 1791.66 1101.85Z" fill="none" stroke="#4682b4" stroke-width="3.70"/>
<path d="M1785.96 1121.00L1796.96 1105.30" stroke="#4682b4" stroke-width="3.8"/>
<rect x="1889.96" y="1119.40" width="5.7" height="6.2" fill="#ffffff"/>
<path d="M1955.50 1101.85C1959.66 1101.85 1962.10 1106.14 1962.10 1113.45C1962.10 1120.76 1959.66 1125.05 1955.50 1125.05C1951.34 1125.05 1948.90 1120.76 1948.90 1113.45C1948.90 1106.14 1951.34 1101.85 1955.50 1101.85Z" fill="none" stroke="#ffffff" stroke-width="3.70"/>
<path d="M1949.80 1121.00L1960.80 1105.30" stroke="#ffffff" stroke-width="3.8"/>
<rect x="1992.36" y="1119.40" width="5.7" height="6.2" fill="#ffffff"/>
<path d="M1504.94 1141.85C1509.10 1141.85 1511.54 1146.14 1511.54 1153.45C1511.54 1160.76 1509.10 1165.05 1504.94 1165.05C1500.78 1165.05 1498.34 1160.76 1498.34 1153.45C1498.34 1146.14 1500.78 1141.85 1504.94 1141.85Z" fill="none" stroke="#4682b4" stroke-width="3.70"/>
<path d="M1499.24 1161.00L1510.24 1145.30" stroke="#4682b4" stroke-width="3.8"/>
<rect x="1541.80" y="1159.40" width="5.7" height="6.2" fill="#808080"/>
<rect x="1562.28" y="1159.40" width="5.7" height="6.2" fill="#808080"/>
<rect x="1582.76" y="1159.40" width="5.7" height="6.2" fill="#808080"/>
<rect x="1603.24" y="1159.40" width="5.7" height="6.2" fill="#808080"/>
<rect x="1623.72" y="1159.40" width="5.7" height="6.2" fill="#808080"/>
<rect x="1644.20" y="1159.40" width="5.7" height="6.2" fill="#808080"/>
<rect x="1664.68" y="1159.40" width="5.7" height="6.2" fill="#808080"/>
<rect x="1685.16" y="1159.40" width="5.7" height="6.2" fill="#808080"/>
<rect x="1705.64" y="1159.40" width="5.7" height="6.2" fill="#808080"/>
<rect x="1726.12" y="1159.40" width="5.7" height="6.2" fill="#808080"/>
<path d="M1771.18 1141.85C1775.34 1141.85 1777.78 1146.14 1777.78 1153.45C1777.78 1160.76 1775.34 1165.05 1771.18 1165.05C1767.02 1165.05 1764.58 1160.76 1764.58 1153.45C1764.58 1146.14 1767.02 1141.85 1771.18 1141.85Z" fill="none" stroke="#4682b4" stroke-width="3.70"/>
<path d="M1765.48 1161.00L1776.48 1145.30" stroke="#4682b4" stroke-width="3.8"/>
<path d="M1791.66 1141.85C1795.82 1141.85 1798.26 1146.14 1798.26 1153.45C1798.26 1160.76 1795.82 1165.05 1791.66 1165.05C1787.50 1165.05 1785.06 1160.76 1785.06 1153.45C1785.06 1146.14 1787.50 1141.85 1791.66 1141.85Z" fill="none" stroke="#4682b4" stroke-width="3.70"/>
<path d="M1785.96 1161.00L1796.96 1145.30" stroke="#4682b4" stroke-width="3.8"/>
<rect x="1889.96" y="1159.40" width="5.7" height="6.2" fill="#ffffff"/>
<rect x="1992.36" y="1159.40" width="5.7" height="6.2" fill="#ffffff"/>
<path d="M1504.94 1181.85C1509.10 1181.85 1511.54 1186.14 1511.54 1193.45C1511.54 1200.76 1509.10 1205.05 1504.94 1205.05C1500.78 1205.05 1498.34 1200.76 1498.34 1193.45C1498.34 1186.14 1500.78 1181.85 1504.94 1181.85Z" fill="none" stroke="#4682b4" stroke-width="3.70"/>
<path d="M1499.24 1201.00L1510.24 1185.30" stroke="#4682b4" stroke-width="3.8"/>
<rect x="1541.80" y="1199.40" width="5.7" height="6.2" fill="#808080"/>
<rect x="1562.28" y="1199.40" width="5.7" height="6.2" fill="#808080"/>
<rect x="1582.76" y="1199.40" width="5.7" height="6.2" fill="#808080"/>
<rect x="1603.24" y="1199.40" width="5.7" height="6.2" fill="#808080"/>
<rect x="1623.72" y="1199.40" width="5.7" height="6.2" fill="#808080"/>
<rect x="1644.20" y="1199.40" width="5.7" height="6.2" fill="#808080"/>
<rect x="1664.68" y="1199.40" width="5.7" height="6.2" fill="#808080"/>
<rect x="1685.16" y="1199.40" width="5.7" height="6.2" fill="#808080"/>
<rect x="1705.64" y="1199.40" width="5.7" height="6.2" fill="#808080"/>
<rect x="1726.12" y="1199.40" width="5.7" height="6.2" fill="#808080"/>
<path d="M1771.18 1181.85C1775.34 1181.85 1777.78 1186.14 1777.78 1193.45C1777.78 1200.76 1775.34 1205.05 1771.18 1205.05C1767.02 1205.05 1764.58 1200.76 1764.58 1193.45C1764.58 1186.14 1767.02 1181.85 1771.18 1181.85Z" fill="none" stroke="#4682b4" stroke-width="3.70"/>
<path d="M1765.48 1201.00L1776.48 1185.30" stroke="#4682b4" stroke-width="3.8"/>
<path d="M1791.66 1181.85C1795.82 1181.85 1798.26 1186.14 1798.26 1193.45C1798.26 1200.76 1795.82 1205.05 1791.66 1205.05C1787.50 1205.05 1785.06 1200.76 1785.06 1193.45C1785.06 1186.14 1787.50 1181.85 1791.66 1181.85Z" fill="none" stroke="#4682b4" stroke-width="3.70"/>
<path d="M1785.96 1201.00L1796.96 1185.30" stroke="#4682b4" stroke-width="3.8"/>
<rect x="1889.96" y="1199.40" width="5.7" height="6.2" fill="#ffffff"/>
<path d="M1975.98 1181.85C1980.14 1181.85 1982.58 1186.14 1982.58 1193.45C1982.58 1200.76 1980.14 1205.05 1975.98 1205.05C1971.82 1205.05 1969.38 1200.76 1969.38 1193.45C1969.38 1186.14 1971.82 1181.85 1975.98 1181.85Z" fill="none" stroke="#ffffff" stroke-width="3.70"/>
<path d="M1970.28 1201.00L1981.28 1185.30" stroke="#ffffff" stroke-width="3.8"/>
<rect x="1992.36" y="1199.40" width="5.7" height="6.2" fill="#ffffff"/>
<path d="M1504.94 1221.85C1509.10 1221.85 1511.54 1226.14 1511.54 1233.45C1511.54 1240.76 1509.10 1245.05 1504.94 1245.05C1500.78 1245.05 1498.34 1240.76 1498.34 1233.45C1498.34 1226.14 1500.78 1221.85 1504.94 1221.85Z" fill="none" stroke="#4682b4" stroke-width="3.70"/>
<path d="M1499.24 1241.00L1510.24 1225.30" stroke="#4682b4" stroke-width="3.8"/>
<rect x="1541.80" y="1239.40" width="5.7" height="6.2" fill="#808080"/>
<rect x="1562.28" y="1239.40" width="5.7" height="6.2" fill="#808080"/>
<rect x="1582.76" y="1239.40" width="5.7" height="6.2" fill="#808080"/>
<rect x="1603.24" y="1239.40" width="5.7" height="6.2" fill="#808080"/>
<rect x="1623.72" y="1239.40" width="5.7" height="6.2" fill="#808080"/>
<rect x="1644.20" y="1239.40" width="5.7" height="6.2" fill="#808080"/>
<rect x="1664.68" y="1239.40" width="5.7" height="6.2" fill="#808080"/>
<rect x="1685.16" y="1239.40" width="5.7" height="6.2" fill="#808080"/>
<rect x="1705.64" y="1239.40" width="5.7" height="6.2" fill="#808080"/>
<rect x="1726.12" y="1239.40" width="5.7" height="6.2" fill="#808080"/>
<path d="M1771.18 1221.85C1775.34 1221.85 1777.78 1226.14 1777.78 1233.45C1777.78 1240.76 1775.34 1245.05 1771.18 1245.05C1767.02 1245.05 1764.58 1240.76 1764.58 1233.45C1764.58 1226.14 1767.02 1221.85 1771.18 1221.85Z" fill="none" stroke="#4682b4" stroke-width="3.70"/>
<path d="M1765.48 1241.00L1776.48 1225.30" stroke="#4682b4" stroke-width="3.8"/>
<path d="M1791.66 1221.85C1795.82 1221.85 1798.26 1226.14 1798.26 1233.45C1798.26 1240.76 1795.82 1245.05 1791.66 1245.05C1787.50 1245.05 1785.06 1240.76 1785.06 1233.45C1785.06 1226.14 1787.50 1221.85 1791.66 1221.85Z" fill="none" stroke="#4682b4" stroke-width="3.70"/>
<path d="M1785.96 1241.00L1796.96 1225.30" stroke="#4682b4" stroke-width="3.8"/>
<rect x="1889.96" y="1239.40" width="5.7" height="6.2" fill="#ffffff"/>
<rect x="2012.84" y="1239.40" width="5.7" height="6.2" fill="#ffffff"/>
<path d="M1504.94 1261.85C1509.10 1261.85 1511.54 1266.14 1511.54 1273.45C1511.54 1280.76 1509.10 1285.05 1504.94 1285.05C1500.78 1285.05 1498.34 1280.76 1498.34 1273.45C1498.34 1266.14 1500.78 1261.85 1504.94 1261.85Z" fill="none" stroke="#4682b4" stroke-width="3.70"/>
<path d="M1499.24 1281.00L1510.24 1265.30" stroke="#4682b4" stroke-width="3.8"/>
<rect x="1541.80" y="1279.40" width="5.7" height="6.2" fill="#808080"/>
<rect x="1562.28" y="1279.40" width="5.7" height="6.2" fill="#808080"/>
<rect x="1582.76" y="1279.40" width="5.7" height="6.2" fill="#808080"/>
<rect x="1603.24" y="1279.40" width="5.7" height="6.2" fill="#808080"/>
<rect x="1623.72" y="1279.40" width="5.7" height="6.2" fill="#808080"/>
<rect x="1644.20" y="1279.40" width="5.7" height="6.2" fill="#808080"/>
<rect x="1664.68" y="1279.40" width="5.7" height="6.2" fill="#808080"/>
<rect x="1685.16" y="1279.40" width="5.7" height="6.2" fill="#808080"/>
<rect x="1705.64" y="1279.40" width="5.7" height="6.2" fill="#808080"/>
<rect x="1726.12" y="1279.40" width="5.7" height="6.2" fill="#808080"/>
<path d="M1771.18 1261.85C1775.34 1261.85 1777.78 1266.14 1777.78 1273.45C1777.78 1280.76 1775.34 1285.05 1771.18 1285.05C1767.02 1285.05 1764.58 1280.76 1764.58 1273.45C1764.58 1266.14 1767.02 1261.85 1771.18 1261.85Z" fill="none" stroke="#4682b4" stroke-width="3.70"/>
<path d="M1765.48 1281.00L1776.48 1265.30" stroke="#4682b4" stroke-width="3.8"/>
<path d="M1791.66 1261.85C1795.82 1261.85 1798.26 1266.14 1798.26 1273.45C1798.26 1280.76 1795.82 1285.05 1791.66 1285.05C1787.50 1285.05 1785.06 1280.76 1785.06 1273.45C1785.06 1266.14 1787.50 1261.85 1791.66 1261.85Z" fill="none" stroke="#4682b4" stroke-width="3.70"/>
<path d="M1785.96 1281.00L1796.96 1265.30" stroke="#4682b4" stroke-width="3.8"/>
<rect x="1889.96" y="1279.40" width="5.7" height="6.2" fill="#ffffff"/>
<rect x="2012.84" y="1279.40" width="5.7" height="6.2" fill="#ffffff"/>
<path d="M1504.94 1301.85C1509.10 1301.85 1511.54 1306.14 1511.54 1313.45C1511.54 1320.76 1509.10 1325.05 1504.94 1325.05C1500.78 1325.05 1498.34 1320.76 1498.34 1313.45C1498.34 1306.14 1500.78 1301.85 1504.94 1301.85Z" fill="none" stroke="#4682b4" stroke-width="3.70"/>
<path d="M1499.24 1321.00L1510.24 1305.30" stroke="#4682b4" stroke-width="3.8"/>
<rect x="1541.80" y="1319.40" width="5.7" height="6.2" fill="#808080"/>
<rect x="1562.28" y="1319.40" width="5.7" height="6.2" fill="#808080"/>
<rect x="1582.76" y="1319.40" width="5.7" height="6.2" fill="#808080"/>
<rect x="1603.24" y="1319.40" width="5.7" height="6.2" fill="#808080"/>
<rect x="1623.72" y="1319.40" width="5.7" height="6.2" fill="#808080"/>
<rect x="1644.20" y="1319.40" width="5.7" height="6.2" fill="#808080"/>
<rect x="1664.68" y="1319.40" width="5.7" height="6.2" fill="#808080"/>
<rect x="1685.16" y="1319.40" width="5.7" height="6.2" fill="#808080"/>
<rect x="1705.64" y="1319.40" width="5.7" height="6.2" fill="#808080"/>
<rect x="1726.12" y="1319.40" width="5.7" height="6.2" fill="#808080"/>
<path d="M1771.18 1301.85C1775.34 1301.85 1777.78 1306.14 1777.78 1313.45C1777.78 1320.76 1775.34 1325.05 1771.18 1325.05C1767.02 1325.05 1764.58 1320.76 1764.58 1313.45C1764.58 1306.14 1767.02 1301.85 1771.18 1301.85Z" fill="none" stroke="#4682b4" stroke-width="3.70"/>
<path d="M1765.48 1321.00L1776.48 1305.30" stroke="#4682b4" stroke-width="3.8"/>
<path d="M1791.66 1301.85C1795.82 1301.85 1798.26 1306.14 1798.26 1313.45C1798.26 1320.76 1795.82 1325.05 1791.66 1325.05C1787.50 1325.05 1785.06 1320.76 1785.06 1313.45C1785.06 1306.14 1787.50 1301.85 1791.66 1301.85Z" fill="none" stroke="#4682b4" stroke-width="3.70"/>
<path d="M1785.96 1321.00L1796.96 1305.30" stroke="#4682b4" stroke-width="3.8"/>
<rect x="1889.96" y="1319.40" width="5.7" height="6.2" fill="#ffffff"/>
<rect x="2012.84" y="1319.40" width="5.7" height="6.2" fill="#ffffff"/>
<path d="M1423.02 1461.85C1427.18 1461.85 1429.62 1466.14 1429.62 1473.45C1429.62 1480.76 1427.18 1485.05 1423.02 1485.05C1418.86 1485.05 1416.42 1480.76 1416.42 1473.45C1416.42 1466.14 1418.86 1461.85 1423.02 1461.85Z" fill="none" stroke="#4682b4" stroke-width="3.70"/>
<path d="M1417.32 1481.00L1428.32 1465.30" stroke="#4682b4" stroke-width="3.8"/>
<path d="M1504.94 1461.85C1509.10 1461.85 1511.54 1466.14 1511.54 1473.45C1511.54 1480.76 1509.10 1485.05 1504.94 1485.05C1500.78 1485.05 1498.34 1480.76 1498.34 1473.45C1498.34 1466.14 1500.78 1461.85 1504.94 1461.85Z" fill="none" stroke="#4682b4" stroke-width="3.70"/>
<path d="M1499.24 1481.00L1510.24 1465.30" stroke="#4682b4" stroke-width="3.8"/>
<rect x="1541.80" y="1479.40" width="5.7" height="6.2" fill="#808080"/>
<rect x="1562.28" y="1479.40" width="5.7" height="6.2" fill="#808080"/>
<rect x="1582.76" y="1479.40" width="5.7" height="6.2" fill="#808080"/>
<rect x="1603.24" y="1479.40" width="5.7" height="6.2" fill="#808080"/>
<rect x="1623.72" y="1479.40" width="5.7" height="6.2" fill="#808080"/>
<rect x="1644.20" y="1479.40" width="5.7" height="6.2" fill="#808080"/>
<rect x="1664.68" y="1479.40" width="5.7" height="6.2" fill="#808080"/>
<rect x="1685.16" y="1479.40" width="5.7" height="6.2" fill="#808080"/>
<rect x="1705.64" y="1479.40" width="5.7" height="6.2" fill="#808080"/>
<rect x="1726.12" y="1479.40" width="5.7" height="6.2" fill="#808080"/>
<path d="M1771.18 1461.85C1775.34 1461.85 1777.78 1466.14 1777.78 1473.45C1777.78 1480.76 1775.34 1485.05 1771.18 1485.05C1767.02 1485.05 1764.58 1480.76 1764.58 1473.45C1764.58 1466.14 1767.02 1461.85 1771.18 1461.85Z" fill="none" stroke="#4682b4" stroke-width="3.70"/>
<path d="M1765.48 1481.00L1776.48 1465.30" stroke="#4682b4" stroke-width="3.8"/>
<path d="M1791.66 1461.85C1795.82 1461.85 1798.26 1466.14 1798.26 1473.45C1798.26 1480.76 1795.82 1485.05 1791.66 1485.05C1787.50 1485.05 1785.06 1480.76 1785.06 1473.45C1785.06 1466.14 1787.50 1461.85 1791.66 1461.85Z" fill="none" stroke="#4682b4" stroke-width="3.70"/>
<path d="M1785.96 1481.00L1796.96 1465.30" stroke="#4682b4" stroke-width="3.8"/>
<rect x="1889.96" y="1479.40" width="5.7" height="6.2" fill="#ffffff"/>
<rect x="1971.88" y="1479.40" width="5.7" height="6.2" fill="#ffffff"/>
</svg>
</body></html>
